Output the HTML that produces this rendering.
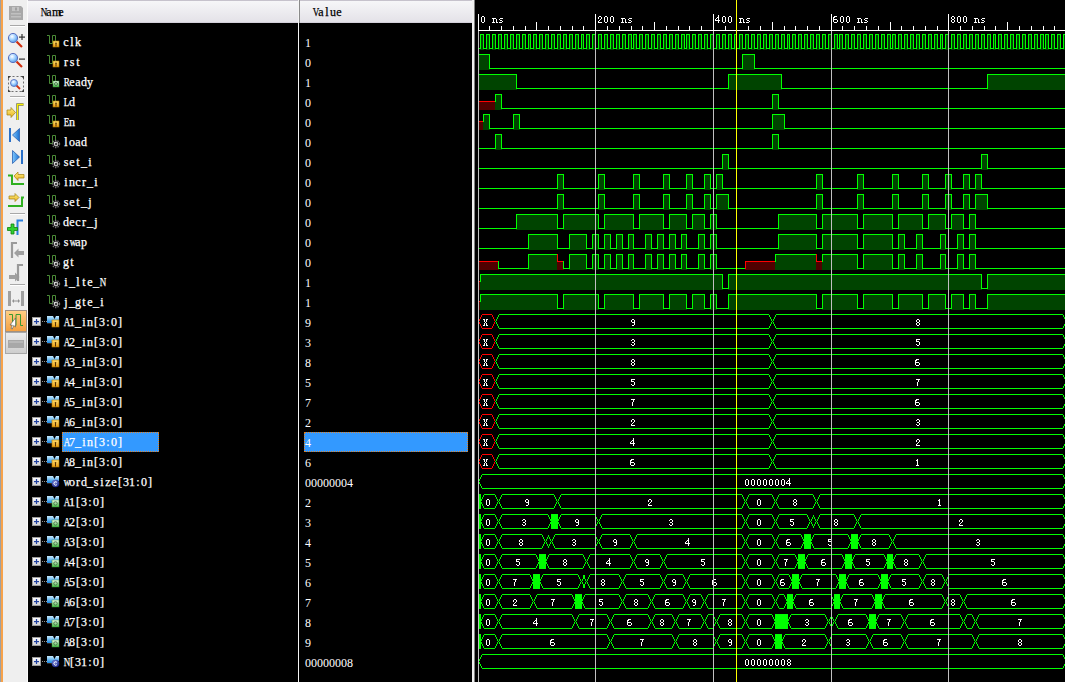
<!DOCTYPE html>
<html><head><meta charset="utf-8">
<style>
html,body{margin:0;padding:0;}
body{width:1065px;height:682px;overflow:hidden;background:#000;position:relative;font-family:"Liberation Mono",monospace;}
#tb{position:absolute;left:0;top:0;width:28px;height:682px;background:#efefef;}
#tb .o{position:absolute;left:1px;top:0;width:2px;height:682px;background:#f5a14a;}
#tb .g{position:absolute;left:0;top:0;width:1px;height:682px;background:#9a9a9a;}
.hdr{position:absolute;top:0;height:22px;background:linear-gradient(#f6f6f8,#e4e2e8);border-top:1px solid #c6c2cc;border-bottom:1px solid #d4d0da;box-sizing:border-box;height:23px;}
.hdr span{position:absolute;top:5px;font-size:12px;color:#000;letter-spacing:-1.2px;}
.nm{position:absolute;left:63px;height:16px;line-height:16px;font-size:12px;color:#fff;font-family:"Liberation Serif",serif;width:120px;-webkit-text-stroke:0.25px currentColor;}
.nm i{position:absolute;top:0;width:6px;text-align:center;font-style:normal;}
.nm i.u{transform:scaleX(.75);}
.vl{position:absolute;left:305px;height:16px;line-height:16px;font-size:12px;color:#fff;font-family:"Liberation Serif",serif;white-space:pre;}
.sel{position:absolute;background:#3399ff;outline:1px dotted #e08020;outline-offset:-1px;}
svg text.bl{font-family:"Liberation Serif",serif;font-size:10.5px;letter-spacing:0.75px;fill:#fff;}
svg text.rl{font-family:"Liberation Serif",serif;font-size:10.5px;letter-spacing:0.75px;fill:#fff;}
</style></head><body>
<svg width="28" height="682" style="position:absolute;left:0;top:0">
<defs>
<radialGradient id="lens" cx="0.4" cy="0.35" r="0.7"><stop offset="0" stop-color="#ffffff"/><stop offset="0.5" stop-color="#9fd0ff"/><stop offset="1" stop-color="#4a90e0"/></radialGradient>
<linearGradient id="org" x1="0" y1="0" x2="0" y2="1"><stop offset="0" stop-color="#ffcf85"/><stop offset="1" stop-color="#f5a040"/></linearGradient>
<linearGradient id="gbtn" x1="0" y1="0" x2="0" y2="1"><stop offset="0" stop-color="#ececec"/><stop offset="1" stop-color="#cdcdcd"/></linearGradient>
<linearGradient id="yel" x1="0" y1="0" x2="0" y2="1"><stop offset="0" stop-color="#fff080"/><stop offset="1" stop-color="#e8b020"/></linearGradient>
<linearGradient id="blu" x1="0" y1="0" x2="1" y2="0"><stop offset="0" stop-color="#80c8ff"/><stop offset="1" stop-color="#1a70d0"/></linearGradient>
</defs>
<rect x="0" y="0" width="1" height="682" fill="#a0a0a0"/>
<rect x="1" y="0" width="2" height="682" fill="#f7a24a"/>
<rect x="3" y="0" width="24" height="682" fill="#efefef"/>
<rect x="27" y="0" width="1" height="682" fill="#fbfbfb"/>
<!-- save -->
<path d="M9 6 H21 L23 8 V20 H9 Z" fill="#a8a8a8"/>
<rect x="12" y="7" width="7" height="4" fill="#c4c4c4"/>
<rect x="15" y="7.5" width="2" height="3" fill="#a0a0a0"/>
<rect x="11" y="13" width="10" height="1.5" fill="#c0c0c0"/>
<rect x="11" y="16" width="10" height="1.5" fill="#c0c0c0"/>
<!-- separator -->
<rect x="10" y="25" width="15" height="1" fill="#a8a8a8"/><rect x="10" y="26" width="15" height="1" fill="#ffffff"/>
<!-- zoom in -->
<line x1="16.5" y1="41.5" x2="22" y2="47" stroke="#d03010" stroke-width="2.2"/>
<circle cx="13" cy="38" r="4.6" fill="url(#lens)" stroke="#5a70c0" stroke-width="1"/>
<rect x="19" y="36.5" width="6" height="1.2" fill="#303030"/><rect x="21.4" y="34" width="1.2" height="6" fill="#303030"/>
<!-- zoom out -->
<line x1="16.5" y1="61.5" x2="22" y2="67" stroke="#d03010" stroke-width="2.2"/>
<circle cx="13" cy="58" r="4.6" fill="url(#lens)" stroke="#5a70c0" stroke-width="1"/>
<rect x="19" y="58.5" width="6" height="1.2" fill="#303030"/>
<!-- zoom fit -->
<rect x="8.5" y="76.5" width="15" height="15" fill="none" stroke="#707070" stroke-width="1" stroke-dasharray="2 2"/>
<path d="M8 76 h3 l-3 3z M24 76 h-3 l3 3z M8 92 h3 l-3 -3z M24 92 h-3 l3 -3z" fill="#404040"/>
<line x1="16" y1="85" x2="20" y2="89" stroke="#d03010" stroke-width="1.8"/>
<circle cx="14" cy="83" r="3.5" fill="url(#lens)" stroke="#5a70c0" stroke-width="0.9"/>
<!-- separator -->
<rect x="10" y="96" width="15" height="1" fill="#a8a8a8"/><rect x="10" y="97" width="15" height="1" fill="#ffffff"/>
<!-- go to cursor -->
<path d="M7 110 H11 V107.5 L15.5 112.5 L11 117.5 V115 H7 Z" fill="url(#yel)" stroke="#a08010" stroke-width="0.7"/>
<path d="M17.5 120 V104.5 H23.5" fill="none" stroke="#606060" stroke-width="2.4"/>
<path d="M17.5 120 V104.5 H23.5" fill="none" stroke="#f8f000" stroke-width="1.3"/>
<!-- |< -->
<rect x="9" y="128" width="2" height="14" fill="#2a70c8"/>
<path d="M12.5 135 L19.5 128.5 V141.5 Z" fill="url(#blu)" stroke="#2a60b0" stroke-width="0.8"/>
<!-- >| -->
<rect x="21" y="150" width="2" height="14" fill="#2a70c8"/>
<path d="M19.5 157 L12.5 150.5 V163.5 Z" fill="url(#blu)" stroke="#2a60b0" stroke-width="0.8"/>
<!-- step left arrow -->
<path d="M8 175.5 H12 V184 H24" fill="none" stroke="#30b020" stroke-width="2"/>
<path d="M14 176 L18 172 V174.5 H24 V178 H18 V180.5 Z" fill="url(#yel)" stroke="#a08010" stroke-width="0.7"/>
<!-- step right arrow -->
<path d="M9 196 H15 V193.5 L19 197.5 L15 201.5 V199 H9 Z" fill="url(#yel)" stroke="#a08010" stroke-width="0.7"/>
<path d="M8 206 H22 V197.5 H24" fill="none" stroke="#30b020" stroke-width="2"/>
<!-- separator -->
<rect x="10" y="213" width="15" height="1" fill="#a8a8a8"/><rect x="10" y="214" width="15" height="1" fill="#ffffff"/>
<!-- add marker -->
<path d="M17.5 235 V220.5 H23" fill="none" stroke="#2a80e0" stroke-width="2"/>
<path d="M11 224 H14 V227.5 H17.5 V230.5 H14 V234 H11 V230.5 H7.5 V227.5 H11 Z" fill="#30d030" stroke="#108010" stroke-width="0.8"/>
<!-- gray step prev marker -->
<path d="M12 258 V243 H17" fill="none" stroke="#9a9a9a" stroke-width="2.2"/>
<path d="M14 253 L18.5 248.5 V251 H24 V255 H18.5 V257.5 Z" fill="#a0a0a0"/>
<!-- gray step next marker -->
<path d="M9 275 H15 V272.5 L19.5 277 L15 281.5 V279 H9 Z" fill="#a0a0a0"/>
<path d="M18 281 V265 H23" fill="none" stroke="#9a9a9a" stroke-width="2.2"/>
<!-- separator -->
<rect x="10" y="284" width="15" height="1" fill="#a8a8a8"/><rect x="10" y="285" width="15" height="1" fill="#ffffff"/>
<!-- H arrows -->
<rect x="8" y="291" width="3" height="15" fill="#a0a0a0"/>
<rect x="21" y="291" width="3" height="15" fill="#a0a0a0"/>
<path d="M12 301 L14 299 V300.5 H18 V299 L20 301 L18 303 V301.5 H14 V303 Z" fill="#909090"/>
<!-- active button -->
<rect x="5.5" y="310.5" width="21" height="21" fill="url(#org)" stroke="#a09080" stroke-width="1"/>
<path d="M9 314.5 H12.5 V325.5 H16 V314.5 H20.5 V325.5 H23" fill="none" stroke="#3a9a30" stroke-width="1"/>
<path d="M15.5 318 L15.5 327 L13.7 325.5 L12.3 329 L11 328.4 L12.3 325 L10 325 Z" fill="#ffffff" stroke="#505050" stroke-width="0.6"/>
<!-- gray button -->
<rect x="5.5" y="332.5" width="21" height="21" fill="url(#gbtn)" stroke="#a8a8a8" stroke-width="1"/>
<rect x="8" y="340" width="16" height="8" fill="#a8a8a8"/>
<rect x="9" y="341" width="14" height="2" fill="#b8b8b8"/>
</svg>

<div class="hdr" style="left:28px;width:270px;"><div class="nm" style="left:12px;top:3px;color:#000"><i class="u" style="left:0px">N</i><i style="left:6px">a</i><i style="left:12px">m</i><i style="left:18px">e</i></div></div>
<div style="position:absolute;left:298px;top:0;width:1px;height:682px;background:#f4f4f4"></div>
<div style="position:absolute;left:299px;top:0;width:1px;height:23px;background:#8a8a8a"></div>
<div class="hdr" style="left:300px;width:172px;"><div class="nm" style="left:12px;top:3px;color:#000"><i class="u" style="left:0px">V</i><i style="left:6px">a</i><i style="left:12px">l</i><i style="left:18px">u</i><i style="left:24px">e</i></div></div>
<div style="position:absolute;left:472px;top:0;width:2px;height:682px;background:#f0f0f0"></div>
<div style="position:absolute;left:474px;top:0;width:1px;height:682px;background:#808080"></div>
<div class="sel" style="left:62px;top:432px;width:97px;height:20px"></div>
<div class="sel" style="left:304px;top:432px;width:164px;height:20px"></div>
<div class="nm" style="top:34px"><i style="left:0px">c</i><i style="left:6px">l</i><i style="left:12px">k</i></div><div class="nm" style="top:54px"><i style="left:0px">r</i><i style="left:6px">s</i><i style="left:12px">t</i></div><div class="nm" style="top:74px"><i class="u" style="left:0px">R</i><i style="left:6px">e</i><i style="left:12px">a</i><i style="left:18px">d</i><i style="left:24px">y</i></div><div class="nm" style="top:94px"><i class="u" style="left:0px">L</i><i style="left:6px">d</i></div><div class="nm" style="top:114px"><i class="u" style="left:0px">E</i><i style="left:6px">n</i></div><div class="nm" style="top:134px"><i style="left:0px">l</i><i style="left:6px">o</i><i style="left:12px">a</i><i style="left:18px">d</i></div><div class="nm" style="top:154px"><i style="left:0px">s</i><i style="left:6px">e</i><i style="left:12px">t</i><i style="left:18px">_</i><i style="left:24px">i</i></div><div class="nm" style="top:174px"><i style="left:0px">i</i><i style="left:6px">n</i><i style="left:12px">c</i><i style="left:18px">r</i><i style="left:24px">_</i><i style="left:30px">i</i></div><div class="nm" style="top:194px"><i style="left:0px">s</i><i style="left:6px">e</i><i style="left:12px">t</i><i style="left:18px">_</i><i style="left:24px">j</i></div><div class="nm" style="top:214px"><i style="left:0px">d</i><i style="left:6px">e</i><i style="left:12px">c</i><i style="left:18px">r</i><i style="left:24px">_</i><i style="left:30px">j</i></div><div class="nm" style="top:234px"><i style="left:0px">s</i><i class="u" style="left:6px">w</i><i style="left:12px">a</i><i style="left:18px">p</i></div><div class="nm" style="top:254px"><i style="left:0px">g</i><i style="left:6px">t</i></div><div class="nm" style="top:274px"><i style="left:0px">i</i><i style="left:6px">_</i><i style="left:12px">l</i><i style="left:18px">t</i><i style="left:24px">e</i><i style="left:30px">_</i><i class="u" style="left:36px">N</i></div><div class="nm" style="top:294px"><i style="left:0px">j</i><i style="left:6px">_</i><i style="left:12px">g</i><i style="left:18px">t</i><i style="left:24px">e</i><i style="left:30px">_</i><i style="left:36px">i</i></div><div class="nm" style="top:314px"><i class="u" style="left:0px">A</i><i style="left:6px">1</i><i style="left:12px">_</i><i style="left:18px">i</i><i style="left:24px">n</i><i style="left:30px">[</i><i style="left:36px">3</i><i style="left:42px">:</i><i style="left:48px">0</i><i style="left:54px">]</i></div><div class="nm" style="top:334px"><i class="u" style="left:0px">A</i><i style="left:6px">2</i><i style="left:12px">_</i><i style="left:18px">i</i><i style="left:24px">n</i><i style="left:30px">[</i><i style="left:36px">3</i><i style="left:42px">:</i><i style="left:48px">0</i><i style="left:54px">]</i></div><div class="nm" style="top:354px"><i class="u" style="left:0px">A</i><i style="left:6px">3</i><i style="left:12px">_</i><i style="left:18px">i</i><i style="left:24px">n</i><i style="left:30px">[</i><i style="left:36px">3</i><i style="left:42px">:</i><i style="left:48px">0</i><i style="left:54px">]</i></div><div class="nm" style="top:374px"><i class="u" style="left:0px">A</i><i style="left:6px">4</i><i style="left:12px">_</i><i style="left:18px">i</i><i style="left:24px">n</i><i style="left:30px">[</i><i style="left:36px">3</i><i style="left:42px">:</i><i style="left:48px">0</i><i style="left:54px">]</i></div><div class="nm" style="top:394px"><i class="u" style="left:0px">A</i><i style="left:6px">5</i><i style="left:12px">_</i><i style="left:18px">i</i><i style="left:24px">n</i><i style="left:30px">[</i><i style="left:36px">3</i><i style="left:42px">:</i><i style="left:48px">0</i><i style="left:54px">]</i></div><div class="nm" style="top:414px"><i class="u" style="left:0px">A</i><i style="left:6px">6</i><i style="left:12px">_</i><i style="left:18px">i</i><i style="left:24px">n</i><i style="left:30px">[</i><i style="left:36px">3</i><i style="left:42px">:</i><i style="left:48px">0</i><i style="left:54px">]</i></div><div class="nm" style="top:434px"><i class="u" style="left:0px">A</i><i style="left:6px">7</i><i style="left:12px">_</i><i style="left:18px">i</i><i style="left:24px">n</i><i style="left:30px">[</i><i style="left:36px">3</i><i style="left:42px">:</i><i style="left:48px">0</i><i style="left:54px">]</i></div><div class="nm" style="top:454px"><i class="u" style="left:0px">A</i><i style="left:6px">8</i><i style="left:12px">_</i><i style="left:18px">i</i><i style="left:24px">n</i><i style="left:30px">[</i><i style="left:36px">3</i><i style="left:42px">:</i><i style="left:48px">0</i><i style="left:54px">]</i></div><div class="nm" style="top:474px"><i class="u" style="left:0px">w</i><i style="left:6px">o</i><i style="left:12px">r</i><i style="left:18px">d</i><i style="left:24px">_</i><i style="left:30px">s</i><i style="left:36px">i</i><i style="left:42px">z</i><i style="left:48px">e</i><i style="left:54px">[</i><i style="left:60px">3</i><i style="left:66px">1</i><i style="left:72px">:</i><i style="left:78px">0</i><i style="left:84px">]</i></div><div class="nm" style="top:494px"><i class="u" style="left:0px">A</i><i style="left:6px">1</i><i style="left:12px">[</i><i style="left:18px">3</i><i style="left:24px">:</i><i style="left:30px">0</i><i style="left:36px">]</i></div><div class="nm" style="top:514px"><i class="u" style="left:0px">A</i><i style="left:6px">2</i><i style="left:12px">[</i><i style="left:18px">3</i><i style="left:24px">:</i><i style="left:30px">0</i><i style="left:36px">]</i></div><div class="nm" style="top:534px"><i class="u" style="left:0px">A</i><i style="left:6px">3</i><i style="left:12px">[</i><i style="left:18px">3</i><i style="left:24px">:</i><i style="left:30px">0</i><i style="left:36px">]</i></div><div class="nm" style="top:554px"><i class="u" style="left:0px">A</i><i style="left:6px">4</i><i style="left:12px">[</i><i style="left:18px">3</i><i style="left:24px">:</i><i style="left:30px">0</i><i style="left:36px">]</i></div><div class="nm" style="top:574px"><i class="u" style="left:0px">A</i><i style="left:6px">5</i><i style="left:12px">[</i><i style="left:18px">3</i><i style="left:24px">:</i><i style="left:30px">0</i><i style="left:36px">]</i></div><div class="nm" style="top:594px"><i class="u" style="left:0px">A</i><i style="left:6px">6</i><i style="left:12px">[</i><i style="left:18px">3</i><i style="left:24px">:</i><i style="left:30px">0</i><i style="left:36px">]</i></div><div class="nm" style="top:614px"><i class="u" style="left:0px">A</i><i style="left:6px">7</i><i style="left:12px">[</i><i style="left:18px">3</i><i style="left:24px">:</i><i style="left:30px">0</i><i style="left:36px">]</i></div><div class="nm" style="top:634px"><i class="u" style="left:0px">A</i><i style="left:6px">8</i><i style="left:12px">[</i><i style="left:18px">3</i><i style="left:24px">:</i><i style="left:30px">0</i><i style="left:36px">]</i></div><div class="nm" style="top:654px"><i class="u" style="left:0px">N</i><i style="left:6px">[</i><i style="left:12px">3</i><i style="left:18px">1</i><i style="left:24px">:</i><i style="left:30px">0</i><i style="left:36px">]</i></div>
<div class="vl" style="top:35px">1</div><div class="vl" style="top:55px">0</div><div class="vl" style="top:75px">1</div><div class="vl" style="top:95px">0</div><div class="vl" style="top:115px">0</div><div class="vl" style="top:135px">0</div><div class="vl" style="top:155px">0</div><div class="vl" style="top:175px">0</div><div class="vl" style="top:195px">0</div><div class="vl" style="top:215px">0</div><div class="vl" style="top:235px">0</div><div class="vl" style="top:255px">0</div><div class="vl" style="top:275px">1</div><div class="vl" style="top:295px">1</div><div class="vl" style="top:315px">9</div><div class="vl" style="top:335px">3</div><div class="vl" style="top:355px">8</div><div class="vl" style="top:375px">5</div><div class="vl" style="top:395px">7</div><div class="vl" style="top:415px">2</div><div class="vl" style="top:435px">4</div><div class="vl" style="top:455px">6</div><div class="vl" style="top:475px">00000004</div><div class="vl" style="top:495px">2</div><div class="vl" style="top:515px">3</div><div class="vl" style="top:535px">4</div><div class="vl" style="top:555px">5</div><div class="vl" style="top:575px">6</div><div class="vl" style="top:595px">7</div><div class="vl" style="top:615px">8</div><div class="vl" style="top:635px">9</div><div class="vl" style="top:655px">00000008</div>
<svg width="1065" height="682" style="position:absolute;left:0;top:0">
<defs>
<linearGradient id="gy" x1="0" y1="0" x2="0" y2="1"><stop offset="0" stop-color="#ffe070"/><stop offset="1" stop-color="#e89a10"/></linearGradient>
<linearGradient id="gg" x1="0" y1="0" x2="0" y2="1"><stop offset="0" stop-color="#f0fff0"/><stop offset="1" stop-color="#40c040"/></linearGradient>
<linearGradient id="gbox" x1="0" y1="0" x2="0" y2="1"><stop offset="0" stop-color="#ffffff"/><stop offset="1" stop-color="#d0d0d0"/></linearGradient>
<linearGradient id="gbus" x1="0" y1="0" x2="0" y2="1"><stop offset="0" stop-color="#c8ecff"/><stop offset="1" stop-color="#1a88e0"/></linearGradient>
<radialGradient id="gc" cx="0.4" cy="0.35" r="0.7"><stop offset="0" stop-color="#8090e0"/><stop offset="1" stop-color="#101a80"/></radialGradient>
</defs>
<path d="M47 35.5 H49.5 V43.5 H52.5 V35.5 H55.5 V41" stroke="#4a8a36" stroke-width="1" fill="none"/>
<rect x="53" y="41" width="6" height="6" fill="url(#gy)" stroke="#b07800" stroke-width="0.6"/><circle cx="56.0" cy="43.2" r="0.8" fill="#503000"/><rect x="55.5" y="43.5" width="1" height="3.0" fill="#503000"/>
<path d="M47 55.5 H49.5 V63.5 H52.5 V55.5 H55.5 V61" stroke="#4a8a36" stroke-width="1" fill="none"/>
<rect x="53" y="61" width="6" height="6" fill="url(#gy)" stroke="#b07800" stroke-width="0.6"/><circle cx="56.0" cy="63.2" r="0.8" fill="#503000"/><rect x="55.5" y="63.5" width="1" height="3.0" fill="#503000"/>
<path d="M47 75.5 H49.5 V83.5 H52.5 V75.5 H55.5 V81" stroke="#4a8a36" stroke-width="1" fill="none"/>
<rect x="53" y="81" width="6" height="6" fill="url(#gg)" stroke="#3a8a3a" stroke-width="0.5"/><circle cx="56.0" cy="84.0" r="1.5" fill="none" stroke="#4a6a4a" stroke-width="0.9"/>
<path d="M47 95.5 H49.5 V103.5 H52.5 V95.5 H55.5 V101" stroke="#4a8a36" stroke-width="1" fill="none"/>
<rect x="53" y="101" width="6" height="6" fill="url(#gy)" stroke="#b07800" stroke-width="0.6"/><circle cx="56.0" cy="103.2" r="0.8" fill="#503000"/><rect x="55.5" y="103.5" width="1" height="3.0" fill="#503000"/>
<path d="M47 115.5 H49.5 V123.5 H52.5 V115.5 H55.5 V121" stroke="#4a8a36" stroke-width="1" fill="none"/>
<rect x="53" y="121" width="6" height="6" fill="url(#gy)" stroke="#b07800" stroke-width="0.6"/><circle cx="56.0" cy="123.2" r="0.8" fill="#503000"/><rect x="55.5" y="123.5" width="1" height="3.0" fill="#503000"/>
<path d="M47 135.5 H49.5 V143.5 H52.5 V135.5 H55.5 V141" stroke="#4a8a36" stroke-width="1" fill="none"/>
<circle cx="56.0" cy="144.0" r="3.5" fill="none" stroke="#7a7a7a" stroke-width="1.4" stroke-dasharray="1.4 1.1"/><circle cx="56.0" cy="144.0" r="2.4" fill="#b4b4b4"/><circle cx="55.2" cy="143.2" r="1.2" fill="#e0e0e0"/><circle cx="56.0" cy="144.0" r="1" fill="#181818"/>
<path d="M47 155.5 H49.5 V163.5 H52.5 V155.5 H55.5 V161" stroke="#4a8a36" stroke-width="1" fill="none"/>
<circle cx="56.0" cy="164.0" r="3.5" fill="none" stroke="#7a7a7a" stroke-width="1.4" stroke-dasharray="1.4 1.1"/><circle cx="56.0" cy="164.0" r="2.4" fill="#b4b4b4"/><circle cx="55.2" cy="163.2" r="1.2" fill="#e0e0e0"/><circle cx="56.0" cy="164.0" r="1" fill="#181818"/>
<path d="M47 175.5 H49.5 V183.5 H52.5 V175.5 H55.5 V181" stroke="#4a8a36" stroke-width="1" fill="none"/>
<circle cx="56.0" cy="184.0" r="3.5" fill="none" stroke="#7a7a7a" stroke-width="1.4" stroke-dasharray="1.4 1.1"/><circle cx="56.0" cy="184.0" r="2.4" fill="#b4b4b4"/><circle cx="55.2" cy="183.2" r="1.2" fill="#e0e0e0"/><circle cx="56.0" cy="184.0" r="1" fill="#181818"/>
<path d="M47 195.5 H49.5 V203.5 H52.5 V195.5 H55.5 V201" stroke="#4a8a36" stroke-width="1" fill="none"/>
<circle cx="56.0" cy="204.0" r="3.5" fill="none" stroke="#7a7a7a" stroke-width="1.4" stroke-dasharray="1.4 1.1"/><circle cx="56.0" cy="204.0" r="2.4" fill="#b4b4b4"/><circle cx="55.2" cy="203.2" r="1.2" fill="#e0e0e0"/><circle cx="56.0" cy="204.0" r="1" fill="#181818"/>
<path d="M47 215.5 H49.5 V223.5 H52.5 V215.5 H55.5 V221" stroke="#4a8a36" stroke-width="1" fill="none"/>
<circle cx="56.0" cy="224.0" r="3.5" fill="none" stroke="#7a7a7a" stroke-width="1.4" stroke-dasharray="1.4 1.1"/><circle cx="56.0" cy="224.0" r="2.4" fill="#b4b4b4"/><circle cx="55.2" cy="223.2" r="1.2" fill="#e0e0e0"/><circle cx="56.0" cy="224.0" r="1" fill="#181818"/>
<path d="M47 235.5 H49.5 V243.5 H52.5 V235.5 H55.5 V241" stroke="#4a8a36" stroke-width="1" fill="none"/>
<circle cx="56.0" cy="244.0" r="3.5" fill="none" stroke="#7a7a7a" stroke-width="1.4" stroke-dasharray="1.4 1.1"/><circle cx="56.0" cy="244.0" r="2.4" fill="#b4b4b4"/><circle cx="55.2" cy="243.2" r="1.2" fill="#e0e0e0"/><circle cx="56.0" cy="244.0" r="1" fill="#181818"/>
<path d="M47 255.5 H49.5 V263.5 H52.5 V255.5 H55.5 V261" stroke="#4a8a36" stroke-width="1" fill="none"/>
<circle cx="56.0" cy="264.0" r="3.5" fill="none" stroke="#7a7a7a" stroke-width="1.4" stroke-dasharray="1.4 1.1"/><circle cx="56.0" cy="264.0" r="2.4" fill="#b4b4b4"/><circle cx="55.2" cy="263.2" r="1.2" fill="#e0e0e0"/><circle cx="56.0" cy="264.0" r="1" fill="#181818"/>
<path d="M47 275.5 H49.5 V283.5 H52.5 V275.5 H55.5 V281" stroke="#4a8a36" stroke-width="1" fill="none"/>
<circle cx="56.0" cy="284.0" r="3.5" fill="none" stroke="#7a7a7a" stroke-width="1.4" stroke-dasharray="1.4 1.1"/><circle cx="56.0" cy="284.0" r="2.4" fill="#b4b4b4"/><circle cx="55.2" cy="283.2" r="1.2" fill="#e0e0e0"/><circle cx="56.0" cy="284.0" r="1" fill="#181818"/>
<path d="M47 295.5 H49.5 V303.5 H52.5 V295.5 H55.5 V301" stroke="#4a8a36" stroke-width="1" fill="none"/>
<circle cx="56.0" cy="304.0" r="3.5" fill="none" stroke="#7a7a7a" stroke-width="1.4" stroke-dasharray="1.4 1.1"/><circle cx="56.0" cy="304.0" r="2.4" fill="#b4b4b4"/><circle cx="55.2" cy="303.2" r="1.2" fill="#e0e0e0"/><circle cx="56.0" cy="304.0" r="1" fill="#181818"/>
<rect x="32.5" y="317.5" width="8" height="8" fill="url(#gbox)" stroke="#9a9a9a" stroke-width="1"/>
<rect x="34" y="321" width="5" height="1.2" fill="#1f3f9f"/><rect x="35.9" y="319" width="1.2" height="5" fill="#1f3f9f"/>
<rect x="42" y="321" width="1" height="1" fill="#909090"/><rect x="44" y="321" width="1" height="1" fill="#909090"/><rect x="46" y="321" width="1" height="1" fill="#909090"/>
<rect x="47" y="323" width="6" height="1" fill="#3a2a20"/>
<path d="M47 316 H53 L54.5 319 L56 316 H59 V321 H53 V323 H47 Z" fill="url(#gbus)"/>
<rect x="52" y="320" width="7" height="7" fill="url(#gy)" stroke="#b07800" stroke-width="0.6"/><circle cx="55.5" cy="322.7" r="0.8" fill="#503000"/><rect x="55.0" y="323.0" width="1" height="3.5" fill="#503000"/>
<rect x="32.5" y="337.5" width="8" height="8" fill="url(#gbox)" stroke="#9a9a9a" stroke-width="1"/>
<rect x="34" y="341" width="5" height="1.2" fill="#1f3f9f"/><rect x="35.9" y="339" width="1.2" height="5" fill="#1f3f9f"/>
<rect x="42" y="341" width="1" height="1" fill="#909090"/><rect x="44" y="341" width="1" height="1" fill="#909090"/><rect x="46" y="341" width="1" height="1" fill="#909090"/>
<rect x="47" y="343" width="6" height="1" fill="#3a2a20"/>
<path d="M47 336 H53 L54.5 339 L56 336 H59 V341 H53 V343 H47 Z" fill="url(#gbus)"/>
<rect x="52" y="340" width="7" height="7" fill="url(#gy)" stroke="#b07800" stroke-width="0.6"/><circle cx="55.5" cy="342.7" r="0.8" fill="#503000"/><rect x="55.0" y="343.0" width="1" height="3.5" fill="#503000"/>
<rect x="32.5" y="357.5" width="8" height="8" fill="url(#gbox)" stroke="#9a9a9a" stroke-width="1"/>
<rect x="34" y="361" width="5" height="1.2" fill="#1f3f9f"/><rect x="35.9" y="359" width="1.2" height="5" fill="#1f3f9f"/>
<rect x="42" y="361" width="1" height="1" fill="#909090"/><rect x="44" y="361" width="1" height="1" fill="#909090"/><rect x="46" y="361" width="1" height="1" fill="#909090"/>
<rect x="47" y="363" width="6" height="1" fill="#3a2a20"/>
<path d="M47 356 H53 L54.5 359 L56 356 H59 V361 H53 V363 H47 Z" fill="url(#gbus)"/>
<rect x="52" y="360" width="7" height="7" fill="url(#gy)" stroke="#b07800" stroke-width="0.6"/><circle cx="55.5" cy="362.7" r="0.8" fill="#503000"/><rect x="55.0" y="363.0" width="1" height="3.5" fill="#503000"/>
<rect x="32.5" y="377.5" width="8" height="8" fill="url(#gbox)" stroke="#9a9a9a" stroke-width="1"/>
<rect x="34" y="381" width="5" height="1.2" fill="#1f3f9f"/><rect x="35.9" y="379" width="1.2" height="5" fill="#1f3f9f"/>
<rect x="42" y="381" width="1" height="1" fill="#909090"/><rect x="44" y="381" width="1" height="1" fill="#909090"/><rect x="46" y="381" width="1" height="1" fill="#909090"/>
<rect x="47" y="383" width="6" height="1" fill="#3a2a20"/>
<path d="M47 376 H53 L54.5 379 L56 376 H59 V381 H53 V383 H47 Z" fill="url(#gbus)"/>
<rect x="52" y="380" width="7" height="7" fill="url(#gy)" stroke="#b07800" stroke-width="0.6"/><circle cx="55.5" cy="382.7" r="0.8" fill="#503000"/><rect x="55.0" y="383.0" width="1" height="3.5" fill="#503000"/>
<rect x="32.5" y="397.5" width="8" height="8" fill="url(#gbox)" stroke="#9a9a9a" stroke-width="1"/>
<rect x="34" y="401" width="5" height="1.2" fill="#1f3f9f"/><rect x="35.9" y="399" width="1.2" height="5" fill="#1f3f9f"/>
<rect x="42" y="401" width="1" height="1" fill="#909090"/><rect x="44" y="401" width="1" height="1" fill="#909090"/><rect x="46" y="401" width="1" height="1" fill="#909090"/>
<rect x="47" y="403" width="6" height="1" fill="#3a2a20"/>
<path d="M47 396 H53 L54.5 399 L56 396 H59 V401 H53 V403 H47 Z" fill="url(#gbus)"/>
<rect x="52" y="400" width="7" height="7" fill="url(#gy)" stroke="#b07800" stroke-width="0.6"/><circle cx="55.5" cy="402.7" r="0.8" fill="#503000"/><rect x="55.0" y="403.0" width="1" height="3.5" fill="#503000"/>
<rect x="32.5" y="417.5" width="8" height="8" fill="url(#gbox)" stroke="#9a9a9a" stroke-width="1"/>
<rect x="34" y="421" width="5" height="1.2" fill="#1f3f9f"/><rect x="35.9" y="419" width="1.2" height="5" fill="#1f3f9f"/>
<rect x="42" y="421" width="1" height="1" fill="#909090"/><rect x="44" y="421" width="1" height="1" fill="#909090"/><rect x="46" y="421" width="1" height="1" fill="#909090"/>
<rect x="47" y="423" width="6" height="1" fill="#3a2a20"/>
<path d="M47 416 H53 L54.5 419 L56 416 H59 V421 H53 V423 H47 Z" fill="url(#gbus)"/>
<rect x="52" y="420" width="7" height="7" fill="url(#gy)" stroke="#b07800" stroke-width="0.6"/><circle cx="55.5" cy="422.7" r="0.8" fill="#503000"/><rect x="55.0" y="423.0" width="1" height="3.5" fill="#503000"/>
<rect x="32.5" y="437.5" width="8" height="8" fill="url(#gbox)" stroke="#9a9a9a" stroke-width="1"/>
<rect x="34" y="441" width="5" height="1.2" fill="#1f3f9f"/><rect x="35.9" y="439" width="1.2" height="5" fill="#1f3f9f"/>
<rect x="42" y="441" width="1" height="1" fill="#909090"/><rect x="44" y="441" width="1" height="1" fill="#909090"/><rect x="46" y="441" width="1" height="1" fill="#909090"/>
<rect x="47" y="443" width="6" height="1" fill="#3a2a20"/>
<path d="M47 436 H53 L54.5 439 L56 436 H59 V441 H53 V443 H47 Z" fill="url(#gbus)"/>
<rect x="52" y="440" width="7" height="7" fill="url(#gy)" stroke="#b07800" stroke-width="0.6"/><circle cx="55.5" cy="442.7" r="0.8" fill="#503000"/><rect x="55.0" y="443.0" width="1" height="3.5" fill="#503000"/>
<rect x="32.5" y="457.5" width="8" height="8" fill="url(#gbox)" stroke="#9a9a9a" stroke-width="1"/>
<rect x="34" y="461" width="5" height="1.2" fill="#1f3f9f"/><rect x="35.9" y="459" width="1.2" height="5" fill="#1f3f9f"/>
<rect x="42" y="461" width="1" height="1" fill="#909090"/><rect x="44" y="461" width="1" height="1" fill="#909090"/><rect x="46" y="461" width="1" height="1" fill="#909090"/>
<rect x="47" y="463" width="6" height="1" fill="#3a2a20"/>
<path d="M47 456 H53 L54.5 459 L56 456 H59 V461 H53 V463 H47 Z" fill="url(#gbus)"/>
<rect x="52" y="460" width="7" height="7" fill="url(#gy)" stroke="#b07800" stroke-width="0.6"/><circle cx="55.5" cy="462.7" r="0.8" fill="#503000"/><rect x="55.0" y="463.0" width="1" height="3.5" fill="#503000"/>
<rect x="32.5" y="477.5" width="8" height="8" fill="url(#gbox)" stroke="#9a9a9a" stroke-width="1"/>
<rect x="34" y="481" width="5" height="1.2" fill="#1f3f9f"/><rect x="35.9" y="479" width="1.2" height="5" fill="#1f3f9f"/>
<rect x="42" y="481" width="1" height="1" fill="#909090"/><rect x="44" y="481" width="1" height="1" fill="#909090"/><rect x="46" y="481" width="1" height="1" fill="#909090"/>
<rect x="47" y="483" width="6" height="1" fill="#3a2a20"/>
<path d="M47 476 H53 L54.5 479 L56 476 H59 V481 H53 V483 H47 Z" fill="url(#gbus)"/>
<circle cx="55.5" cy="483.5" r="3.8" fill="url(#gc)"/><path d="M56.9 482.3 A1.7 1.7 0 1 0 56.9 484.7" stroke="#ffffff" stroke-width="1" fill="none"/>
<rect x="32.5" y="497.5" width="8" height="8" fill="url(#gbox)" stroke="#9a9a9a" stroke-width="1"/>
<rect x="34" y="501" width="5" height="1.2" fill="#1f3f9f"/><rect x="35.9" y="499" width="1.2" height="5" fill="#1f3f9f"/>
<rect x="42" y="501" width="1" height="1" fill="#909090"/><rect x="44" y="501" width="1" height="1" fill="#909090"/><rect x="46" y="501" width="1" height="1" fill="#909090"/>
<rect x="47" y="503" width="6" height="1" fill="#3a2a20"/>
<path d="M47 496 H53 L54.5 499 L56 496 H59 V501 H53 V503 H47 Z" fill="url(#gbus)"/>
<rect x="52" y="500" width="7" height="7" fill="url(#gg)" stroke="#3a8a3a" stroke-width="0.5"/><circle cx="55.5" cy="503.5" r="1.75" fill="none" stroke="#4a6a4a" stroke-width="0.9"/>
<rect x="32.5" y="517.5" width="8" height="8" fill="url(#gbox)" stroke="#9a9a9a" stroke-width="1"/>
<rect x="34" y="521" width="5" height="1.2" fill="#1f3f9f"/><rect x="35.9" y="519" width="1.2" height="5" fill="#1f3f9f"/>
<rect x="42" y="521" width="1" height="1" fill="#909090"/><rect x="44" y="521" width="1" height="1" fill="#909090"/><rect x="46" y="521" width="1" height="1" fill="#909090"/>
<rect x="47" y="523" width="6" height="1" fill="#3a2a20"/>
<path d="M47 516 H53 L54.5 519 L56 516 H59 V521 H53 V523 H47 Z" fill="url(#gbus)"/>
<rect x="52" y="520" width="7" height="7" fill="url(#gg)" stroke="#3a8a3a" stroke-width="0.5"/><circle cx="55.5" cy="523.5" r="1.75" fill="none" stroke="#4a6a4a" stroke-width="0.9"/>
<rect x="32.5" y="537.5" width="8" height="8" fill="url(#gbox)" stroke="#9a9a9a" stroke-width="1"/>
<rect x="34" y="541" width="5" height="1.2" fill="#1f3f9f"/><rect x="35.9" y="539" width="1.2" height="5" fill="#1f3f9f"/>
<rect x="42" y="541" width="1" height="1" fill="#909090"/><rect x="44" y="541" width="1" height="1" fill="#909090"/><rect x="46" y="541" width="1" height="1" fill="#909090"/>
<rect x="47" y="543" width="6" height="1" fill="#3a2a20"/>
<path d="M47 536 H53 L54.5 539 L56 536 H59 V541 H53 V543 H47 Z" fill="url(#gbus)"/>
<rect x="52" y="540" width="7" height="7" fill="url(#gg)" stroke="#3a8a3a" stroke-width="0.5"/><circle cx="55.5" cy="543.5" r="1.75" fill="none" stroke="#4a6a4a" stroke-width="0.9"/>
<rect x="32.5" y="557.5" width="8" height="8" fill="url(#gbox)" stroke="#9a9a9a" stroke-width="1"/>
<rect x="34" y="561" width="5" height="1.2" fill="#1f3f9f"/><rect x="35.9" y="559" width="1.2" height="5" fill="#1f3f9f"/>
<rect x="42" y="561" width="1" height="1" fill="#909090"/><rect x="44" y="561" width="1" height="1" fill="#909090"/><rect x="46" y="561" width="1" height="1" fill="#909090"/>
<rect x="47" y="563" width="6" height="1" fill="#3a2a20"/>
<path d="M47 556 H53 L54.5 559 L56 556 H59 V561 H53 V563 H47 Z" fill="url(#gbus)"/>
<rect x="52" y="560" width="7" height="7" fill="url(#gg)" stroke="#3a8a3a" stroke-width="0.5"/><circle cx="55.5" cy="563.5" r="1.75" fill="none" stroke="#4a6a4a" stroke-width="0.9"/>
<rect x="32.5" y="577.5" width="8" height="8" fill="url(#gbox)" stroke="#9a9a9a" stroke-width="1"/>
<rect x="34" y="581" width="5" height="1.2" fill="#1f3f9f"/><rect x="35.9" y="579" width="1.2" height="5" fill="#1f3f9f"/>
<rect x="42" y="581" width="1" height="1" fill="#909090"/><rect x="44" y="581" width="1" height="1" fill="#909090"/><rect x="46" y="581" width="1" height="1" fill="#909090"/>
<rect x="47" y="583" width="6" height="1" fill="#3a2a20"/>
<path d="M47 576 H53 L54.5 579 L56 576 H59 V581 H53 V583 H47 Z" fill="url(#gbus)"/>
<rect x="52" y="580" width="7" height="7" fill="url(#gg)" stroke="#3a8a3a" stroke-width="0.5"/><circle cx="55.5" cy="583.5" r="1.75" fill="none" stroke="#4a6a4a" stroke-width="0.9"/>
<rect x="32.5" y="597.5" width="8" height="8" fill="url(#gbox)" stroke="#9a9a9a" stroke-width="1"/>
<rect x="34" y="601" width="5" height="1.2" fill="#1f3f9f"/><rect x="35.9" y="599" width="1.2" height="5" fill="#1f3f9f"/>
<rect x="42" y="601" width="1" height="1" fill="#909090"/><rect x="44" y="601" width="1" height="1" fill="#909090"/><rect x="46" y="601" width="1" height="1" fill="#909090"/>
<rect x="47" y="603" width="6" height="1" fill="#3a2a20"/>
<path d="M47 596 H53 L54.5 599 L56 596 H59 V601 H53 V603 H47 Z" fill="url(#gbus)"/>
<rect x="52" y="600" width="7" height="7" fill="url(#gg)" stroke="#3a8a3a" stroke-width="0.5"/><circle cx="55.5" cy="603.5" r="1.75" fill="none" stroke="#4a6a4a" stroke-width="0.9"/>
<rect x="32.5" y="617.5" width="8" height="8" fill="url(#gbox)" stroke="#9a9a9a" stroke-width="1"/>
<rect x="34" y="621" width="5" height="1.2" fill="#1f3f9f"/><rect x="35.9" y="619" width="1.2" height="5" fill="#1f3f9f"/>
<rect x="42" y="621" width="1" height="1" fill="#909090"/><rect x="44" y="621" width="1" height="1" fill="#909090"/><rect x="46" y="621" width="1" height="1" fill="#909090"/>
<rect x="47" y="623" width="6" height="1" fill="#3a2a20"/>
<path d="M47 616 H53 L54.5 619 L56 616 H59 V621 H53 V623 H47 Z" fill="url(#gbus)"/>
<rect x="52" y="620" width="7" height="7" fill="url(#gg)" stroke="#3a8a3a" stroke-width="0.5"/><circle cx="55.5" cy="623.5" r="1.75" fill="none" stroke="#4a6a4a" stroke-width="0.9"/>
<rect x="32.5" y="637.5" width="8" height="8" fill="url(#gbox)" stroke="#9a9a9a" stroke-width="1"/>
<rect x="34" y="641" width="5" height="1.2" fill="#1f3f9f"/><rect x="35.9" y="639" width="1.2" height="5" fill="#1f3f9f"/>
<rect x="42" y="641" width="1" height="1" fill="#909090"/><rect x="44" y="641" width="1" height="1" fill="#909090"/><rect x="46" y="641" width="1" height="1" fill="#909090"/>
<rect x="47" y="643" width="6" height="1" fill="#3a2a20"/>
<path d="M47 636 H53 L54.5 639 L56 636 H59 V641 H53 V643 H47 Z" fill="url(#gbus)"/>
<rect x="52" y="640" width="7" height="7" fill="url(#gg)" stroke="#3a8a3a" stroke-width="0.5"/><circle cx="55.5" cy="643.5" r="1.75" fill="none" stroke="#4a6a4a" stroke-width="0.9"/>
<rect x="32.5" y="657.5" width="8" height="8" fill="url(#gbox)" stroke="#9a9a9a" stroke-width="1"/>
<rect x="34" y="661" width="5" height="1.2" fill="#1f3f9f"/><rect x="35.9" y="659" width="1.2" height="5" fill="#1f3f9f"/>
<rect x="42" y="661" width="1" height="1" fill="#909090"/><rect x="44" y="661" width="1" height="1" fill="#909090"/><rect x="46" y="661" width="1" height="1" fill="#909090"/>
<rect x="47" y="663" width="6" height="1" fill="#3a2a20"/>
<path d="M47 656 H53 L54.5 659 L56 656 H59 V661 H53 V663 H47 Z" fill="url(#gbus)"/>
<circle cx="55.5" cy="663.5" r="3.8" fill="url(#gc)"/><path d="M56.9 662.3 A1.7 1.7 0 1 0 56.9 664.7" stroke="#ffffff" stroke-width="1" fill="none"/>
</svg>
<svg width="1065" height="682" style="position:absolute;left:0;top:0;will-change:transform" shape-rendering="crispEdges">
<rect x="478" y="14" width="1" height="17" fill="#ffffff"/>
<rect x="595" y="14" width="1" height="17" fill="#ffffff"/>
<rect x="713" y="14" width="1" height="17" fill="#ffffff"/>
<rect x="831" y="14" width="1" height="17" fill="#ffffff"/>
<rect x="948" y="14" width="1" height="17" fill="#ffffff"/>
<rect x="478" y="30" width="587" height="1" fill="#ffffff"/>
<rect x="489" y="26" width="1" height="4" fill="#ffffff"/>
<rect x="501" y="26" width="1" height="4" fill="#ffffff"/>
<rect x="513" y="26" width="1" height="4" fill="#ffffff"/>
<rect x="525" y="26" width="1" height="4" fill="#ffffff"/>
<rect x="536" y="22" width="1" height="8" fill="#ffffff"/>
<rect x="548" y="26" width="1" height="4" fill="#ffffff"/>
<rect x="560" y="26" width="1" height="4" fill="#ffffff"/>
<rect x="572" y="26" width="1" height="4" fill="#ffffff"/>
<rect x="583" y="26" width="1" height="4" fill="#ffffff"/>
<rect x="607" y="26" width="1" height="4" fill="#ffffff"/>
<rect x="619" y="26" width="1" height="4" fill="#ffffff"/>
<rect x="631" y="26" width="1" height="4" fill="#ffffff"/>
<rect x="642" y="26" width="1" height="4" fill="#ffffff"/>
<rect x="654" y="22" width="1" height="8" fill="#ffffff"/>
<rect x="666" y="26" width="1" height="4" fill="#ffffff"/>
<rect x="678" y="26" width="1" height="4" fill="#ffffff"/>
<rect x="689" y="26" width="1" height="4" fill="#ffffff"/>
<rect x="701" y="26" width="1" height="4" fill="#ffffff"/>
<rect x="725" y="26" width="1" height="4" fill="#ffffff"/>
<rect x="736" y="26" width="1" height="4" fill="#ffffff"/>
<rect x="748" y="26" width="1" height="4" fill="#ffffff"/>
<rect x="760" y="26" width="1" height="4" fill="#ffffff"/>
<rect x="772" y="22" width="1" height="8" fill="#ffffff"/>
<rect x="784" y="26" width="1" height="4" fill="#ffffff"/>
<rect x="795" y="26" width="1" height="4" fill="#ffffff"/>
<rect x="807" y="26" width="1" height="4" fill="#ffffff"/>
<rect x="819" y="26" width="1" height="4" fill="#ffffff"/>
<rect x="842" y="26" width="1" height="4" fill="#ffffff"/>
<rect x="854" y="26" width="1" height="4" fill="#ffffff"/>
<rect x="866" y="26" width="1" height="4" fill="#ffffff"/>
<rect x="878" y="26" width="1" height="4" fill="#ffffff"/>
<rect x="890" y="22" width="1" height="8" fill="#ffffff"/>
<rect x="901" y="26" width="1" height="4" fill="#ffffff"/>
<rect x="913" y="26" width="1" height="4" fill="#ffffff"/>
<rect x="925" y="26" width="1" height="4" fill="#ffffff"/>
<rect x="937" y="26" width="1" height="4" fill="#ffffff"/>
<rect x="960" y="26" width="1" height="4" fill="#ffffff"/>
<rect x="972" y="26" width="1" height="4" fill="#ffffff"/>
<rect x="984" y="26" width="1" height="4" fill="#ffffff"/>
<rect x="995" y="26" width="1" height="4" fill="#ffffff"/>
<rect x="1007" y="22" width="1" height="8" fill="#ffffff"/>
<rect x="1019" y="26" width="1" height="4" fill="#ffffff"/>
<rect x="1031" y="26" width="1" height="4" fill="#ffffff"/>
<rect x="1043" y="26" width="1" height="4" fill="#ffffff"/>
<rect x="1054" y="26" width="1" height="4" fill="#ffffff"/>
<rect x="480" y="35" width="4" height="15" fill="#004400"/>
<rect x="486" y="35" width="4" height="15" fill="#004400"/>
<rect x="492" y="35" width="4" height="15" fill="#004400"/>
<rect x="498" y="35" width="4" height="15" fill="#004400"/>
<rect x="504" y="35" width="4" height="15" fill="#004400"/>
<rect x="510" y="35" width="4" height="15" fill="#004400"/>
<rect x="516" y="35" width="4" height="15" fill="#004400"/>
<rect x="522" y="35" width="4" height="15" fill="#004400"/>
<rect x="528" y="35" width="3" height="15" fill="#004400"/>
<rect x="533" y="35" width="4" height="15" fill="#004400"/>
<rect x="539" y="35" width="4" height="15" fill="#004400"/>
<rect x="545" y="35" width="4" height="15" fill="#004400"/>
<rect x="551" y="35" width="4" height="15" fill="#004400"/>
<rect x="557" y="35" width="4" height="15" fill="#004400"/>
<rect x="563" y="35" width="4" height="15" fill="#004400"/>
<rect x="569" y="35" width="4" height="15" fill="#004400"/>
<rect x="575" y="35" width="4" height="15" fill="#004400"/>
<rect x="581" y="35" width="3" height="15" fill="#004400"/>
<rect x="586" y="35" width="4" height="15" fill="#004400"/>
<rect x="592" y="35" width="4" height="15" fill="#004400"/>
<rect x="598" y="35" width="4" height="15" fill="#004400"/>
<rect x="604" y="35" width="4" height="15" fill="#004400"/>
<rect x="610" y="35" width="4" height="15" fill="#004400"/>
<rect x="616" y="35" width="4" height="15" fill="#004400"/>
<rect x="622" y="35" width="4" height="15" fill="#004400"/>
<rect x="628" y="35" width="4" height="15" fill="#004400"/>
<rect x="633" y="35" width="4" height="15" fill="#004400"/>
<rect x="639" y="35" width="4" height="15" fill="#004400"/>
<rect x="645" y="35" width="4" height="15" fill="#004400"/>
<rect x="651" y="35" width="4" height="15" fill="#004400"/>
<rect x="657" y="35" width="4" height="15" fill="#004400"/>
<rect x="663" y="35" width="4" height="15" fill="#004400"/>
<rect x="669" y="35" width="4" height="15" fill="#004400"/>
<rect x="675" y="35" width="4" height="15" fill="#004400"/>
<rect x="681" y="35" width="4" height="15" fill="#004400"/>
<rect x="686" y="35" width="4" height="15" fill="#004400"/>
<rect x="692" y="35" width="4" height="15" fill="#004400"/>
<rect x="698" y="35" width="4" height="15" fill="#004400"/>
<rect x="704" y="35" width="4" height="15" fill="#004400"/>
<rect x="710" y="35" width="4" height="15" fill="#004400"/>
<rect x="716" y="35" width="4" height="15" fill="#004400"/>
<rect x="722" y="35" width="4" height="15" fill="#004400"/>
<rect x="728" y="35" width="4" height="15" fill="#004400"/>
<rect x="734" y="35" width="3" height="15" fill="#004400"/>
<rect x="739" y="35" width="4" height="15" fill="#004400"/>
<rect x="745" y="35" width="4" height="15" fill="#004400"/>
<rect x="751" y="35" width="4" height="15" fill="#004400"/>
<rect x="757" y="35" width="4" height="15" fill="#004400"/>
<rect x="763" y="35" width="4" height="15" fill="#004400"/>
<rect x="769" y="35" width="4" height="15" fill="#004400"/>
<rect x="775" y="35" width="4" height="15" fill="#004400"/>
<rect x="781" y="35" width="4" height="15" fill="#004400"/>
<rect x="787" y="35" width="3" height="15" fill="#004400"/>
<rect x="792" y="35" width="4" height="15" fill="#004400"/>
<rect x="798" y="35" width="4" height="15" fill="#004400"/>
<rect x="804" y="35" width="4" height="15" fill="#004400"/>
<rect x="810" y="35" width="4" height="15" fill="#004400"/>
<rect x="816" y="35" width="4" height="15" fill="#004400"/>
<rect x="822" y="35" width="4" height="15" fill="#004400"/>
<rect x="828" y="35" width="4" height="15" fill="#004400"/>
<rect x="834" y="35" width="4" height="15" fill="#004400"/>
<rect x="839" y="35" width="4" height="15" fill="#004400"/>
<rect x="845" y="35" width="4" height="15" fill="#004400"/>
<rect x="851" y="35" width="4" height="15" fill="#004400"/>
<rect x="857" y="35" width="4" height="15" fill="#004400"/>
<rect x="863" y="35" width="4" height="15" fill="#004400"/>
<rect x="869" y="35" width="4" height="15" fill="#004400"/>
<rect x="875" y="35" width="4" height="15" fill="#004400"/>
<rect x="881" y="35" width="4" height="15" fill="#004400"/>
<rect x="887" y="35" width="4" height="15" fill="#004400"/>
<rect x="892" y="35" width="4" height="15" fill="#004400"/>
<rect x="898" y="35" width="4" height="15" fill="#004400"/>
<rect x="904" y="35" width="4" height="15" fill="#004400"/>
<rect x="910" y="35" width="4" height="15" fill="#004400"/>
<rect x="916" y="35" width="4" height="15" fill="#004400"/>
<rect x="922" y="35" width="4" height="15" fill="#004400"/>
<rect x="928" y="35" width="4" height="15" fill="#004400"/>
<rect x="934" y="35" width="4" height="15" fill="#004400"/>
<rect x="940" y="35" width="3" height="15" fill="#004400"/>
<rect x="945" y="35" width="4" height="15" fill="#004400"/>
<rect x="951" y="35" width="4" height="15" fill="#004400"/>
<rect x="957" y="35" width="4" height="15" fill="#004400"/>
<rect x="963" y="35" width="4" height="15" fill="#004400"/>
<rect x="969" y="35" width="4" height="15" fill="#004400"/>
<rect x="975" y="35" width="4" height="15" fill="#004400"/>
<rect x="981" y="35" width="4" height="15" fill="#004400"/>
<rect x="987" y="35" width="4" height="15" fill="#004400"/>
<rect x="993" y="35" width="3" height="15" fill="#004400"/>
<rect x="998" y="35" width="4" height="15" fill="#004400"/>
<rect x="1004" y="35" width="4" height="15" fill="#004400"/>
<rect x="1010" y="35" width="4" height="15" fill="#004400"/>
<rect x="1016" y="35" width="4" height="15" fill="#004400"/>
<rect x="1022" y="35" width="4" height="15" fill="#004400"/>
<rect x="1028" y="35" width="4" height="15" fill="#004400"/>
<rect x="1034" y="35" width="4" height="15" fill="#004400"/>
<rect x="1040" y="35" width="4" height="15" fill="#004400"/>
<rect x="1045" y="35" width="4" height="15" fill="#004400"/>
<rect x="1051" y="35" width="4" height="15" fill="#004400"/>
<rect x="1057" y="35" width="4" height="15" fill="#004400"/>
<rect x="1063" y="35" width="3" height="15" fill="#004400"/>
<rect x="479" y="48" width="2" height="1" fill="#00ff00"/>
<rect x="480" y="34" width="4" height="1" fill="#00ff00"/>
<rect x="480" y="34" width="1" height="15" fill="#00ff00"/>
<rect x="483" y="48" width="4" height="1" fill="#00ff00"/>
<rect x="483" y="34" width="1" height="15" fill="#00ff00"/>
<rect x="486" y="34" width="4" height="1" fill="#00ff00"/>
<rect x="486" y="34" width="1" height="15" fill="#00ff00"/>
<rect x="489" y="48" width="4" height="1" fill="#00ff00"/>
<rect x="489" y="34" width="1" height="15" fill="#00ff00"/>
<rect x="492" y="34" width="4" height="1" fill="#00ff00"/>
<rect x="492" y="34" width="1" height="15" fill="#00ff00"/>
<rect x="495" y="48" width="4" height="1" fill="#00ff00"/>
<rect x="495" y="34" width="1" height="15" fill="#00ff00"/>
<rect x="498" y="34" width="4" height="1" fill="#00ff00"/>
<rect x="498" y="34" width="1" height="15" fill="#00ff00"/>
<rect x="501" y="48" width="4" height="1" fill="#00ff00"/>
<rect x="501" y="34" width="1" height="15" fill="#00ff00"/>
<rect x="504" y="34" width="4" height="1" fill="#00ff00"/>
<rect x="504" y="34" width="1" height="15" fill="#00ff00"/>
<rect x="507" y="48" width="4" height="1" fill="#00ff00"/>
<rect x="507" y="34" width="1" height="15" fill="#00ff00"/>
<rect x="510" y="34" width="4" height="1" fill="#00ff00"/>
<rect x="510" y="34" width="1" height="15" fill="#00ff00"/>
<rect x="513" y="48" width="4" height="1" fill="#00ff00"/>
<rect x="513" y="34" width="1" height="15" fill="#00ff00"/>
<rect x="516" y="34" width="4" height="1" fill="#00ff00"/>
<rect x="516" y="34" width="1" height="15" fill="#00ff00"/>
<rect x="519" y="48" width="4" height="1" fill="#00ff00"/>
<rect x="519" y="34" width="1" height="15" fill="#00ff00"/>
<rect x="522" y="34" width="4" height="1" fill="#00ff00"/>
<rect x="522" y="34" width="1" height="15" fill="#00ff00"/>
<rect x="525" y="48" width="4" height="1" fill="#00ff00"/>
<rect x="525" y="34" width="1" height="15" fill="#00ff00"/>
<rect x="528" y="34" width="3" height="1" fill="#00ff00"/>
<rect x="528" y="34" width="1" height="15" fill="#00ff00"/>
<rect x="530" y="48" width="4" height="1" fill="#00ff00"/>
<rect x="530" y="34" width="1" height="15" fill="#00ff00"/>
<rect x="533" y="34" width="4" height="1" fill="#00ff00"/>
<rect x="533" y="34" width="1" height="15" fill="#00ff00"/>
<rect x="536" y="48" width="4" height="1" fill="#00ff00"/>
<rect x="536" y="34" width="1" height="15" fill="#00ff00"/>
<rect x="539" y="34" width="4" height="1" fill="#00ff00"/>
<rect x="539" y="34" width="1" height="15" fill="#00ff00"/>
<rect x="542" y="48" width="4" height="1" fill="#00ff00"/>
<rect x="542" y="34" width="1" height="15" fill="#00ff00"/>
<rect x="545" y="34" width="4" height="1" fill="#00ff00"/>
<rect x="545" y="34" width="1" height="15" fill="#00ff00"/>
<rect x="548" y="48" width="4" height="1" fill="#00ff00"/>
<rect x="548" y="34" width="1" height="15" fill="#00ff00"/>
<rect x="551" y="34" width="4" height="1" fill="#00ff00"/>
<rect x="551" y="34" width="1" height="15" fill="#00ff00"/>
<rect x="554" y="48" width="4" height="1" fill="#00ff00"/>
<rect x="554" y="34" width="1" height="15" fill="#00ff00"/>
<rect x="557" y="34" width="4" height="1" fill="#00ff00"/>
<rect x="557" y="34" width="1" height="15" fill="#00ff00"/>
<rect x="560" y="48" width="4" height="1" fill="#00ff00"/>
<rect x="560" y="34" width="1" height="15" fill="#00ff00"/>
<rect x="563" y="34" width="4" height="1" fill="#00ff00"/>
<rect x="563" y="34" width="1" height="15" fill="#00ff00"/>
<rect x="566" y="48" width="4" height="1" fill="#00ff00"/>
<rect x="566" y="34" width="1" height="15" fill="#00ff00"/>
<rect x="569" y="34" width="4" height="1" fill="#00ff00"/>
<rect x="569" y="34" width="1" height="15" fill="#00ff00"/>
<rect x="572" y="48" width="4" height="1" fill="#00ff00"/>
<rect x="572" y="34" width="1" height="15" fill="#00ff00"/>
<rect x="575" y="34" width="4" height="1" fill="#00ff00"/>
<rect x="575" y="34" width="1" height="15" fill="#00ff00"/>
<rect x="578" y="48" width="4" height="1" fill="#00ff00"/>
<rect x="578" y="34" width="1" height="15" fill="#00ff00"/>
<rect x="581" y="34" width="3" height="1" fill="#00ff00"/>
<rect x="581" y="34" width="1" height="15" fill="#00ff00"/>
<rect x="583" y="48" width="4" height="1" fill="#00ff00"/>
<rect x="583" y="34" width="1" height="15" fill="#00ff00"/>
<rect x="586" y="34" width="4" height="1" fill="#00ff00"/>
<rect x="586" y="34" width="1" height="15" fill="#00ff00"/>
<rect x="589" y="48" width="4" height="1" fill="#00ff00"/>
<rect x="589" y="34" width="1" height="15" fill="#00ff00"/>
<rect x="592" y="34" width="4" height="1" fill="#00ff00"/>
<rect x="592" y="34" width="1" height="15" fill="#00ff00"/>
<rect x="595" y="48" width="4" height="1" fill="#00ff00"/>
<rect x="595" y="34" width="1" height="15" fill="#00ff00"/>
<rect x="598" y="34" width="4" height="1" fill="#00ff00"/>
<rect x="598" y="34" width="1" height="15" fill="#00ff00"/>
<rect x="601" y="48" width="4" height="1" fill="#00ff00"/>
<rect x="601" y="34" width="1" height="15" fill="#00ff00"/>
<rect x="604" y="34" width="4" height="1" fill="#00ff00"/>
<rect x="604" y="34" width="1" height="15" fill="#00ff00"/>
<rect x="607" y="48" width="4" height="1" fill="#00ff00"/>
<rect x="607" y="34" width="1" height="15" fill="#00ff00"/>
<rect x="610" y="34" width="4" height="1" fill="#00ff00"/>
<rect x="610" y="34" width="1" height="15" fill="#00ff00"/>
<rect x="613" y="48" width="4" height="1" fill="#00ff00"/>
<rect x="613" y="34" width="1" height="15" fill="#00ff00"/>
<rect x="616" y="34" width="4" height="1" fill="#00ff00"/>
<rect x="616" y="34" width="1" height="15" fill="#00ff00"/>
<rect x="619" y="48" width="4" height="1" fill="#00ff00"/>
<rect x="619" y="34" width="1" height="15" fill="#00ff00"/>
<rect x="622" y="34" width="4" height="1" fill="#00ff00"/>
<rect x="622" y="34" width="1" height="15" fill="#00ff00"/>
<rect x="625" y="48" width="4" height="1" fill="#00ff00"/>
<rect x="625" y="34" width="1" height="15" fill="#00ff00"/>
<rect x="628" y="34" width="4" height="1" fill="#00ff00"/>
<rect x="628" y="34" width="1" height="15" fill="#00ff00"/>
<rect x="631" y="48" width="3" height="1" fill="#00ff00"/>
<rect x="631" y="34" width="1" height="15" fill="#00ff00"/>
<rect x="633" y="34" width="4" height="1" fill="#00ff00"/>
<rect x="633" y="34" width="1" height="15" fill="#00ff00"/>
<rect x="636" y="48" width="4" height="1" fill="#00ff00"/>
<rect x="636" y="34" width="1" height="15" fill="#00ff00"/>
<rect x="639" y="34" width="4" height="1" fill="#00ff00"/>
<rect x="639" y="34" width="1" height="15" fill="#00ff00"/>
<rect x="642" y="48" width="4" height="1" fill="#00ff00"/>
<rect x="642" y="34" width="1" height="15" fill="#00ff00"/>
<rect x="645" y="34" width="4" height="1" fill="#00ff00"/>
<rect x="645" y="34" width="1" height="15" fill="#00ff00"/>
<rect x="648" y="48" width="4" height="1" fill="#00ff00"/>
<rect x="648" y="34" width="1" height="15" fill="#00ff00"/>
<rect x="651" y="34" width="4" height="1" fill="#00ff00"/>
<rect x="651" y="34" width="1" height="15" fill="#00ff00"/>
<rect x="654" y="48" width="4" height="1" fill="#00ff00"/>
<rect x="654" y="34" width="1" height="15" fill="#00ff00"/>
<rect x="657" y="34" width="4" height="1" fill="#00ff00"/>
<rect x="657" y="34" width="1" height="15" fill="#00ff00"/>
<rect x="660" y="48" width="4" height="1" fill="#00ff00"/>
<rect x="660" y="34" width="1" height="15" fill="#00ff00"/>
<rect x="663" y="34" width="4" height="1" fill="#00ff00"/>
<rect x="663" y="34" width="1" height="15" fill="#00ff00"/>
<rect x="666" y="48" width="4" height="1" fill="#00ff00"/>
<rect x="666" y="34" width="1" height="15" fill="#00ff00"/>
<rect x="669" y="34" width="4" height="1" fill="#00ff00"/>
<rect x="669" y="34" width="1" height="15" fill="#00ff00"/>
<rect x="672" y="48" width="4" height="1" fill="#00ff00"/>
<rect x="672" y="34" width="1" height="15" fill="#00ff00"/>
<rect x="675" y="34" width="4" height="1" fill="#00ff00"/>
<rect x="675" y="34" width="1" height="15" fill="#00ff00"/>
<rect x="678" y="48" width="4" height="1" fill="#00ff00"/>
<rect x="678" y="34" width="1" height="15" fill="#00ff00"/>
<rect x="681" y="34" width="4" height="1" fill="#00ff00"/>
<rect x="681" y="34" width="1" height="15" fill="#00ff00"/>
<rect x="684" y="48" width="3" height="1" fill="#00ff00"/>
<rect x="684" y="34" width="1" height="15" fill="#00ff00"/>
<rect x="686" y="34" width="4" height="1" fill="#00ff00"/>
<rect x="686" y="34" width="1" height="15" fill="#00ff00"/>
<rect x="689" y="48" width="4" height="1" fill="#00ff00"/>
<rect x="689" y="34" width="1" height="15" fill="#00ff00"/>
<rect x="692" y="34" width="4" height="1" fill="#00ff00"/>
<rect x="692" y="34" width="1" height="15" fill="#00ff00"/>
<rect x="695" y="48" width="4" height="1" fill="#00ff00"/>
<rect x="695" y="34" width="1" height="15" fill="#00ff00"/>
<rect x="698" y="34" width="4" height="1" fill="#00ff00"/>
<rect x="698" y="34" width="1" height="15" fill="#00ff00"/>
<rect x="701" y="48" width="4" height="1" fill="#00ff00"/>
<rect x="701" y="34" width="1" height="15" fill="#00ff00"/>
<rect x="704" y="34" width="4" height="1" fill="#00ff00"/>
<rect x="704" y="34" width="1" height="15" fill="#00ff00"/>
<rect x="707" y="48" width="4" height="1" fill="#00ff00"/>
<rect x="707" y="34" width="1" height="15" fill="#00ff00"/>
<rect x="710" y="34" width="4" height="1" fill="#00ff00"/>
<rect x="710" y="34" width="1" height="15" fill="#00ff00"/>
<rect x="713" y="48" width="4" height="1" fill="#00ff00"/>
<rect x="713" y="34" width="1" height="15" fill="#00ff00"/>
<rect x="716" y="34" width="4" height="1" fill="#00ff00"/>
<rect x="716" y="34" width="1" height="15" fill="#00ff00"/>
<rect x="719" y="48" width="4" height="1" fill="#00ff00"/>
<rect x="719" y="34" width="1" height="15" fill="#00ff00"/>
<rect x="722" y="34" width="4" height="1" fill="#00ff00"/>
<rect x="722" y="34" width="1" height="15" fill="#00ff00"/>
<rect x="725" y="48" width="4" height="1" fill="#00ff00"/>
<rect x="725" y="34" width="1" height="15" fill="#00ff00"/>
<rect x="728" y="34" width="4" height="1" fill="#00ff00"/>
<rect x="728" y="34" width="1" height="15" fill="#00ff00"/>
<rect x="731" y="48" width="4" height="1" fill="#00ff00"/>
<rect x="731" y="34" width="1" height="15" fill="#00ff00"/>
<rect x="734" y="34" width="3" height="1" fill="#00ff00"/>
<rect x="734" y="34" width="1" height="15" fill="#00ff00"/>
<rect x="736" y="48" width="4" height="1" fill="#00ff00"/>
<rect x="736" y="34" width="1" height="15" fill="#00ff00"/>
<rect x="739" y="34" width="4" height="1" fill="#00ff00"/>
<rect x="739" y="34" width="1" height="15" fill="#00ff00"/>
<rect x="742" y="48" width="4" height="1" fill="#00ff00"/>
<rect x="742" y="34" width="1" height="15" fill="#00ff00"/>
<rect x="745" y="34" width="4" height="1" fill="#00ff00"/>
<rect x="745" y="34" width="1" height="15" fill="#00ff00"/>
<rect x="748" y="48" width="4" height="1" fill="#00ff00"/>
<rect x="748" y="34" width="1" height="15" fill="#00ff00"/>
<rect x="751" y="34" width="4" height="1" fill="#00ff00"/>
<rect x="751" y="34" width="1" height="15" fill="#00ff00"/>
<rect x="754" y="48" width="4" height="1" fill="#00ff00"/>
<rect x="754" y="34" width="1" height="15" fill="#00ff00"/>
<rect x="757" y="34" width="4" height="1" fill="#00ff00"/>
<rect x="757" y="34" width="1" height="15" fill="#00ff00"/>
<rect x="760" y="48" width="4" height="1" fill="#00ff00"/>
<rect x="760" y="34" width="1" height="15" fill="#00ff00"/>
<rect x="763" y="34" width="4" height="1" fill="#00ff00"/>
<rect x="763" y="34" width="1" height="15" fill="#00ff00"/>
<rect x="766" y="48" width="4" height="1" fill="#00ff00"/>
<rect x="766" y="34" width="1" height="15" fill="#00ff00"/>
<rect x="769" y="34" width="4" height="1" fill="#00ff00"/>
<rect x="769" y="34" width="1" height="15" fill="#00ff00"/>
<rect x="772" y="48" width="4" height="1" fill="#00ff00"/>
<rect x="772" y="34" width="1" height="15" fill="#00ff00"/>
<rect x="775" y="34" width="4" height="1" fill="#00ff00"/>
<rect x="775" y="34" width="1" height="15" fill="#00ff00"/>
<rect x="778" y="48" width="4" height="1" fill="#00ff00"/>
<rect x="778" y="34" width="1" height="15" fill="#00ff00"/>
<rect x="781" y="34" width="4" height="1" fill="#00ff00"/>
<rect x="781" y="34" width="1" height="15" fill="#00ff00"/>
<rect x="784" y="48" width="4" height="1" fill="#00ff00"/>
<rect x="784" y="34" width="1" height="15" fill="#00ff00"/>
<rect x="787" y="34" width="3" height="1" fill="#00ff00"/>
<rect x="787" y="34" width="1" height="15" fill="#00ff00"/>
<rect x="789" y="48" width="4" height="1" fill="#00ff00"/>
<rect x="789" y="34" width="1" height="15" fill="#00ff00"/>
<rect x="792" y="34" width="4" height="1" fill="#00ff00"/>
<rect x="792" y="34" width="1" height="15" fill="#00ff00"/>
<rect x="795" y="48" width="4" height="1" fill="#00ff00"/>
<rect x="795" y="34" width="1" height="15" fill="#00ff00"/>
<rect x="798" y="34" width="4" height="1" fill="#00ff00"/>
<rect x="798" y="34" width="1" height="15" fill="#00ff00"/>
<rect x="801" y="48" width="4" height="1" fill="#00ff00"/>
<rect x="801" y="34" width="1" height="15" fill="#00ff00"/>
<rect x="804" y="34" width="4" height="1" fill="#00ff00"/>
<rect x="804" y="34" width="1" height="15" fill="#00ff00"/>
<rect x="807" y="48" width="4" height="1" fill="#00ff00"/>
<rect x="807" y="34" width="1" height="15" fill="#00ff00"/>
<rect x="810" y="34" width="4" height="1" fill="#00ff00"/>
<rect x="810" y="34" width="1" height="15" fill="#00ff00"/>
<rect x="813" y="48" width="4" height="1" fill="#00ff00"/>
<rect x="813" y="34" width="1" height="15" fill="#00ff00"/>
<rect x="816" y="34" width="4" height="1" fill="#00ff00"/>
<rect x="816" y="34" width="1" height="15" fill="#00ff00"/>
<rect x="819" y="48" width="4" height="1" fill="#00ff00"/>
<rect x="819" y="34" width="1" height="15" fill="#00ff00"/>
<rect x="822" y="34" width="4" height="1" fill="#00ff00"/>
<rect x="822" y="34" width="1" height="15" fill="#00ff00"/>
<rect x="825" y="48" width="4" height="1" fill="#00ff00"/>
<rect x="825" y="34" width="1" height="15" fill="#00ff00"/>
<rect x="828" y="34" width="4" height="1" fill="#00ff00"/>
<rect x="828" y="34" width="1" height="15" fill="#00ff00"/>
<rect x="831" y="48" width="4" height="1" fill="#00ff00"/>
<rect x="831" y="34" width="1" height="15" fill="#00ff00"/>
<rect x="834" y="34" width="4" height="1" fill="#00ff00"/>
<rect x="834" y="34" width="1" height="15" fill="#00ff00"/>
<rect x="837" y="48" width="3" height="1" fill="#00ff00"/>
<rect x="837" y="34" width="1" height="15" fill="#00ff00"/>
<rect x="839" y="34" width="4" height="1" fill="#00ff00"/>
<rect x="839" y="34" width="1" height="15" fill="#00ff00"/>
<rect x="842" y="48" width="4" height="1" fill="#00ff00"/>
<rect x="842" y="34" width="1" height="15" fill="#00ff00"/>
<rect x="845" y="34" width="4" height="1" fill="#00ff00"/>
<rect x="845" y="34" width="1" height="15" fill="#00ff00"/>
<rect x="848" y="48" width="4" height="1" fill="#00ff00"/>
<rect x="848" y="34" width="1" height="15" fill="#00ff00"/>
<rect x="851" y="34" width="4" height="1" fill="#00ff00"/>
<rect x="851" y="34" width="1" height="15" fill="#00ff00"/>
<rect x="854" y="48" width="4" height="1" fill="#00ff00"/>
<rect x="854" y="34" width="1" height="15" fill="#00ff00"/>
<rect x="857" y="34" width="4" height="1" fill="#00ff00"/>
<rect x="857" y="34" width="1" height="15" fill="#00ff00"/>
<rect x="860" y="48" width="4" height="1" fill="#00ff00"/>
<rect x="860" y="34" width="1" height="15" fill="#00ff00"/>
<rect x="863" y="34" width="4" height="1" fill="#00ff00"/>
<rect x="863" y="34" width="1" height="15" fill="#00ff00"/>
<rect x="866" y="48" width="4" height="1" fill="#00ff00"/>
<rect x="866" y="34" width="1" height="15" fill="#00ff00"/>
<rect x="869" y="34" width="4" height="1" fill="#00ff00"/>
<rect x="869" y="34" width="1" height="15" fill="#00ff00"/>
<rect x="872" y="48" width="4" height="1" fill="#00ff00"/>
<rect x="872" y="34" width="1" height="15" fill="#00ff00"/>
<rect x="875" y="34" width="4" height="1" fill="#00ff00"/>
<rect x="875" y="34" width="1" height="15" fill="#00ff00"/>
<rect x="878" y="48" width="4" height="1" fill="#00ff00"/>
<rect x="878" y="34" width="1" height="15" fill="#00ff00"/>
<rect x="881" y="34" width="4" height="1" fill="#00ff00"/>
<rect x="881" y="34" width="1" height="15" fill="#00ff00"/>
<rect x="884" y="48" width="4" height="1" fill="#00ff00"/>
<rect x="884" y="34" width="1" height="15" fill="#00ff00"/>
<rect x="887" y="34" width="4" height="1" fill="#00ff00"/>
<rect x="887" y="34" width="1" height="15" fill="#00ff00"/>
<rect x="890" y="48" width="3" height="1" fill="#00ff00"/>
<rect x="890" y="34" width="1" height="15" fill="#00ff00"/>
<rect x="892" y="34" width="4" height="1" fill="#00ff00"/>
<rect x="892" y="34" width="1" height="15" fill="#00ff00"/>
<rect x="895" y="48" width="4" height="1" fill="#00ff00"/>
<rect x="895" y="34" width="1" height="15" fill="#00ff00"/>
<rect x="898" y="34" width="4" height="1" fill="#00ff00"/>
<rect x="898" y="34" width="1" height="15" fill="#00ff00"/>
<rect x="901" y="48" width="4" height="1" fill="#00ff00"/>
<rect x="901" y="34" width="1" height="15" fill="#00ff00"/>
<rect x="904" y="34" width="4" height="1" fill="#00ff00"/>
<rect x="904" y="34" width="1" height="15" fill="#00ff00"/>
<rect x="907" y="48" width="4" height="1" fill="#00ff00"/>
<rect x="907" y="34" width="1" height="15" fill="#00ff00"/>
<rect x="910" y="34" width="4" height="1" fill="#00ff00"/>
<rect x="910" y="34" width="1" height="15" fill="#00ff00"/>
<rect x="913" y="48" width="4" height="1" fill="#00ff00"/>
<rect x="913" y="34" width="1" height="15" fill="#00ff00"/>
<rect x="916" y="34" width="4" height="1" fill="#00ff00"/>
<rect x="916" y="34" width="1" height="15" fill="#00ff00"/>
<rect x="919" y="48" width="4" height="1" fill="#00ff00"/>
<rect x="919" y="34" width="1" height="15" fill="#00ff00"/>
<rect x="922" y="34" width="4" height="1" fill="#00ff00"/>
<rect x="922" y="34" width="1" height="15" fill="#00ff00"/>
<rect x="925" y="48" width="4" height="1" fill="#00ff00"/>
<rect x="925" y="34" width="1" height="15" fill="#00ff00"/>
<rect x="928" y="34" width="4" height="1" fill="#00ff00"/>
<rect x="928" y="34" width="1" height="15" fill="#00ff00"/>
<rect x="931" y="48" width="4" height="1" fill="#00ff00"/>
<rect x="931" y="34" width="1" height="15" fill="#00ff00"/>
<rect x="934" y="34" width="4" height="1" fill="#00ff00"/>
<rect x="934" y="34" width="1" height="15" fill="#00ff00"/>
<rect x="937" y="48" width="4" height="1" fill="#00ff00"/>
<rect x="937" y="34" width="1" height="15" fill="#00ff00"/>
<rect x="940" y="34" width="3" height="1" fill="#00ff00"/>
<rect x="940" y="34" width="1" height="15" fill="#00ff00"/>
<rect x="942" y="48" width="4" height="1" fill="#00ff00"/>
<rect x="942" y="34" width="1" height="15" fill="#00ff00"/>
<rect x="945" y="34" width="4" height="1" fill="#00ff00"/>
<rect x="945" y="34" width="1" height="15" fill="#00ff00"/>
<rect x="948" y="48" width="4" height="1" fill="#00ff00"/>
<rect x="948" y="34" width="1" height="15" fill="#00ff00"/>
<rect x="951" y="34" width="4" height="1" fill="#00ff00"/>
<rect x="951" y="34" width="1" height="15" fill="#00ff00"/>
<rect x="954" y="48" width="4" height="1" fill="#00ff00"/>
<rect x="954" y="34" width="1" height="15" fill="#00ff00"/>
<rect x="957" y="34" width="4" height="1" fill="#00ff00"/>
<rect x="957" y="34" width="1" height="15" fill="#00ff00"/>
<rect x="960" y="48" width="4" height="1" fill="#00ff00"/>
<rect x="960" y="34" width="1" height="15" fill="#00ff00"/>
<rect x="963" y="34" width="4" height="1" fill="#00ff00"/>
<rect x="963" y="34" width="1" height="15" fill="#00ff00"/>
<rect x="966" y="48" width="4" height="1" fill="#00ff00"/>
<rect x="966" y="34" width="1" height="15" fill="#00ff00"/>
<rect x="969" y="34" width="4" height="1" fill="#00ff00"/>
<rect x="969" y="34" width="1" height="15" fill="#00ff00"/>
<rect x="972" y="48" width="4" height="1" fill="#00ff00"/>
<rect x="972" y="34" width="1" height="15" fill="#00ff00"/>
<rect x="975" y="34" width="4" height="1" fill="#00ff00"/>
<rect x="975" y="34" width="1" height="15" fill="#00ff00"/>
<rect x="978" y="48" width="4" height="1" fill="#00ff00"/>
<rect x="978" y="34" width="1" height="15" fill="#00ff00"/>
<rect x="981" y="34" width="4" height="1" fill="#00ff00"/>
<rect x="981" y="34" width="1" height="15" fill="#00ff00"/>
<rect x="984" y="48" width="4" height="1" fill="#00ff00"/>
<rect x="984" y="34" width="1" height="15" fill="#00ff00"/>
<rect x="987" y="34" width="4" height="1" fill="#00ff00"/>
<rect x="987" y="34" width="1" height="15" fill="#00ff00"/>
<rect x="990" y="48" width="4" height="1" fill="#00ff00"/>
<rect x="990" y="34" width="1" height="15" fill="#00ff00"/>
<rect x="993" y="34" width="3" height="1" fill="#00ff00"/>
<rect x="993" y="34" width="1" height="15" fill="#00ff00"/>
<rect x="995" y="48" width="4" height="1" fill="#00ff00"/>
<rect x="995" y="34" width="1" height="15" fill="#00ff00"/>
<rect x="998" y="34" width="4" height="1" fill="#00ff00"/>
<rect x="998" y="34" width="1" height="15" fill="#00ff00"/>
<rect x="1001" y="48" width="4" height="1" fill="#00ff00"/>
<rect x="1001" y="34" width="1" height="15" fill="#00ff00"/>
<rect x="1004" y="34" width="4" height="1" fill="#00ff00"/>
<rect x="1004" y="34" width="1" height="15" fill="#00ff00"/>
<rect x="1007" y="48" width="4" height="1" fill="#00ff00"/>
<rect x="1007" y="34" width="1" height="15" fill="#00ff00"/>
<rect x="1010" y="34" width="4" height="1" fill="#00ff00"/>
<rect x="1010" y="34" width="1" height="15" fill="#00ff00"/>
<rect x="1013" y="48" width="4" height="1" fill="#00ff00"/>
<rect x="1013" y="34" width="1" height="15" fill="#00ff00"/>
<rect x="1016" y="34" width="4" height="1" fill="#00ff00"/>
<rect x="1016" y="34" width="1" height="15" fill="#00ff00"/>
<rect x="1019" y="48" width="4" height="1" fill="#00ff00"/>
<rect x="1019" y="34" width="1" height="15" fill="#00ff00"/>
<rect x="1022" y="34" width="4" height="1" fill="#00ff00"/>
<rect x="1022" y="34" width="1" height="15" fill="#00ff00"/>
<rect x="1025" y="48" width="4" height="1" fill="#00ff00"/>
<rect x="1025" y="34" width="1" height="15" fill="#00ff00"/>
<rect x="1028" y="34" width="4" height="1" fill="#00ff00"/>
<rect x="1028" y="34" width="1" height="15" fill="#00ff00"/>
<rect x="1031" y="48" width="4" height="1" fill="#00ff00"/>
<rect x="1031" y="34" width="1" height="15" fill="#00ff00"/>
<rect x="1034" y="34" width="4" height="1" fill="#00ff00"/>
<rect x="1034" y="34" width="1" height="15" fill="#00ff00"/>
<rect x="1037" y="48" width="4" height="1" fill="#00ff00"/>
<rect x="1037" y="34" width="1" height="15" fill="#00ff00"/>
<rect x="1040" y="34" width="4" height="1" fill="#00ff00"/>
<rect x="1040" y="34" width="1" height="15" fill="#00ff00"/>
<rect x="1043" y="48" width="3" height="1" fill="#00ff00"/>
<rect x="1043" y="34" width="1" height="15" fill="#00ff00"/>
<rect x="1045" y="34" width="4" height="1" fill="#00ff00"/>
<rect x="1045" y="34" width="1" height="15" fill="#00ff00"/>
<rect x="1048" y="48" width="4" height="1" fill="#00ff00"/>
<rect x="1048" y="34" width="1" height="15" fill="#00ff00"/>
<rect x="1051" y="34" width="4" height="1" fill="#00ff00"/>
<rect x="1051" y="34" width="1" height="15" fill="#00ff00"/>
<rect x="1054" y="48" width="4" height="1" fill="#00ff00"/>
<rect x="1054" y="34" width="1" height="15" fill="#00ff00"/>
<rect x="1057" y="34" width="4" height="1" fill="#00ff00"/>
<rect x="1057" y="34" width="1" height="15" fill="#00ff00"/>
<rect x="1060" y="48" width="4" height="1" fill="#00ff00"/>
<rect x="1060" y="34" width="1" height="15" fill="#00ff00"/>
<rect x="1063" y="34" width="3" height="1" fill="#00ff00"/>
<rect x="1063" y="34" width="1" height="15" fill="#00ff00"/>
<rect x="479" y="55" width="11" height="15" fill="#004400"/>
<rect x="742" y="55" width="13" height="15" fill="#004400"/>
<rect x="479" y="54" width="11" height="1" fill="#00ff00"/>
<rect x="489" y="68" width="254" height="1" fill="#00ff00"/>
<rect x="489" y="54" width="1" height="15" fill="#00ff00"/>
<rect x="742" y="54" width="13" height="1" fill="#00ff00"/>
<rect x="742" y="54" width="1" height="15" fill="#00ff00"/>
<rect x="754" y="68" width="312" height="1" fill="#00ff00"/>
<rect x="754" y="54" width="1" height="15" fill="#00ff00"/>
<rect x="479" y="75" width="38" height="15" fill="#004400"/>
<rect x="728" y="75" width="54" height="15" fill="#004400"/>
<rect x="987" y="75" width="79" height="15" fill="#004400"/>
<rect x="479" y="74" width="38" height="1" fill="#00ff00"/>
<rect x="516" y="88" width="213" height="1" fill="#00ff00"/>
<rect x="516" y="74" width="1" height="15" fill="#00ff00"/>
<rect x="728" y="74" width="54" height="1" fill="#00ff00"/>
<rect x="728" y="74" width="1" height="15" fill="#00ff00"/>
<rect x="781" y="88" width="207" height="1" fill="#00ff00"/>
<rect x="781" y="74" width="1" height="15" fill="#00ff00"/>
<rect x="987" y="74" width="79" height="1" fill="#00ff00"/>
<rect x="987" y="74" width="1" height="15" fill="#00ff00"/>
<rect x="479" y="102" width="17" height="8" fill="#500000"/>
<rect x="495" y="95" width="7" height="15" fill="#004400"/>
<rect x="772" y="95" width="7" height="15" fill="#004400"/>
<rect x="479" y="101" width="17" height="1" fill="#ff0000"/>
<rect x="495" y="94" width="7" height="1" fill="#00ff00"/>
<rect x="495" y="94" width="1" height="8" fill="#00ff00"/>
<rect x="501" y="108" width="272" height="1" fill="#00ff00"/>
<rect x="501" y="94" width="1" height="15" fill="#00ff00"/>
<rect x="772" y="94" width="7" height="1" fill="#00ff00"/>
<rect x="772" y="94" width="1" height="15" fill="#00ff00"/>
<rect x="778" y="108" width="288" height="1" fill="#00ff00"/>
<rect x="778" y="94" width="1" height="15" fill="#00ff00"/>
<rect x="479" y="122" width="5" height="8" fill="#500000"/>
<rect x="483" y="115" width="7" height="15" fill="#004400"/>
<rect x="513" y="115" width="7" height="15" fill="#004400"/>
<rect x="772" y="115" width="13" height="15" fill="#004400"/>
<rect x="479" y="121" width="5" height="1" fill="#ff0000"/>
<rect x="483" y="114" width="7" height="1" fill="#00ff00"/>
<rect x="483" y="114" width="1" height="8" fill="#00ff00"/>
<rect x="489" y="128" width="25" height="1" fill="#00ff00"/>
<rect x="489" y="114" width="1" height="15" fill="#00ff00"/>
<rect x="513" y="114" width="7" height="1" fill="#00ff00"/>
<rect x="513" y="114" width="1" height="15" fill="#00ff00"/>
<rect x="519" y="128" width="254" height="1" fill="#00ff00"/>
<rect x="519" y="114" width="1" height="15" fill="#00ff00"/>
<rect x="772" y="114" width="13" height="1" fill="#00ff00"/>
<rect x="772" y="114" width="1" height="15" fill="#00ff00"/>
<rect x="784" y="128" width="282" height="1" fill="#00ff00"/>
<rect x="784" y="114" width="1" height="15" fill="#00ff00"/>
<rect x="495" y="135" width="7" height="15" fill="#004400"/>
<rect x="772" y="135" width="7" height="15" fill="#004400"/>
<rect x="479" y="148" width="17" height="1" fill="#00ff00"/>
<rect x="495" y="134" width="7" height="1" fill="#00ff00"/>
<rect x="495" y="134" width="1" height="15" fill="#00ff00"/>
<rect x="501" y="148" width="272" height="1" fill="#00ff00"/>
<rect x="501" y="134" width="1" height="15" fill="#00ff00"/>
<rect x="772" y="134" width="7" height="1" fill="#00ff00"/>
<rect x="772" y="134" width="1" height="15" fill="#00ff00"/>
<rect x="778" y="148" width="288" height="1" fill="#00ff00"/>
<rect x="778" y="134" width="1" height="15" fill="#00ff00"/>
<rect x="722" y="155" width="7" height="15" fill="#004400"/>
<rect x="981" y="155" width="7" height="15" fill="#004400"/>
<rect x="479" y="168" width="244" height="1" fill="#00ff00"/>
<rect x="722" y="154" width="7" height="1" fill="#00ff00"/>
<rect x="722" y="154" width="1" height="15" fill="#00ff00"/>
<rect x="728" y="168" width="254" height="1" fill="#00ff00"/>
<rect x="728" y="154" width="1" height="15" fill="#00ff00"/>
<rect x="981" y="154" width="7" height="1" fill="#00ff00"/>
<rect x="981" y="154" width="1" height="15" fill="#00ff00"/>
<rect x="987" y="168" width="79" height="1" fill="#00ff00"/>
<rect x="987" y="154" width="1" height="15" fill="#00ff00"/>
<rect x="557" y="175" width="7" height="15" fill="#004400"/>
<rect x="598" y="175" width="7" height="15" fill="#004400"/>
<rect x="633" y="175" width="7" height="15" fill="#004400"/>
<rect x="663" y="175" width="7" height="15" fill="#004400"/>
<rect x="686" y="175" width="7" height="15" fill="#004400"/>
<rect x="704" y="175" width="7" height="15" fill="#004400"/>
<rect x="716" y="175" width="7" height="15" fill="#004400"/>
<rect x="816" y="175" width="7" height="15" fill="#004400"/>
<rect x="857" y="175" width="7" height="15" fill="#004400"/>
<rect x="892" y="175" width="7" height="15" fill="#004400"/>
<rect x="922" y="175" width="7" height="15" fill="#004400"/>
<rect x="945" y="175" width="7" height="15" fill="#004400"/>
<rect x="963" y="175" width="7" height="15" fill="#004400"/>
<rect x="975" y="175" width="7" height="15" fill="#004400"/>
<rect x="479" y="188" width="79" height="1" fill="#00ff00"/>
<rect x="557" y="174" width="7" height="1" fill="#00ff00"/>
<rect x="557" y="174" width="1" height="15" fill="#00ff00"/>
<rect x="563" y="188" width="36" height="1" fill="#00ff00"/>
<rect x="563" y="174" width="1" height="15" fill="#00ff00"/>
<rect x="598" y="174" width="7" height="1" fill="#00ff00"/>
<rect x="598" y="174" width="1" height="15" fill="#00ff00"/>
<rect x="604" y="188" width="30" height="1" fill="#00ff00"/>
<rect x="604" y="174" width="1" height="15" fill="#00ff00"/>
<rect x="633" y="174" width="7" height="1" fill="#00ff00"/>
<rect x="633" y="174" width="1" height="15" fill="#00ff00"/>
<rect x="639" y="188" width="25" height="1" fill="#00ff00"/>
<rect x="639" y="174" width="1" height="15" fill="#00ff00"/>
<rect x="663" y="174" width="7" height="1" fill="#00ff00"/>
<rect x="663" y="174" width="1" height="15" fill="#00ff00"/>
<rect x="669" y="188" width="18" height="1" fill="#00ff00"/>
<rect x="669" y="174" width="1" height="15" fill="#00ff00"/>
<rect x="686" y="174" width="7" height="1" fill="#00ff00"/>
<rect x="686" y="174" width="1" height="15" fill="#00ff00"/>
<rect x="692" y="188" width="13" height="1" fill="#00ff00"/>
<rect x="692" y="174" width="1" height="15" fill="#00ff00"/>
<rect x="704" y="174" width="7" height="1" fill="#00ff00"/>
<rect x="704" y="174" width="1" height="15" fill="#00ff00"/>
<rect x="710" y="188" width="7" height="1" fill="#00ff00"/>
<rect x="710" y="174" width="1" height="15" fill="#00ff00"/>
<rect x="716" y="174" width="7" height="1" fill="#00ff00"/>
<rect x="716" y="174" width="1" height="15" fill="#00ff00"/>
<rect x="722" y="188" width="95" height="1" fill="#00ff00"/>
<rect x="722" y="174" width="1" height="15" fill="#00ff00"/>
<rect x="816" y="174" width="7" height="1" fill="#00ff00"/>
<rect x="816" y="174" width="1" height="15" fill="#00ff00"/>
<rect x="822" y="188" width="36" height="1" fill="#00ff00"/>
<rect x="822" y="174" width="1" height="15" fill="#00ff00"/>
<rect x="857" y="174" width="7" height="1" fill="#00ff00"/>
<rect x="857" y="174" width="1" height="15" fill="#00ff00"/>
<rect x="863" y="188" width="30" height="1" fill="#00ff00"/>
<rect x="863" y="174" width="1" height="15" fill="#00ff00"/>
<rect x="892" y="174" width="7" height="1" fill="#00ff00"/>
<rect x="892" y="174" width="1" height="15" fill="#00ff00"/>
<rect x="898" y="188" width="25" height="1" fill="#00ff00"/>
<rect x="898" y="174" width="1" height="15" fill="#00ff00"/>
<rect x="922" y="174" width="7" height="1" fill="#00ff00"/>
<rect x="922" y="174" width="1" height="15" fill="#00ff00"/>
<rect x="928" y="188" width="18" height="1" fill="#00ff00"/>
<rect x="928" y="174" width="1" height="15" fill="#00ff00"/>
<rect x="945" y="174" width="7" height="1" fill="#00ff00"/>
<rect x="945" y="174" width="1" height="15" fill="#00ff00"/>
<rect x="951" y="188" width="13" height="1" fill="#00ff00"/>
<rect x="951" y="174" width="1" height="15" fill="#00ff00"/>
<rect x="963" y="174" width="7" height="1" fill="#00ff00"/>
<rect x="963" y="174" width="1" height="15" fill="#00ff00"/>
<rect x="969" y="188" width="7" height="1" fill="#00ff00"/>
<rect x="969" y="174" width="1" height="15" fill="#00ff00"/>
<rect x="975" y="174" width="7" height="1" fill="#00ff00"/>
<rect x="975" y="174" width="1" height="15" fill="#00ff00"/>
<rect x="981" y="188" width="85" height="1" fill="#00ff00"/>
<rect x="981" y="174" width="1" height="15" fill="#00ff00"/>
<rect x="557" y="195" width="7" height="15" fill="#004400"/>
<rect x="598" y="195" width="7" height="15" fill="#004400"/>
<rect x="633" y="195" width="7" height="15" fill="#004400"/>
<rect x="663" y="195" width="7" height="15" fill="#004400"/>
<rect x="686" y="195" width="7" height="15" fill="#004400"/>
<rect x="704" y="195" width="7" height="15" fill="#004400"/>
<rect x="716" y="195" width="13" height="15" fill="#004400"/>
<rect x="816" y="195" width="7" height="15" fill="#004400"/>
<rect x="857" y="195" width="7" height="15" fill="#004400"/>
<rect x="892" y="195" width="7" height="15" fill="#004400"/>
<rect x="922" y="195" width="7" height="15" fill="#004400"/>
<rect x="945" y="195" width="7" height="15" fill="#004400"/>
<rect x="963" y="195" width="7" height="15" fill="#004400"/>
<rect x="975" y="195" width="13" height="15" fill="#004400"/>
<rect x="479" y="208" width="79" height="1" fill="#00ff00"/>
<rect x="557" y="194" width="7" height="1" fill="#00ff00"/>
<rect x="557" y="194" width="1" height="15" fill="#00ff00"/>
<rect x="563" y="208" width="36" height="1" fill="#00ff00"/>
<rect x="563" y="194" width="1" height="15" fill="#00ff00"/>
<rect x="598" y="194" width="7" height="1" fill="#00ff00"/>
<rect x="598" y="194" width="1" height="15" fill="#00ff00"/>
<rect x="604" y="208" width="30" height="1" fill="#00ff00"/>
<rect x="604" y="194" width="1" height="15" fill="#00ff00"/>
<rect x="633" y="194" width="7" height="1" fill="#00ff00"/>
<rect x="633" y="194" width="1" height="15" fill="#00ff00"/>
<rect x="639" y="208" width="25" height="1" fill="#00ff00"/>
<rect x="639" y="194" width="1" height="15" fill="#00ff00"/>
<rect x="663" y="194" width="7" height="1" fill="#00ff00"/>
<rect x="663" y="194" width="1" height="15" fill="#00ff00"/>
<rect x="669" y="208" width="18" height="1" fill="#00ff00"/>
<rect x="669" y="194" width="1" height="15" fill="#00ff00"/>
<rect x="686" y="194" width="7" height="1" fill="#00ff00"/>
<rect x="686" y="194" width="1" height="15" fill="#00ff00"/>
<rect x="692" y="208" width="13" height="1" fill="#00ff00"/>
<rect x="692" y="194" width="1" height="15" fill="#00ff00"/>
<rect x="704" y="194" width="7" height="1" fill="#00ff00"/>
<rect x="704" y="194" width="1" height="15" fill="#00ff00"/>
<rect x="710" y="208" width="7" height="1" fill="#00ff00"/>
<rect x="710" y="194" width="1" height="15" fill="#00ff00"/>
<rect x="716" y="194" width="13" height="1" fill="#00ff00"/>
<rect x="716" y="194" width="1" height="15" fill="#00ff00"/>
<rect x="728" y="208" width="89" height="1" fill="#00ff00"/>
<rect x="728" y="194" width="1" height="15" fill="#00ff00"/>
<rect x="816" y="194" width="7" height="1" fill="#00ff00"/>
<rect x="816" y="194" width="1" height="15" fill="#00ff00"/>
<rect x="822" y="208" width="36" height="1" fill="#00ff00"/>
<rect x="822" y="194" width="1" height="15" fill="#00ff00"/>
<rect x="857" y="194" width="7" height="1" fill="#00ff00"/>
<rect x="857" y="194" width="1" height="15" fill="#00ff00"/>
<rect x="863" y="208" width="30" height="1" fill="#00ff00"/>
<rect x="863" y="194" width="1" height="15" fill="#00ff00"/>
<rect x="892" y="194" width="7" height="1" fill="#00ff00"/>
<rect x="892" y="194" width="1" height="15" fill="#00ff00"/>
<rect x="898" y="208" width="25" height="1" fill="#00ff00"/>
<rect x="898" y="194" width="1" height="15" fill="#00ff00"/>
<rect x="922" y="194" width="7" height="1" fill="#00ff00"/>
<rect x="922" y="194" width="1" height="15" fill="#00ff00"/>
<rect x="928" y="208" width="18" height="1" fill="#00ff00"/>
<rect x="928" y="194" width="1" height="15" fill="#00ff00"/>
<rect x="945" y="194" width="7" height="1" fill="#00ff00"/>
<rect x="945" y="194" width="1" height="15" fill="#00ff00"/>
<rect x="951" y="208" width="13" height="1" fill="#00ff00"/>
<rect x="951" y="194" width="1" height="15" fill="#00ff00"/>
<rect x="963" y="194" width="7" height="1" fill="#00ff00"/>
<rect x="963" y="194" width="1" height="15" fill="#00ff00"/>
<rect x="969" y="208" width="7" height="1" fill="#00ff00"/>
<rect x="969" y="194" width="1" height="15" fill="#00ff00"/>
<rect x="975" y="194" width="13" height="1" fill="#00ff00"/>
<rect x="975" y="194" width="1" height="15" fill="#00ff00"/>
<rect x="987" y="208" width="79" height="1" fill="#00ff00"/>
<rect x="987" y="194" width="1" height="15" fill="#00ff00"/>
<rect x="516" y="215" width="42" height="15" fill="#004400"/>
<rect x="563" y="215" width="36" height="15" fill="#004400"/>
<rect x="604" y="215" width="30" height="15" fill="#004400"/>
<rect x="639" y="215" width="25" height="15" fill="#004400"/>
<rect x="669" y="215" width="18" height="15" fill="#004400"/>
<rect x="692" y="215" width="13" height="15" fill="#004400"/>
<rect x="710" y="215" width="7" height="15" fill="#004400"/>
<rect x="778" y="215" width="39" height="15" fill="#004400"/>
<rect x="822" y="215" width="36" height="15" fill="#004400"/>
<rect x="863" y="215" width="30" height="15" fill="#004400"/>
<rect x="898" y="215" width="25" height="15" fill="#004400"/>
<rect x="928" y="215" width="18" height="15" fill="#004400"/>
<rect x="951" y="215" width="13" height="15" fill="#004400"/>
<rect x="969" y="215" width="7" height="15" fill="#004400"/>
<rect x="479" y="228" width="38" height="1" fill="#00ff00"/>
<rect x="516" y="214" width="42" height="1" fill="#00ff00"/>
<rect x="516" y="214" width="1" height="15" fill="#00ff00"/>
<rect x="557" y="228" width="7" height="1" fill="#00ff00"/>
<rect x="557" y="214" width="1" height="15" fill="#00ff00"/>
<rect x="563" y="214" width="36" height="1" fill="#00ff00"/>
<rect x="563" y="214" width="1" height="15" fill="#00ff00"/>
<rect x="598" y="228" width="7" height="1" fill="#00ff00"/>
<rect x="598" y="214" width="1" height="15" fill="#00ff00"/>
<rect x="604" y="214" width="30" height="1" fill="#00ff00"/>
<rect x="604" y="214" width="1" height="15" fill="#00ff00"/>
<rect x="633" y="228" width="7" height="1" fill="#00ff00"/>
<rect x="633" y="214" width="1" height="15" fill="#00ff00"/>
<rect x="639" y="214" width="25" height="1" fill="#00ff00"/>
<rect x="639" y="214" width="1" height="15" fill="#00ff00"/>
<rect x="663" y="228" width="7" height="1" fill="#00ff00"/>
<rect x="663" y="214" width="1" height="15" fill="#00ff00"/>
<rect x="669" y="214" width="18" height="1" fill="#00ff00"/>
<rect x="669" y="214" width="1" height="15" fill="#00ff00"/>
<rect x="686" y="228" width="7" height="1" fill="#00ff00"/>
<rect x="686" y="214" width="1" height="15" fill="#00ff00"/>
<rect x="692" y="214" width="13" height="1" fill="#00ff00"/>
<rect x="692" y="214" width="1" height="15" fill="#00ff00"/>
<rect x="704" y="228" width="7" height="1" fill="#00ff00"/>
<rect x="704" y="214" width="1" height="15" fill="#00ff00"/>
<rect x="710" y="214" width="7" height="1" fill="#00ff00"/>
<rect x="710" y="214" width="1" height="15" fill="#00ff00"/>
<rect x="716" y="228" width="63" height="1" fill="#00ff00"/>
<rect x="716" y="214" width="1" height="15" fill="#00ff00"/>
<rect x="778" y="214" width="39" height="1" fill="#00ff00"/>
<rect x="778" y="214" width="1" height="15" fill="#00ff00"/>
<rect x="816" y="228" width="7" height="1" fill="#00ff00"/>
<rect x="816" y="214" width="1" height="15" fill="#00ff00"/>
<rect x="822" y="214" width="36" height="1" fill="#00ff00"/>
<rect x="822" y="214" width="1" height="15" fill="#00ff00"/>
<rect x="857" y="228" width="7" height="1" fill="#00ff00"/>
<rect x="857" y="214" width="1" height="15" fill="#00ff00"/>
<rect x="863" y="214" width="30" height="1" fill="#00ff00"/>
<rect x="863" y="214" width="1" height="15" fill="#00ff00"/>
<rect x="892" y="228" width="7" height="1" fill="#00ff00"/>
<rect x="892" y="214" width="1" height="15" fill="#00ff00"/>
<rect x="898" y="214" width="25" height="1" fill="#00ff00"/>
<rect x="898" y="214" width="1" height="15" fill="#00ff00"/>
<rect x="922" y="228" width="7" height="1" fill="#00ff00"/>
<rect x="922" y="214" width="1" height="15" fill="#00ff00"/>
<rect x="928" y="214" width="18" height="1" fill="#00ff00"/>
<rect x="928" y="214" width="1" height="15" fill="#00ff00"/>
<rect x="945" y="228" width="7" height="1" fill="#00ff00"/>
<rect x="945" y="214" width="1" height="15" fill="#00ff00"/>
<rect x="951" y="214" width="13" height="1" fill="#00ff00"/>
<rect x="951" y="214" width="1" height="15" fill="#00ff00"/>
<rect x="963" y="228" width="7" height="1" fill="#00ff00"/>
<rect x="963" y="214" width="1" height="15" fill="#00ff00"/>
<rect x="969" y="214" width="7" height="1" fill="#00ff00"/>
<rect x="969" y="214" width="1" height="15" fill="#00ff00"/>
<rect x="975" y="228" width="91" height="1" fill="#00ff00"/>
<rect x="975" y="214" width="1" height="15" fill="#00ff00"/>
<rect x="528" y="235" width="30" height="15" fill="#004400"/>
<rect x="569" y="235" width="18" height="15" fill="#004400"/>
<rect x="592" y="235" width="7" height="15" fill="#004400"/>
<rect x="604" y="235" width="7" height="15" fill="#004400"/>
<rect x="616" y="235" width="7" height="15" fill="#004400"/>
<rect x="628" y="235" width="6" height="15" fill="#004400"/>
<rect x="645" y="235" width="7" height="15" fill="#004400"/>
<rect x="657" y="235" width="7" height="15" fill="#004400"/>
<rect x="669" y="235" width="7" height="15" fill="#004400"/>
<rect x="681" y="235" width="6" height="15" fill="#004400"/>
<rect x="698" y="235" width="7" height="15" fill="#004400"/>
<rect x="710" y="235" width="7" height="15" fill="#004400"/>
<rect x="778" y="235" width="39" height="15" fill="#004400"/>
<rect x="822" y="235" width="36" height="15" fill="#004400"/>
<rect x="863" y="235" width="30" height="15" fill="#004400"/>
<rect x="898" y="235" width="7" height="15" fill="#004400"/>
<rect x="916" y="235" width="7" height="15" fill="#004400"/>
<rect x="940" y="235" width="6" height="15" fill="#004400"/>
<rect x="957" y="235" width="7" height="15" fill="#004400"/>
<rect x="969" y="235" width="7" height="15" fill="#004400"/>
<rect x="479" y="248" width="50" height="1" fill="#00ff00"/>
<rect x="528" y="234" width="30" height="1" fill="#00ff00"/>
<rect x="528" y="234" width="1" height="15" fill="#00ff00"/>
<rect x="557" y="248" width="13" height="1" fill="#00ff00"/>
<rect x="557" y="234" width="1" height="15" fill="#00ff00"/>
<rect x="569" y="234" width="18" height="1" fill="#00ff00"/>
<rect x="569" y="234" width="1" height="15" fill="#00ff00"/>
<rect x="586" y="248" width="7" height="1" fill="#00ff00"/>
<rect x="586" y="234" width="1" height="15" fill="#00ff00"/>
<rect x="592" y="234" width="7" height="1" fill="#00ff00"/>
<rect x="592" y="234" width="1" height="15" fill="#00ff00"/>
<rect x="598" y="248" width="7" height="1" fill="#00ff00"/>
<rect x="598" y="234" width="1" height="15" fill="#00ff00"/>
<rect x="604" y="234" width="7" height="1" fill="#00ff00"/>
<rect x="604" y="234" width="1" height="15" fill="#00ff00"/>
<rect x="610" y="248" width="7" height="1" fill="#00ff00"/>
<rect x="610" y="234" width="1" height="15" fill="#00ff00"/>
<rect x="616" y="234" width="7" height="1" fill="#00ff00"/>
<rect x="616" y="234" width="1" height="15" fill="#00ff00"/>
<rect x="622" y="248" width="7" height="1" fill="#00ff00"/>
<rect x="622" y="234" width="1" height="15" fill="#00ff00"/>
<rect x="628" y="234" width="6" height="1" fill="#00ff00"/>
<rect x="628" y="234" width="1" height="15" fill="#00ff00"/>
<rect x="633" y="248" width="13" height="1" fill="#00ff00"/>
<rect x="633" y="234" width="1" height="15" fill="#00ff00"/>
<rect x="645" y="234" width="7" height="1" fill="#00ff00"/>
<rect x="645" y="234" width="1" height="15" fill="#00ff00"/>
<rect x="651" y="248" width="7" height="1" fill="#00ff00"/>
<rect x="651" y="234" width="1" height="15" fill="#00ff00"/>
<rect x="657" y="234" width="7" height="1" fill="#00ff00"/>
<rect x="657" y="234" width="1" height="15" fill="#00ff00"/>
<rect x="663" y="248" width="7" height="1" fill="#00ff00"/>
<rect x="663" y="234" width="1" height="15" fill="#00ff00"/>
<rect x="669" y="234" width="7" height="1" fill="#00ff00"/>
<rect x="669" y="234" width="1" height="15" fill="#00ff00"/>
<rect x="675" y="248" width="7" height="1" fill="#00ff00"/>
<rect x="675" y="234" width="1" height="15" fill="#00ff00"/>
<rect x="681" y="234" width="6" height="1" fill="#00ff00"/>
<rect x="681" y="234" width="1" height="15" fill="#00ff00"/>
<rect x="686" y="248" width="13" height="1" fill="#00ff00"/>
<rect x="686" y="234" width="1" height="15" fill="#00ff00"/>
<rect x="698" y="234" width="7" height="1" fill="#00ff00"/>
<rect x="698" y="234" width="1" height="15" fill="#00ff00"/>
<rect x="704" y="248" width="7" height="1" fill="#00ff00"/>
<rect x="704" y="234" width="1" height="15" fill="#00ff00"/>
<rect x="710" y="234" width="7" height="1" fill="#00ff00"/>
<rect x="710" y="234" width="1" height="15" fill="#00ff00"/>
<rect x="716" y="248" width="63" height="1" fill="#00ff00"/>
<rect x="716" y="234" width="1" height="15" fill="#00ff00"/>
<rect x="778" y="234" width="39" height="1" fill="#00ff00"/>
<rect x="778" y="234" width="1" height="15" fill="#00ff00"/>
<rect x="816" y="248" width="7" height="1" fill="#00ff00"/>
<rect x="816" y="234" width="1" height="15" fill="#00ff00"/>
<rect x="822" y="234" width="36" height="1" fill="#00ff00"/>
<rect x="822" y="234" width="1" height="15" fill="#00ff00"/>
<rect x="857" y="248" width="7" height="1" fill="#00ff00"/>
<rect x="857" y="234" width="1" height="15" fill="#00ff00"/>
<rect x="863" y="234" width="30" height="1" fill="#00ff00"/>
<rect x="863" y="234" width="1" height="15" fill="#00ff00"/>
<rect x="892" y="248" width="7" height="1" fill="#00ff00"/>
<rect x="892" y="234" width="1" height="15" fill="#00ff00"/>
<rect x="898" y="234" width="7" height="1" fill="#00ff00"/>
<rect x="898" y="234" width="1" height="15" fill="#00ff00"/>
<rect x="904" y="248" width="13" height="1" fill="#00ff00"/>
<rect x="904" y="234" width="1" height="15" fill="#00ff00"/>
<rect x="916" y="234" width="7" height="1" fill="#00ff00"/>
<rect x="916" y="234" width="1" height="15" fill="#00ff00"/>
<rect x="922" y="248" width="19" height="1" fill="#00ff00"/>
<rect x="922" y="234" width="1" height="15" fill="#00ff00"/>
<rect x="940" y="234" width="6" height="1" fill="#00ff00"/>
<rect x="940" y="234" width="1" height="15" fill="#00ff00"/>
<rect x="945" y="248" width="13" height="1" fill="#00ff00"/>
<rect x="945" y="234" width="1" height="15" fill="#00ff00"/>
<rect x="957" y="234" width="7" height="1" fill="#00ff00"/>
<rect x="957" y="234" width="1" height="15" fill="#00ff00"/>
<rect x="963" y="248" width="7" height="1" fill="#00ff00"/>
<rect x="963" y="234" width="1" height="15" fill="#00ff00"/>
<rect x="969" y="234" width="7" height="1" fill="#00ff00"/>
<rect x="969" y="234" width="1" height="15" fill="#00ff00"/>
<rect x="975" y="248" width="91" height="1" fill="#00ff00"/>
<rect x="975" y="234" width="1" height="15" fill="#00ff00"/>
<rect x="479" y="262" width="20" height="8" fill="#500000"/>
<rect x="528" y="255" width="30" height="15" fill="#004400"/>
<rect x="557" y="262" width="7" height="8" fill="#500000"/>
<rect x="569" y="255" width="18" height="15" fill="#004400"/>
<rect x="592" y="255" width="7" height="15" fill="#004400"/>
<rect x="604" y="255" width="7" height="15" fill="#004400"/>
<rect x="616" y="255" width="7" height="15" fill="#004400"/>
<rect x="628" y="255" width="6" height="15" fill="#004400"/>
<rect x="645" y="255" width="7" height="15" fill="#004400"/>
<rect x="657" y="255" width="7" height="15" fill="#004400"/>
<rect x="669" y="255" width="7" height="15" fill="#004400"/>
<rect x="681" y="255" width="6" height="15" fill="#004400"/>
<rect x="698" y="255" width="7" height="15" fill="#004400"/>
<rect x="710" y="255" width="7" height="15" fill="#004400"/>
<rect x="745" y="262" width="31" height="8" fill="#500000"/>
<rect x="775" y="255" width="42" height="15" fill="#004400"/>
<rect x="816" y="262" width="7" height="8" fill="#500000"/>
<rect x="822" y="255" width="36" height="15" fill="#004400"/>
<rect x="863" y="255" width="30" height="15" fill="#004400"/>
<rect x="898" y="255" width="7" height="15" fill="#004400"/>
<rect x="916" y="255" width="7" height="15" fill="#004400"/>
<rect x="940" y="255" width="6" height="15" fill="#004400"/>
<rect x="957" y="255" width="7" height="15" fill="#004400"/>
<rect x="969" y="255" width="7" height="15" fill="#004400"/>
<rect x="479" y="261" width="20" height="1" fill="#ff0000"/>
<rect x="498" y="268" width="31" height="1" fill="#00ff00"/>
<rect x="498" y="261" width="1" height="8" fill="#00ff00"/>
<rect x="528" y="254" width="30" height="1" fill="#00ff00"/>
<rect x="528" y="254" width="1" height="15" fill="#00ff00"/>
<rect x="557" y="261" width="7" height="1" fill="#ff0000"/>
<rect x="557" y="254" width="1" height="8" fill="#ff0000"/>
<rect x="563" y="268" width="7" height="1" fill="#00ff00"/>
<rect x="563" y="261" width="1" height="8" fill="#00ff00"/>
<rect x="569" y="254" width="18" height="1" fill="#00ff00"/>
<rect x="569" y="254" width="1" height="15" fill="#00ff00"/>
<rect x="586" y="268" width="7" height="1" fill="#00ff00"/>
<rect x="586" y="254" width="1" height="15" fill="#00ff00"/>
<rect x="592" y="254" width="7" height="1" fill="#00ff00"/>
<rect x="592" y="254" width="1" height="15" fill="#00ff00"/>
<rect x="598" y="268" width="7" height="1" fill="#00ff00"/>
<rect x="598" y="254" width="1" height="15" fill="#00ff00"/>
<rect x="604" y="254" width="7" height="1" fill="#00ff00"/>
<rect x="604" y="254" width="1" height="15" fill="#00ff00"/>
<rect x="610" y="268" width="7" height="1" fill="#00ff00"/>
<rect x="610" y="254" width="1" height="15" fill="#00ff00"/>
<rect x="616" y="254" width="7" height="1" fill="#00ff00"/>
<rect x="616" y="254" width="1" height="15" fill="#00ff00"/>
<rect x="622" y="268" width="7" height="1" fill="#00ff00"/>
<rect x="622" y="254" width="1" height="15" fill="#00ff00"/>
<rect x="628" y="254" width="6" height="1" fill="#00ff00"/>
<rect x="628" y="254" width="1" height="15" fill="#00ff00"/>
<rect x="633" y="268" width="13" height="1" fill="#00ff00"/>
<rect x="633" y="254" width="1" height="15" fill="#00ff00"/>
<rect x="645" y="254" width="7" height="1" fill="#00ff00"/>
<rect x="645" y="254" width="1" height="15" fill="#00ff00"/>
<rect x="651" y="268" width="7" height="1" fill="#00ff00"/>
<rect x="651" y="254" width="1" height="15" fill="#00ff00"/>
<rect x="657" y="254" width="7" height="1" fill="#00ff00"/>
<rect x="657" y="254" width="1" height="15" fill="#00ff00"/>
<rect x="663" y="268" width="7" height="1" fill="#00ff00"/>
<rect x="663" y="254" width="1" height="15" fill="#00ff00"/>
<rect x="669" y="254" width="7" height="1" fill="#00ff00"/>
<rect x="669" y="254" width="1" height="15" fill="#00ff00"/>
<rect x="675" y="268" width="7" height="1" fill="#00ff00"/>
<rect x="675" y="254" width="1" height="15" fill="#00ff00"/>
<rect x="681" y="254" width="6" height="1" fill="#00ff00"/>
<rect x="681" y="254" width="1" height="15" fill="#00ff00"/>
<rect x="686" y="268" width="13" height="1" fill="#00ff00"/>
<rect x="686" y="254" width="1" height="15" fill="#00ff00"/>
<rect x="698" y="254" width="7" height="1" fill="#00ff00"/>
<rect x="698" y="254" width="1" height="15" fill="#00ff00"/>
<rect x="704" y="268" width="7" height="1" fill="#00ff00"/>
<rect x="704" y="254" width="1" height="15" fill="#00ff00"/>
<rect x="710" y="254" width="7" height="1" fill="#00ff00"/>
<rect x="710" y="254" width="1" height="15" fill="#00ff00"/>
<rect x="716" y="268" width="30" height="1" fill="#00ff00"/>
<rect x="716" y="254" width="1" height="15" fill="#00ff00"/>
<rect x="745" y="261" width="31" height="1" fill="#ff0000"/>
<rect x="745" y="261" width="1" height="8" fill="#ff0000"/>
<rect x="775" y="254" width="42" height="1" fill="#00ff00"/>
<rect x="775" y="254" width="1" height="8" fill="#00ff00"/>
<rect x="816" y="261" width="7" height="1" fill="#ff0000"/>
<rect x="816" y="254" width="1" height="8" fill="#ff0000"/>
<rect x="822" y="254" width="36" height="1" fill="#00ff00"/>
<rect x="822" y="254" width="1" height="8" fill="#00ff00"/>
<rect x="857" y="268" width="7" height="1" fill="#00ff00"/>
<rect x="857" y="254" width="1" height="15" fill="#00ff00"/>
<rect x="863" y="254" width="30" height="1" fill="#00ff00"/>
<rect x="863" y="254" width="1" height="15" fill="#00ff00"/>
<rect x="892" y="268" width="7" height="1" fill="#00ff00"/>
<rect x="892" y="254" width="1" height="15" fill="#00ff00"/>
<rect x="898" y="254" width="7" height="1" fill="#00ff00"/>
<rect x="898" y="254" width="1" height="15" fill="#00ff00"/>
<rect x="904" y="268" width="13" height="1" fill="#00ff00"/>
<rect x="904" y="254" width="1" height="15" fill="#00ff00"/>
<rect x="916" y="254" width="7" height="1" fill="#00ff00"/>
<rect x="916" y="254" width="1" height="15" fill="#00ff00"/>
<rect x="922" y="268" width="19" height="1" fill="#00ff00"/>
<rect x="922" y="254" width="1" height="15" fill="#00ff00"/>
<rect x="940" y="254" width="6" height="1" fill="#00ff00"/>
<rect x="940" y="254" width="1" height="15" fill="#00ff00"/>
<rect x="945" y="268" width="13" height="1" fill="#00ff00"/>
<rect x="945" y="254" width="1" height="15" fill="#00ff00"/>
<rect x="957" y="254" width="7" height="1" fill="#00ff00"/>
<rect x="957" y="254" width="1" height="15" fill="#00ff00"/>
<rect x="963" y="268" width="7" height="1" fill="#00ff00"/>
<rect x="963" y="254" width="1" height="15" fill="#00ff00"/>
<rect x="969" y="254" width="7" height="1" fill="#00ff00"/>
<rect x="969" y="254" width="1" height="15" fill="#00ff00"/>
<rect x="975" y="268" width="91" height="1" fill="#00ff00"/>
<rect x="975" y="254" width="1" height="15" fill="#00ff00"/>
<rect x="479" y="282" width="2" height="8" fill="#500000"/>
<rect x="480" y="275" width="243" height="15" fill="#004400"/>
<rect x="728" y="275" width="254" height="15" fill="#004400"/>
<rect x="987" y="275" width="79" height="15" fill="#004400"/>
<rect x="479" y="281" width="2" height="1" fill="#ff0000"/>
<rect x="480" y="274" width="243" height="1" fill="#00ff00"/>
<rect x="480" y="274" width="1" height="8" fill="#00ff00"/>
<rect x="722" y="288" width="7" height="1" fill="#00ff00"/>
<rect x="722" y="274" width="1" height="15" fill="#00ff00"/>
<rect x="728" y="274" width="254" height="1" fill="#00ff00"/>
<rect x="728" y="274" width="1" height="15" fill="#00ff00"/>
<rect x="981" y="288" width="7" height="1" fill="#00ff00"/>
<rect x="981" y="274" width="1" height="15" fill="#00ff00"/>
<rect x="987" y="274" width="79" height="1" fill="#00ff00"/>
<rect x="987" y="274" width="1" height="15" fill="#00ff00"/>
<rect x="479" y="302" width="2" height="8" fill="#500000"/>
<rect x="480" y="295" width="78" height="15" fill="#004400"/>
<rect x="563" y="295" width="36" height="15" fill="#004400"/>
<rect x="604" y="295" width="30" height="15" fill="#004400"/>
<rect x="639" y="295" width="25" height="15" fill="#004400"/>
<rect x="669" y="295" width="18" height="15" fill="#004400"/>
<rect x="692" y="295" width="13" height="15" fill="#004400"/>
<rect x="710" y="295" width="7" height="15" fill="#004400"/>
<rect x="728" y="295" width="89" height="15" fill="#004400"/>
<rect x="822" y="295" width="36" height="15" fill="#004400"/>
<rect x="863" y="295" width="30" height="15" fill="#004400"/>
<rect x="898" y="295" width="25" height="15" fill="#004400"/>
<rect x="928" y="295" width="18" height="15" fill="#004400"/>
<rect x="951" y="295" width="13" height="15" fill="#004400"/>
<rect x="969" y="295" width="7" height="15" fill="#004400"/>
<rect x="987" y="295" width="79" height="15" fill="#004400"/>
<rect x="479" y="301" width="2" height="1" fill="#ff0000"/>
<rect x="480" y="294" width="78" height="1" fill="#00ff00"/>
<rect x="480" y="294" width="1" height="8" fill="#00ff00"/>
<rect x="557" y="308" width="7" height="1" fill="#00ff00"/>
<rect x="557" y="294" width="1" height="15" fill="#00ff00"/>
<rect x="563" y="294" width="36" height="1" fill="#00ff00"/>
<rect x="563" y="294" width="1" height="15" fill="#00ff00"/>
<rect x="598" y="308" width="7" height="1" fill="#00ff00"/>
<rect x="598" y="294" width="1" height="15" fill="#00ff00"/>
<rect x="604" y="294" width="30" height="1" fill="#00ff00"/>
<rect x="604" y="294" width="1" height="15" fill="#00ff00"/>
<rect x="633" y="308" width="7" height="1" fill="#00ff00"/>
<rect x="633" y="294" width="1" height="15" fill="#00ff00"/>
<rect x="639" y="294" width="25" height="1" fill="#00ff00"/>
<rect x="639" y="294" width="1" height="15" fill="#00ff00"/>
<rect x="663" y="308" width="7" height="1" fill="#00ff00"/>
<rect x="663" y="294" width="1" height="15" fill="#00ff00"/>
<rect x="669" y="294" width="18" height="1" fill="#00ff00"/>
<rect x="669" y="294" width="1" height="15" fill="#00ff00"/>
<rect x="686" y="308" width="7" height="1" fill="#00ff00"/>
<rect x="686" y="294" width="1" height="15" fill="#00ff00"/>
<rect x="692" y="294" width="13" height="1" fill="#00ff00"/>
<rect x="692" y="294" width="1" height="15" fill="#00ff00"/>
<rect x="704" y="308" width="7" height="1" fill="#00ff00"/>
<rect x="704" y="294" width="1" height="15" fill="#00ff00"/>
<rect x="710" y="294" width="7" height="1" fill="#00ff00"/>
<rect x="710" y="294" width="1" height="15" fill="#00ff00"/>
<rect x="716" y="308" width="13" height="1" fill="#00ff00"/>
<rect x="716" y="294" width="1" height="15" fill="#00ff00"/>
<rect x="728" y="294" width="89" height="1" fill="#00ff00"/>
<rect x="728" y="294" width="1" height="15" fill="#00ff00"/>
<rect x="816" y="308" width="7" height="1" fill="#00ff00"/>
<rect x="816" y="294" width="1" height="15" fill="#00ff00"/>
<rect x="822" y="294" width="36" height="1" fill="#00ff00"/>
<rect x="822" y="294" width="1" height="15" fill="#00ff00"/>
<rect x="857" y="308" width="7" height="1" fill="#00ff00"/>
<rect x="857" y="294" width="1" height="15" fill="#00ff00"/>
<rect x="863" y="294" width="30" height="1" fill="#00ff00"/>
<rect x="863" y="294" width="1" height="15" fill="#00ff00"/>
<rect x="892" y="308" width="7" height="1" fill="#00ff00"/>
<rect x="892" y="294" width="1" height="15" fill="#00ff00"/>
<rect x="898" y="294" width="25" height="1" fill="#00ff00"/>
<rect x="898" y="294" width="1" height="15" fill="#00ff00"/>
<rect x="922" y="308" width="7" height="1" fill="#00ff00"/>
<rect x="922" y="294" width="1" height="15" fill="#00ff00"/>
<rect x="928" y="294" width="18" height="1" fill="#00ff00"/>
<rect x="928" y="294" width="1" height="15" fill="#00ff00"/>
<rect x="945" y="308" width="7" height="1" fill="#00ff00"/>
<rect x="945" y="294" width="1" height="15" fill="#00ff00"/>
<rect x="951" y="294" width="13" height="1" fill="#00ff00"/>
<rect x="951" y="294" width="1" height="15" fill="#00ff00"/>
<rect x="963" y="308" width="7" height="1" fill="#00ff00"/>
<rect x="963" y="294" width="1" height="15" fill="#00ff00"/>
<rect x="969" y="294" width="7" height="1" fill="#00ff00"/>
<rect x="969" y="294" width="1" height="15" fill="#00ff00"/>
<rect x="975" y="308" width="13" height="1" fill="#00ff00"/>
<rect x="975" y="294" width="1" height="15" fill="#00ff00"/>
<rect x="987" y="294" width="79" height="1" fill="#00ff00"/>
<rect x="987" y="294" width="1" height="15" fill="#00ff00"/>
<rect x="482" y="314" width="10" height="1" fill="#ff0000"/>
<rect x="482" y="328" width="10" height="1" fill="#ff0000"/>
<rect x="478" y="321" width="1" height="1" fill="#ff0000"/>
<rect x="479" y="319" width="1" height="2" fill="#ff0000"/>
<rect x="479" y="322" width="1" height="2" fill="#ff0000"/>
<rect x="480" y="317" width="1" height="2" fill="#ff0000"/>
<rect x="480" y="324" width="1" height="2" fill="#ff0000"/>
<rect x="481" y="315" width="1" height="2" fill="#ff0000"/>
<rect x="481" y="326" width="1" height="2" fill="#ff0000"/>
<rect x="495" y="321" width="1" height="1" fill="#ff0000"/>
<rect x="494" y="319" width="1" height="2" fill="#ff0000"/>
<rect x="494" y="322" width="1" height="2" fill="#ff0000"/>
<rect x="493" y="317" width="1" height="2" fill="#ff0000"/>
<rect x="493" y="324" width="1" height="2" fill="#ff0000"/>
<rect x="492" y="315" width="1" height="2" fill="#ff0000"/>
<rect x="492" y="326" width="1" height="2" fill="#ff0000"/>
<rect x="499" y="314" width="270" height="1" fill="#00ff00"/>
<rect x="499" y="328" width="270" height="1" fill="#00ff00"/>
<rect x="495" y="321" width="1" height="1" fill="#00ff00"/>
<rect x="496" y="319" width="1" height="2" fill="#00ff00"/>
<rect x="496" y="322" width="1" height="2" fill="#00ff00"/>
<rect x="497" y="317" width="1" height="2" fill="#00ff00"/>
<rect x="497" y="324" width="1" height="2" fill="#00ff00"/>
<rect x="498" y="315" width="1" height="2" fill="#00ff00"/>
<rect x="498" y="326" width="1" height="2" fill="#00ff00"/>
<rect x="772" y="321" width="1" height="1" fill="#00ff00"/>
<rect x="771" y="319" width="1" height="2" fill="#00ff00"/>
<rect x="771" y="322" width="1" height="2" fill="#00ff00"/>
<rect x="770" y="317" width="1" height="2" fill="#00ff00"/>
<rect x="770" y="324" width="1" height="2" fill="#00ff00"/>
<rect x="769" y="315" width="1" height="2" fill="#00ff00"/>
<rect x="769" y="326" width="1" height="2" fill="#00ff00"/>
<rect x="776" y="314" width="287" height="1" fill="#00ff00"/>
<rect x="776" y="328" width="287" height="1" fill="#00ff00"/>
<rect x="772" y="321" width="1" height="1" fill="#00ff00"/>
<rect x="773" y="319" width="1" height="2" fill="#00ff00"/>
<rect x="773" y="322" width="1" height="2" fill="#00ff00"/>
<rect x="774" y="317" width="1" height="2" fill="#00ff00"/>
<rect x="774" y="324" width="1" height="2" fill="#00ff00"/>
<rect x="775" y="315" width="1" height="2" fill="#00ff00"/>
<rect x="775" y="326" width="1" height="2" fill="#00ff00"/>
<rect x="1066" y="321" width="1" height="1" fill="#00ff00"/>
<rect x="1065" y="319" width="1" height="2" fill="#00ff00"/>
<rect x="1065" y="322" width="1" height="2" fill="#00ff00"/>
<rect x="1064" y="317" width="1" height="2" fill="#00ff00"/>
<rect x="1064" y="324" width="1" height="2" fill="#00ff00"/>
<rect x="1063" y="315" width="1" height="2" fill="#00ff00"/>
<rect x="1063" y="326" width="1" height="2" fill="#00ff00"/>
<rect x="483" y="319" width="2" height="1" fill="#ffffff"/>
<rect x="486" y="319" width="2" height="1" fill="#ffffff"/>
<rect x="484" y="320" width="1" height="1" fill="#ffffff"/>
<rect x="486" y="320" width="1" height="1" fill="#ffffff"/>
<rect x="484" y="321" width="1" height="1" fill="#ffffff"/>
<rect x="486" y="321" width="1" height="1" fill="#ffffff"/>
<rect x="485" y="322" width="1" height="1" fill="#ffffff"/>
<rect x="484" y="323" width="1" height="1" fill="#ffffff"/>
<rect x="486" y="323" width="1" height="1" fill="#ffffff"/>
<rect x="484" y="324" width="1" height="1" fill="#ffffff"/>
<rect x="486" y="324" width="1" height="1" fill="#ffffff"/>
<rect x="483" y="325" width="2" height="1" fill="#ffffff"/>
<rect x="486" y="325" width="2" height="1" fill="#ffffff"/>
<rect x="632" y="319" width="2" height="1" fill="#ffffff"/>
<rect x="631" y="320" width="1" height="1" fill="#ffffff"/>
<rect x="634" y="320" width="1" height="1" fill="#ffffff"/>
<rect x="631" y="321" width="1" height="1" fill="#ffffff"/>
<rect x="634" y="321" width="1" height="1" fill="#ffffff"/>
<rect x="632" y="322" width="3" height="1" fill="#ffffff"/>
<rect x="634" y="323" width="1" height="1" fill="#ffffff"/>
<rect x="634" y="324" width="1" height="1" fill="#ffffff"/>
<rect x="632" y="325" width="2" height="1" fill="#ffffff"/>
<rect x="917" y="319" width="2" height="1" fill="#ffffff"/>
<rect x="916" y="320" width="1" height="1" fill="#ffffff"/>
<rect x="919" y="320" width="1" height="1" fill="#ffffff"/>
<rect x="916" y="321" width="1" height="1" fill="#ffffff"/>
<rect x="919" y="321" width="1" height="1" fill="#ffffff"/>
<rect x="917" y="322" width="2" height="1" fill="#ffffff"/>
<rect x="916" y="323" width="1" height="1" fill="#ffffff"/>
<rect x="919" y="323" width="1" height="1" fill="#ffffff"/>
<rect x="916" y="324" width="1" height="1" fill="#ffffff"/>
<rect x="919" y="324" width="1" height="1" fill="#ffffff"/>
<rect x="917" y="325" width="2" height="1" fill="#ffffff"/>
<rect x="482" y="334" width="10" height="1" fill="#ff0000"/>
<rect x="482" y="348" width="10" height="1" fill="#ff0000"/>
<rect x="478" y="341" width="1" height="1" fill="#ff0000"/>
<rect x="479" y="339" width="1" height="2" fill="#ff0000"/>
<rect x="479" y="342" width="1" height="2" fill="#ff0000"/>
<rect x="480" y="337" width="1" height="2" fill="#ff0000"/>
<rect x="480" y="344" width="1" height="2" fill="#ff0000"/>
<rect x="481" y="335" width="1" height="2" fill="#ff0000"/>
<rect x="481" y="346" width="1" height="2" fill="#ff0000"/>
<rect x="495" y="341" width="1" height="1" fill="#ff0000"/>
<rect x="494" y="339" width="1" height="2" fill="#ff0000"/>
<rect x="494" y="342" width="1" height="2" fill="#ff0000"/>
<rect x="493" y="337" width="1" height="2" fill="#ff0000"/>
<rect x="493" y="344" width="1" height="2" fill="#ff0000"/>
<rect x="492" y="335" width="1" height="2" fill="#ff0000"/>
<rect x="492" y="346" width="1" height="2" fill="#ff0000"/>
<rect x="499" y="334" width="270" height="1" fill="#00ff00"/>
<rect x="499" y="348" width="270" height="1" fill="#00ff00"/>
<rect x="495" y="341" width="1" height="1" fill="#00ff00"/>
<rect x="496" y="339" width="1" height="2" fill="#00ff00"/>
<rect x="496" y="342" width="1" height="2" fill="#00ff00"/>
<rect x="497" y="337" width="1" height="2" fill="#00ff00"/>
<rect x="497" y="344" width="1" height="2" fill="#00ff00"/>
<rect x="498" y="335" width="1" height="2" fill="#00ff00"/>
<rect x="498" y="346" width="1" height="2" fill="#00ff00"/>
<rect x="772" y="341" width="1" height="1" fill="#00ff00"/>
<rect x="771" y="339" width="1" height="2" fill="#00ff00"/>
<rect x="771" y="342" width="1" height="2" fill="#00ff00"/>
<rect x="770" y="337" width="1" height="2" fill="#00ff00"/>
<rect x="770" y="344" width="1" height="2" fill="#00ff00"/>
<rect x="769" y="335" width="1" height="2" fill="#00ff00"/>
<rect x="769" y="346" width="1" height="2" fill="#00ff00"/>
<rect x="776" y="334" width="287" height="1" fill="#00ff00"/>
<rect x="776" y="348" width="287" height="1" fill="#00ff00"/>
<rect x="772" y="341" width="1" height="1" fill="#00ff00"/>
<rect x="773" y="339" width="1" height="2" fill="#00ff00"/>
<rect x="773" y="342" width="1" height="2" fill="#00ff00"/>
<rect x="774" y="337" width="1" height="2" fill="#00ff00"/>
<rect x="774" y="344" width="1" height="2" fill="#00ff00"/>
<rect x="775" y="335" width="1" height="2" fill="#00ff00"/>
<rect x="775" y="346" width="1" height="2" fill="#00ff00"/>
<rect x="1066" y="341" width="1" height="1" fill="#00ff00"/>
<rect x="1065" y="339" width="1" height="2" fill="#00ff00"/>
<rect x="1065" y="342" width="1" height="2" fill="#00ff00"/>
<rect x="1064" y="337" width="1" height="2" fill="#00ff00"/>
<rect x="1064" y="344" width="1" height="2" fill="#00ff00"/>
<rect x="1063" y="335" width="1" height="2" fill="#00ff00"/>
<rect x="1063" y="346" width="1" height="2" fill="#00ff00"/>
<rect x="483" y="339" width="2" height="1" fill="#ffffff"/>
<rect x="486" y="339" width="2" height="1" fill="#ffffff"/>
<rect x="484" y="340" width="1" height="1" fill="#ffffff"/>
<rect x="486" y="340" width="1" height="1" fill="#ffffff"/>
<rect x="484" y="341" width="1" height="1" fill="#ffffff"/>
<rect x="486" y="341" width="1" height="1" fill="#ffffff"/>
<rect x="485" y="342" width="1" height="1" fill="#ffffff"/>
<rect x="484" y="343" width="1" height="1" fill="#ffffff"/>
<rect x="486" y="343" width="1" height="1" fill="#ffffff"/>
<rect x="484" y="344" width="1" height="1" fill="#ffffff"/>
<rect x="486" y="344" width="1" height="1" fill="#ffffff"/>
<rect x="483" y="345" width="2" height="1" fill="#ffffff"/>
<rect x="486" y="345" width="2" height="1" fill="#ffffff"/>
<rect x="632" y="339" width="2" height="1" fill="#ffffff"/>
<rect x="631" y="340" width="1" height="1" fill="#ffffff"/>
<rect x="634" y="340" width="1" height="1" fill="#ffffff"/>
<rect x="634" y="341" width="1" height="1" fill="#ffffff"/>
<rect x="632" y="342" width="2" height="1" fill="#ffffff"/>
<rect x="634" y="343" width="1" height="1" fill="#ffffff"/>
<rect x="631" y="344" width="1" height="1" fill="#ffffff"/>
<rect x="634" y="344" width="1" height="1" fill="#ffffff"/>
<rect x="632" y="345" width="2" height="1" fill="#ffffff"/>
<rect x="916" y="339" width="4" height="1" fill="#ffffff"/>
<rect x="916" y="340" width="1" height="1" fill="#ffffff"/>
<rect x="916" y="341" width="3" height="1" fill="#ffffff"/>
<rect x="919" y="342" width="1" height="1" fill="#ffffff"/>
<rect x="919" y="343" width="1" height="1" fill="#ffffff"/>
<rect x="916" y="344" width="1" height="1" fill="#ffffff"/>
<rect x="919" y="344" width="1" height="1" fill="#ffffff"/>
<rect x="917" y="345" width="2" height="1" fill="#ffffff"/>
<rect x="482" y="354" width="10" height="1" fill="#ff0000"/>
<rect x="482" y="368" width="10" height="1" fill="#ff0000"/>
<rect x="478" y="361" width="1" height="1" fill="#ff0000"/>
<rect x="479" y="359" width="1" height="2" fill="#ff0000"/>
<rect x="479" y="362" width="1" height="2" fill="#ff0000"/>
<rect x="480" y="357" width="1" height="2" fill="#ff0000"/>
<rect x="480" y="364" width="1" height="2" fill="#ff0000"/>
<rect x="481" y="355" width="1" height="2" fill="#ff0000"/>
<rect x="481" y="366" width="1" height="2" fill="#ff0000"/>
<rect x="495" y="361" width="1" height="1" fill="#ff0000"/>
<rect x="494" y="359" width="1" height="2" fill="#ff0000"/>
<rect x="494" y="362" width="1" height="2" fill="#ff0000"/>
<rect x="493" y="357" width="1" height="2" fill="#ff0000"/>
<rect x="493" y="364" width="1" height="2" fill="#ff0000"/>
<rect x="492" y="355" width="1" height="2" fill="#ff0000"/>
<rect x="492" y="366" width="1" height="2" fill="#ff0000"/>
<rect x="499" y="354" width="270" height="1" fill="#00ff00"/>
<rect x="499" y="368" width="270" height="1" fill="#00ff00"/>
<rect x="495" y="361" width="1" height="1" fill="#00ff00"/>
<rect x="496" y="359" width="1" height="2" fill="#00ff00"/>
<rect x="496" y="362" width="1" height="2" fill="#00ff00"/>
<rect x="497" y="357" width="1" height="2" fill="#00ff00"/>
<rect x="497" y="364" width="1" height="2" fill="#00ff00"/>
<rect x="498" y="355" width="1" height="2" fill="#00ff00"/>
<rect x="498" y="366" width="1" height="2" fill="#00ff00"/>
<rect x="772" y="361" width="1" height="1" fill="#00ff00"/>
<rect x="771" y="359" width="1" height="2" fill="#00ff00"/>
<rect x="771" y="362" width="1" height="2" fill="#00ff00"/>
<rect x="770" y="357" width="1" height="2" fill="#00ff00"/>
<rect x="770" y="364" width="1" height="2" fill="#00ff00"/>
<rect x="769" y="355" width="1" height="2" fill="#00ff00"/>
<rect x="769" y="366" width="1" height="2" fill="#00ff00"/>
<rect x="776" y="354" width="287" height="1" fill="#00ff00"/>
<rect x="776" y="368" width="287" height="1" fill="#00ff00"/>
<rect x="772" y="361" width="1" height="1" fill="#00ff00"/>
<rect x="773" y="359" width="1" height="2" fill="#00ff00"/>
<rect x="773" y="362" width="1" height="2" fill="#00ff00"/>
<rect x="774" y="357" width="1" height="2" fill="#00ff00"/>
<rect x="774" y="364" width="1" height="2" fill="#00ff00"/>
<rect x="775" y="355" width="1" height="2" fill="#00ff00"/>
<rect x="775" y="366" width="1" height="2" fill="#00ff00"/>
<rect x="1066" y="361" width="1" height="1" fill="#00ff00"/>
<rect x="1065" y="359" width="1" height="2" fill="#00ff00"/>
<rect x="1065" y="362" width="1" height="2" fill="#00ff00"/>
<rect x="1064" y="357" width="1" height="2" fill="#00ff00"/>
<rect x="1064" y="364" width="1" height="2" fill="#00ff00"/>
<rect x="1063" y="355" width="1" height="2" fill="#00ff00"/>
<rect x="1063" y="366" width="1" height="2" fill="#00ff00"/>
<rect x="483" y="359" width="2" height="1" fill="#ffffff"/>
<rect x="486" y="359" width="2" height="1" fill="#ffffff"/>
<rect x="484" y="360" width="1" height="1" fill="#ffffff"/>
<rect x="486" y="360" width="1" height="1" fill="#ffffff"/>
<rect x="484" y="361" width="1" height="1" fill="#ffffff"/>
<rect x="486" y="361" width="1" height="1" fill="#ffffff"/>
<rect x="485" y="362" width="1" height="1" fill="#ffffff"/>
<rect x="484" y="363" width="1" height="1" fill="#ffffff"/>
<rect x="486" y="363" width="1" height="1" fill="#ffffff"/>
<rect x="484" y="364" width="1" height="1" fill="#ffffff"/>
<rect x="486" y="364" width="1" height="1" fill="#ffffff"/>
<rect x="483" y="365" width="2" height="1" fill="#ffffff"/>
<rect x="486" y="365" width="2" height="1" fill="#ffffff"/>
<rect x="632" y="359" width="2" height="1" fill="#ffffff"/>
<rect x="631" y="360" width="1" height="1" fill="#ffffff"/>
<rect x="634" y="360" width="1" height="1" fill="#ffffff"/>
<rect x="631" y="361" width="1" height="1" fill="#ffffff"/>
<rect x="634" y="361" width="1" height="1" fill="#ffffff"/>
<rect x="632" y="362" width="2" height="1" fill="#ffffff"/>
<rect x="631" y="363" width="1" height="1" fill="#ffffff"/>
<rect x="634" y="363" width="1" height="1" fill="#ffffff"/>
<rect x="631" y="364" width="1" height="1" fill="#ffffff"/>
<rect x="634" y="364" width="1" height="1" fill="#ffffff"/>
<rect x="632" y="365" width="2" height="1" fill="#ffffff"/>
<rect x="916" y="359" width="3" height="1" fill="#ffffff"/>
<rect x="915" y="360" width="2" height="1" fill="#ffffff"/>
<rect x="915" y="361" width="1" height="1" fill="#ffffff"/>
<rect x="915" y="362" width="4" height="1" fill="#ffffff"/>
<rect x="915" y="363" width="1" height="1" fill="#ffffff"/>
<rect x="919" y="363" width="1" height="1" fill="#ffffff"/>
<rect x="915" y="364" width="1" height="1" fill="#ffffff"/>
<rect x="919" y="364" width="1" height="1" fill="#ffffff"/>
<rect x="916" y="365" width="3" height="1" fill="#ffffff"/>
<rect x="482" y="374" width="10" height="1" fill="#ff0000"/>
<rect x="482" y="388" width="10" height="1" fill="#ff0000"/>
<rect x="478" y="381" width="1" height="1" fill="#ff0000"/>
<rect x="479" y="379" width="1" height="2" fill="#ff0000"/>
<rect x="479" y="382" width="1" height="2" fill="#ff0000"/>
<rect x="480" y="377" width="1" height="2" fill="#ff0000"/>
<rect x="480" y="384" width="1" height="2" fill="#ff0000"/>
<rect x="481" y="375" width="1" height="2" fill="#ff0000"/>
<rect x="481" y="386" width="1" height="2" fill="#ff0000"/>
<rect x="495" y="381" width="1" height="1" fill="#ff0000"/>
<rect x="494" y="379" width="1" height="2" fill="#ff0000"/>
<rect x="494" y="382" width="1" height="2" fill="#ff0000"/>
<rect x="493" y="377" width="1" height="2" fill="#ff0000"/>
<rect x="493" y="384" width="1" height="2" fill="#ff0000"/>
<rect x="492" y="375" width="1" height="2" fill="#ff0000"/>
<rect x="492" y="386" width="1" height="2" fill="#ff0000"/>
<rect x="499" y="374" width="270" height="1" fill="#00ff00"/>
<rect x="499" y="388" width="270" height="1" fill="#00ff00"/>
<rect x="495" y="381" width="1" height="1" fill="#00ff00"/>
<rect x="496" y="379" width="1" height="2" fill="#00ff00"/>
<rect x="496" y="382" width="1" height="2" fill="#00ff00"/>
<rect x="497" y="377" width="1" height="2" fill="#00ff00"/>
<rect x="497" y="384" width="1" height="2" fill="#00ff00"/>
<rect x="498" y="375" width="1" height="2" fill="#00ff00"/>
<rect x="498" y="386" width="1" height="2" fill="#00ff00"/>
<rect x="772" y="381" width="1" height="1" fill="#00ff00"/>
<rect x="771" y="379" width="1" height="2" fill="#00ff00"/>
<rect x="771" y="382" width="1" height="2" fill="#00ff00"/>
<rect x="770" y="377" width="1" height="2" fill="#00ff00"/>
<rect x="770" y="384" width="1" height="2" fill="#00ff00"/>
<rect x="769" y="375" width="1" height="2" fill="#00ff00"/>
<rect x="769" y="386" width="1" height="2" fill="#00ff00"/>
<rect x="776" y="374" width="287" height="1" fill="#00ff00"/>
<rect x="776" y="388" width="287" height="1" fill="#00ff00"/>
<rect x="772" y="381" width="1" height="1" fill="#00ff00"/>
<rect x="773" y="379" width="1" height="2" fill="#00ff00"/>
<rect x="773" y="382" width="1" height="2" fill="#00ff00"/>
<rect x="774" y="377" width="1" height="2" fill="#00ff00"/>
<rect x="774" y="384" width="1" height="2" fill="#00ff00"/>
<rect x="775" y="375" width="1" height="2" fill="#00ff00"/>
<rect x="775" y="386" width="1" height="2" fill="#00ff00"/>
<rect x="1066" y="381" width="1" height="1" fill="#00ff00"/>
<rect x="1065" y="379" width="1" height="2" fill="#00ff00"/>
<rect x="1065" y="382" width="1" height="2" fill="#00ff00"/>
<rect x="1064" y="377" width="1" height="2" fill="#00ff00"/>
<rect x="1064" y="384" width="1" height="2" fill="#00ff00"/>
<rect x="1063" y="375" width="1" height="2" fill="#00ff00"/>
<rect x="1063" y="386" width="1" height="2" fill="#00ff00"/>
<rect x="483" y="379" width="2" height="1" fill="#ffffff"/>
<rect x="486" y="379" width="2" height="1" fill="#ffffff"/>
<rect x="484" y="380" width="1" height="1" fill="#ffffff"/>
<rect x="486" y="380" width="1" height="1" fill="#ffffff"/>
<rect x="484" y="381" width="1" height="1" fill="#ffffff"/>
<rect x="486" y="381" width="1" height="1" fill="#ffffff"/>
<rect x="485" y="382" width="1" height="1" fill="#ffffff"/>
<rect x="484" y="383" width="1" height="1" fill="#ffffff"/>
<rect x="486" y="383" width="1" height="1" fill="#ffffff"/>
<rect x="484" y="384" width="1" height="1" fill="#ffffff"/>
<rect x="486" y="384" width="1" height="1" fill="#ffffff"/>
<rect x="483" y="385" width="2" height="1" fill="#ffffff"/>
<rect x="486" y="385" width="2" height="1" fill="#ffffff"/>
<rect x="631" y="379" width="4" height="1" fill="#ffffff"/>
<rect x="631" y="380" width="1" height="1" fill="#ffffff"/>
<rect x="631" y="381" width="3" height="1" fill="#ffffff"/>
<rect x="634" y="382" width="1" height="1" fill="#ffffff"/>
<rect x="634" y="383" width="1" height="1" fill="#ffffff"/>
<rect x="631" y="384" width="1" height="1" fill="#ffffff"/>
<rect x="634" y="384" width="1" height="1" fill="#ffffff"/>
<rect x="632" y="385" width="2" height="1" fill="#ffffff"/>
<rect x="916" y="379" width="4" height="1" fill="#ffffff"/>
<rect x="918" y="380" width="1" height="1" fill="#ffffff"/>
<rect x="918" y="381" width="1" height="1" fill="#ffffff"/>
<rect x="917" y="382" width="1" height="1" fill="#ffffff"/>
<rect x="917" y="383" width="1" height="1" fill="#ffffff"/>
<rect x="917" y="384" width="1" height="1" fill="#ffffff"/>
<rect x="917" y="385" width="1" height="1" fill="#ffffff"/>
<rect x="482" y="394" width="10" height="1" fill="#ff0000"/>
<rect x="482" y="408" width="10" height="1" fill="#ff0000"/>
<rect x="478" y="401" width="1" height="1" fill="#ff0000"/>
<rect x="479" y="399" width="1" height="2" fill="#ff0000"/>
<rect x="479" y="402" width="1" height="2" fill="#ff0000"/>
<rect x="480" y="397" width="1" height="2" fill="#ff0000"/>
<rect x="480" y="404" width="1" height="2" fill="#ff0000"/>
<rect x="481" y="395" width="1" height="2" fill="#ff0000"/>
<rect x="481" y="406" width="1" height="2" fill="#ff0000"/>
<rect x="495" y="401" width="1" height="1" fill="#ff0000"/>
<rect x="494" y="399" width="1" height="2" fill="#ff0000"/>
<rect x="494" y="402" width="1" height="2" fill="#ff0000"/>
<rect x="493" y="397" width="1" height="2" fill="#ff0000"/>
<rect x="493" y="404" width="1" height="2" fill="#ff0000"/>
<rect x="492" y="395" width="1" height="2" fill="#ff0000"/>
<rect x="492" y="406" width="1" height="2" fill="#ff0000"/>
<rect x="499" y="394" width="270" height="1" fill="#00ff00"/>
<rect x="499" y="408" width="270" height="1" fill="#00ff00"/>
<rect x="495" y="401" width="1" height="1" fill="#00ff00"/>
<rect x="496" y="399" width="1" height="2" fill="#00ff00"/>
<rect x="496" y="402" width="1" height="2" fill="#00ff00"/>
<rect x="497" y="397" width="1" height="2" fill="#00ff00"/>
<rect x="497" y="404" width="1" height="2" fill="#00ff00"/>
<rect x="498" y="395" width="1" height="2" fill="#00ff00"/>
<rect x="498" y="406" width="1" height="2" fill="#00ff00"/>
<rect x="772" y="401" width="1" height="1" fill="#00ff00"/>
<rect x="771" y="399" width="1" height="2" fill="#00ff00"/>
<rect x="771" y="402" width="1" height="2" fill="#00ff00"/>
<rect x="770" y="397" width="1" height="2" fill="#00ff00"/>
<rect x="770" y="404" width="1" height="2" fill="#00ff00"/>
<rect x="769" y="395" width="1" height="2" fill="#00ff00"/>
<rect x="769" y="406" width="1" height="2" fill="#00ff00"/>
<rect x="776" y="394" width="287" height="1" fill="#00ff00"/>
<rect x="776" y="408" width="287" height="1" fill="#00ff00"/>
<rect x="772" y="401" width="1" height="1" fill="#00ff00"/>
<rect x="773" y="399" width="1" height="2" fill="#00ff00"/>
<rect x="773" y="402" width="1" height="2" fill="#00ff00"/>
<rect x="774" y="397" width="1" height="2" fill="#00ff00"/>
<rect x="774" y="404" width="1" height="2" fill="#00ff00"/>
<rect x="775" y="395" width="1" height="2" fill="#00ff00"/>
<rect x="775" y="406" width="1" height="2" fill="#00ff00"/>
<rect x="1066" y="401" width="1" height="1" fill="#00ff00"/>
<rect x="1065" y="399" width="1" height="2" fill="#00ff00"/>
<rect x="1065" y="402" width="1" height="2" fill="#00ff00"/>
<rect x="1064" y="397" width="1" height="2" fill="#00ff00"/>
<rect x="1064" y="404" width="1" height="2" fill="#00ff00"/>
<rect x="1063" y="395" width="1" height="2" fill="#00ff00"/>
<rect x="1063" y="406" width="1" height="2" fill="#00ff00"/>
<rect x="483" y="399" width="2" height="1" fill="#ffffff"/>
<rect x="486" y="399" width="2" height="1" fill="#ffffff"/>
<rect x="484" y="400" width="1" height="1" fill="#ffffff"/>
<rect x="486" y="400" width="1" height="1" fill="#ffffff"/>
<rect x="484" y="401" width="1" height="1" fill="#ffffff"/>
<rect x="486" y="401" width="1" height="1" fill="#ffffff"/>
<rect x="485" y="402" width="1" height="1" fill="#ffffff"/>
<rect x="484" y="403" width="1" height="1" fill="#ffffff"/>
<rect x="486" y="403" width="1" height="1" fill="#ffffff"/>
<rect x="484" y="404" width="1" height="1" fill="#ffffff"/>
<rect x="486" y="404" width="1" height="1" fill="#ffffff"/>
<rect x="483" y="405" width="2" height="1" fill="#ffffff"/>
<rect x="486" y="405" width="2" height="1" fill="#ffffff"/>
<rect x="631" y="399" width="4" height="1" fill="#ffffff"/>
<rect x="633" y="400" width="1" height="1" fill="#ffffff"/>
<rect x="633" y="401" width="1" height="1" fill="#ffffff"/>
<rect x="632" y="402" width="1" height="1" fill="#ffffff"/>
<rect x="632" y="403" width="1" height="1" fill="#ffffff"/>
<rect x="632" y="404" width="1" height="1" fill="#ffffff"/>
<rect x="632" y="405" width="1" height="1" fill="#ffffff"/>
<rect x="916" y="399" width="3" height="1" fill="#ffffff"/>
<rect x="915" y="400" width="2" height="1" fill="#ffffff"/>
<rect x="915" y="401" width="1" height="1" fill="#ffffff"/>
<rect x="915" y="402" width="4" height="1" fill="#ffffff"/>
<rect x="915" y="403" width="1" height="1" fill="#ffffff"/>
<rect x="919" y="403" width="1" height="1" fill="#ffffff"/>
<rect x="915" y="404" width="1" height="1" fill="#ffffff"/>
<rect x="919" y="404" width="1" height="1" fill="#ffffff"/>
<rect x="916" y="405" width="3" height="1" fill="#ffffff"/>
<rect x="482" y="414" width="10" height="1" fill="#ff0000"/>
<rect x="482" y="428" width="10" height="1" fill="#ff0000"/>
<rect x="478" y="421" width="1" height="1" fill="#ff0000"/>
<rect x="479" y="419" width="1" height="2" fill="#ff0000"/>
<rect x="479" y="422" width="1" height="2" fill="#ff0000"/>
<rect x="480" y="417" width="1" height="2" fill="#ff0000"/>
<rect x="480" y="424" width="1" height="2" fill="#ff0000"/>
<rect x="481" y="415" width="1" height="2" fill="#ff0000"/>
<rect x="481" y="426" width="1" height="2" fill="#ff0000"/>
<rect x="495" y="421" width="1" height="1" fill="#ff0000"/>
<rect x="494" y="419" width="1" height="2" fill="#ff0000"/>
<rect x="494" y="422" width="1" height="2" fill="#ff0000"/>
<rect x="493" y="417" width="1" height="2" fill="#ff0000"/>
<rect x="493" y="424" width="1" height="2" fill="#ff0000"/>
<rect x="492" y="415" width="1" height="2" fill="#ff0000"/>
<rect x="492" y="426" width="1" height="2" fill="#ff0000"/>
<rect x="499" y="414" width="270" height="1" fill="#00ff00"/>
<rect x="499" y="428" width="270" height="1" fill="#00ff00"/>
<rect x="495" y="421" width="1" height="1" fill="#00ff00"/>
<rect x="496" y="419" width="1" height="2" fill="#00ff00"/>
<rect x="496" y="422" width="1" height="2" fill="#00ff00"/>
<rect x="497" y="417" width="1" height="2" fill="#00ff00"/>
<rect x="497" y="424" width="1" height="2" fill="#00ff00"/>
<rect x="498" y="415" width="1" height="2" fill="#00ff00"/>
<rect x="498" y="426" width="1" height="2" fill="#00ff00"/>
<rect x="772" y="421" width="1" height="1" fill="#00ff00"/>
<rect x="771" y="419" width="1" height="2" fill="#00ff00"/>
<rect x="771" y="422" width="1" height="2" fill="#00ff00"/>
<rect x="770" y="417" width="1" height="2" fill="#00ff00"/>
<rect x="770" y="424" width="1" height="2" fill="#00ff00"/>
<rect x="769" y="415" width="1" height="2" fill="#00ff00"/>
<rect x="769" y="426" width="1" height="2" fill="#00ff00"/>
<rect x="776" y="414" width="287" height="1" fill="#00ff00"/>
<rect x="776" y="428" width="287" height="1" fill="#00ff00"/>
<rect x="772" y="421" width="1" height="1" fill="#00ff00"/>
<rect x="773" y="419" width="1" height="2" fill="#00ff00"/>
<rect x="773" y="422" width="1" height="2" fill="#00ff00"/>
<rect x="774" y="417" width="1" height="2" fill="#00ff00"/>
<rect x="774" y="424" width="1" height="2" fill="#00ff00"/>
<rect x="775" y="415" width="1" height="2" fill="#00ff00"/>
<rect x="775" y="426" width="1" height="2" fill="#00ff00"/>
<rect x="1066" y="421" width="1" height="1" fill="#00ff00"/>
<rect x="1065" y="419" width="1" height="2" fill="#00ff00"/>
<rect x="1065" y="422" width="1" height="2" fill="#00ff00"/>
<rect x="1064" y="417" width="1" height="2" fill="#00ff00"/>
<rect x="1064" y="424" width="1" height="2" fill="#00ff00"/>
<rect x="1063" y="415" width="1" height="2" fill="#00ff00"/>
<rect x="1063" y="426" width="1" height="2" fill="#00ff00"/>
<rect x="483" y="419" width="2" height="1" fill="#ffffff"/>
<rect x="486" y="419" width="2" height="1" fill="#ffffff"/>
<rect x="484" y="420" width="1" height="1" fill="#ffffff"/>
<rect x="486" y="420" width="1" height="1" fill="#ffffff"/>
<rect x="484" y="421" width="1" height="1" fill="#ffffff"/>
<rect x="486" y="421" width="1" height="1" fill="#ffffff"/>
<rect x="485" y="422" width="1" height="1" fill="#ffffff"/>
<rect x="484" y="423" width="1" height="1" fill="#ffffff"/>
<rect x="486" y="423" width="1" height="1" fill="#ffffff"/>
<rect x="484" y="424" width="1" height="1" fill="#ffffff"/>
<rect x="486" y="424" width="1" height="1" fill="#ffffff"/>
<rect x="483" y="425" width="2" height="1" fill="#ffffff"/>
<rect x="486" y="425" width="2" height="1" fill="#ffffff"/>
<rect x="632" y="419" width="2" height="1" fill="#ffffff"/>
<rect x="631" y="420" width="1" height="1" fill="#ffffff"/>
<rect x="634" y="420" width="1" height="1" fill="#ffffff"/>
<rect x="631" y="421" width="1" height="1" fill="#ffffff"/>
<rect x="634" y="421" width="1" height="1" fill="#ffffff"/>
<rect x="633" y="422" width="1" height="1" fill="#ffffff"/>
<rect x="632" y="423" width="1" height="1" fill="#ffffff"/>
<rect x="631" y="424" width="1" height="1" fill="#ffffff"/>
<rect x="631" y="425" width="4" height="1" fill="#ffffff"/>
<rect x="917" y="419" width="2" height="1" fill="#ffffff"/>
<rect x="916" y="420" width="1" height="1" fill="#ffffff"/>
<rect x="919" y="420" width="1" height="1" fill="#ffffff"/>
<rect x="919" y="421" width="1" height="1" fill="#ffffff"/>
<rect x="917" y="422" width="2" height="1" fill="#ffffff"/>
<rect x="919" y="423" width="1" height="1" fill="#ffffff"/>
<rect x="916" y="424" width="1" height="1" fill="#ffffff"/>
<rect x="919" y="424" width="1" height="1" fill="#ffffff"/>
<rect x="917" y="425" width="2" height="1" fill="#ffffff"/>
<rect x="482" y="434" width="10" height="1" fill="#ff0000"/>
<rect x="482" y="448" width="10" height="1" fill="#ff0000"/>
<rect x="478" y="441" width="1" height="1" fill="#ff0000"/>
<rect x="479" y="439" width="1" height="2" fill="#ff0000"/>
<rect x="479" y="442" width="1" height="2" fill="#ff0000"/>
<rect x="480" y="437" width="1" height="2" fill="#ff0000"/>
<rect x="480" y="444" width="1" height="2" fill="#ff0000"/>
<rect x="481" y="435" width="1" height="2" fill="#ff0000"/>
<rect x="481" y="446" width="1" height="2" fill="#ff0000"/>
<rect x="495" y="441" width="1" height="1" fill="#ff0000"/>
<rect x="494" y="439" width="1" height="2" fill="#ff0000"/>
<rect x="494" y="442" width="1" height="2" fill="#ff0000"/>
<rect x="493" y="437" width="1" height="2" fill="#ff0000"/>
<rect x="493" y="444" width="1" height="2" fill="#ff0000"/>
<rect x="492" y="435" width="1" height="2" fill="#ff0000"/>
<rect x="492" y="446" width="1" height="2" fill="#ff0000"/>
<rect x="499" y="434" width="270" height="1" fill="#00ff00"/>
<rect x="499" y="448" width="270" height="1" fill="#00ff00"/>
<rect x="495" y="441" width="1" height="1" fill="#00ff00"/>
<rect x="496" y="439" width="1" height="2" fill="#00ff00"/>
<rect x="496" y="442" width="1" height="2" fill="#00ff00"/>
<rect x="497" y="437" width="1" height="2" fill="#00ff00"/>
<rect x="497" y="444" width="1" height="2" fill="#00ff00"/>
<rect x="498" y="435" width="1" height="2" fill="#00ff00"/>
<rect x="498" y="446" width="1" height="2" fill="#00ff00"/>
<rect x="772" y="441" width="1" height="1" fill="#00ff00"/>
<rect x="771" y="439" width="1" height="2" fill="#00ff00"/>
<rect x="771" y="442" width="1" height="2" fill="#00ff00"/>
<rect x="770" y="437" width="1" height="2" fill="#00ff00"/>
<rect x="770" y="444" width="1" height="2" fill="#00ff00"/>
<rect x="769" y="435" width="1" height="2" fill="#00ff00"/>
<rect x="769" y="446" width="1" height="2" fill="#00ff00"/>
<rect x="776" y="434" width="287" height="1" fill="#00ff00"/>
<rect x="776" y="448" width="287" height="1" fill="#00ff00"/>
<rect x="772" y="441" width="1" height="1" fill="#00ff00"/>
<rect x="773" y="439" width="1" height="2" fill="#00ff00"/>
<rect x="773" y="442" width="1" height="2" fill="#00ff00"/>
<rect x="774" y="437" width="1" height="2" fill="#00ff00"/>
<rect x="774" y="444" width="1" height="2" fill="#00ff00"/>
<rect x="775" y="435" width="1" height="2" fill="#00ff00"/>
<rect x="775" y="446" width="1" height="2" fill="#00ff00"/>
<rect x="1066" y="441" width="1" height="1" fill="#00ff00"/>
<rect x="1065" y="439" width="1" height="2" fill="#00ff00"/>
<rect x="1065" y="442" width="1" height="2" fill="#00ff00"/>
<rect x="1064" y="437" width="1" height="2" fill="#00ff00"/>
<rect x="1064" y="444" width="1" height="2" fill="#00ff00"/>
<rect x="1063" y="435" width="1" height="2" fill="#00ff00"/>
<rect x="1063" y="446" width="1" height="2" fill="#00ff00"/>
<rect x="483" y="439" width="2" height="1" fill="#ffffff"/>
<rect x="486" y="439" width="2" height="1" fill="#ffffff"/>
<rect x="484" y="440" width="1" height="1" fill="#ffffff"/>
<rect x="486" y="440" width="1" height="1" fill="#ffffff"/>
<rect x="484" y="441" width="1" height="1" fill="#ffffff"/>
<rect x="486" y="441" width="1" height="1" fill="#ffffff"/>
<rect x="485" y="442" width="1" height="1" fill="#ffffff"/>
<rect x="484" y="443" width="1" height="1" fill="#ffffff"/>
<rect x="486" y="443" width="1" height="1" fill="#ffffff"/>
<rect x="484" y="444" width="1" height="1" fill="#ffffff"/>
<rect x="486" y="444" width="1" height="1" fill="#ffffff"/>
<rect x="483" y="445" width="2" height="1" fill="#ffffff"/>
<rect x="486" y="445" width="2" height="1" fill="#ffffff"/>
<rect x="633" y="438" width="1" height="1" fill="#ffffff"/>
<rect x="633" y="439" width="1" height="1" fill="#ffffff"/>
<rect x="632" y="440" width="2" height="1" fill="#ffffff"/>
<rect x="631" y="441" width="1" height="1" fill="#ffffff"/>
<rect x="633" y="441" width="1" height="1" fill="#ffffff"/>
<rect x="630" y="442" width="1" height="1" fill="#ffffff"/>
<rect x="633" y="442" width="1" height="1" fill="#ffffff"/>
<rect x="630" y="443" width="5" height="1" fill="#ffffff"/>
<rect x="633" y="444" width="1" height="1" fill="#ffffff"/>
<rect x="633" y="445" width="1" height="1" fill="#ffffff"/>
<rect x="917" y="439" width="2" height="1" fill="#ffffff"/>
<rect x="916" y="440" width="1" height="1" fill="#ffffff"/>
<rect x="919" y="440" width="1" height="1" fill="#ffffff"/>
<rect x="916" y="441" width="1" height="1" fill="#ffffff"/>
<rect x="919" y="441" width="1" height="1" fill="#ffffff"/>
<rect x="918" y="442" width="1" height="1" fill="#ffffff"/>
<rect x="917" y="443" width="1" height="1" fill="#ffffff"/>
<rect x="916" y="444" width="1" height="1" fill="#ffffff"/>
<rect x="916" y="445" width="4" height="1" fill="#ffffff"/>
<rect x="482" y="454" width="10" height="1" fill="#ff0000"/>
<rect x="482" y="468" width="10" height="1" fill="#ff0000"/>
<rect x="478" y="461" width="1" height="1" fill="#ff0000"/>
<rect x="479" y="459" width="1" height="2" fill="#ff0000"/>
<rect x="479" y="462" width="1" height="2" fill="#ff0000"/>
<rect x="480" y="457" width="1" height="2" fill="#ff0000"/>
<rect x="480" y="464" width="1" height="2" fill="#ff0000"/>
<rect x="481" y="455" width="1" height="2" fill="#ff0000"/>
<rect x="481" y="466" width="1" height="2" fill="#ff0000"/>
<rect x="495" y="461" width="1" height="1" fill="#ff0000"/>
<rect x="494" y="459" width="1" height="2" fill="#ff0000"/>
<rect x="494" y="462" width="1" height="2" fill="#ff0000"/>
<rect x="493" y="457" width="1" height="2" fill="#ff0000"/>
<rect x="493" y="464" width="1" height="2" fill="#ff0000"/>
<rect x="492" y="455" width="1" height="2" fill="#ff0000"/>
<rect x="492" y="466" width="1" height="2" fill="#ff0000"/>
<rect x="499" y="454" width="270" height="1" fill="#00ff00"/>
<rect x="499" y="468" width="270" height="1" fill="#00ff00"/>
<rect x="495" y="461" width="1" height="1" fill="#00ff00"/>
<rect x="496" y="459" width="1" height="2" fill="#00ff00"/>
<rect x="496" y="462" width="1" height="2" fill="#00ff00"/>
<rect x="497" y="457" width="1" height="2" fill="#00ff00"/>
<rect x="497" y="464" width="1" height="2" fill="#00ff00"/>
<rect x="498" y="455" width="1" height="2" fill="#00ff00"/>
<rect x="498" y="466" width="1" height="2" fill="#00ff00"/>
<rect x="772" y="461" width="1" height="1" fill="#00ff00"/>
<rect x="771" y="459" width="1" height="2" fill="#00ff00"/>
<rect x="771" y="462" width="1" height="2" fill="#00ff00"/>
<rect x="770" y="457" width="1" height="2" fill="#00ff00"/>
<rect x="770" y="464" width="1" height="2" fill="#00ff00"/>
<rect x="769" y="455" width="1" height="2" fill="#00ff00"/>
<rect x="769" y="466" width="1" height="2" fill="#00ff00"/>
<rect x="776" y="454" width="287" height="1" fill="#00ff00"/>
<rect x="776" y="468" width="287" height="1" fill="#00ff00"/>
<rect x="772" y="461" width="1" height="1" fill="#00ff00"/>
<rect x="773" y="459" width="1" height="2" fill="#00ff00"/>
<rect x="773" y="462" width="1" height="2" fill="#00ff00"/>
<rect x="774" y="457" width="1" height="2" fill="#00ff00"/>
<rect x="774" y="464" width="1" height="2" fill="#00ff00"/>
<rect x="775" y="455" width="1" height="2" fill="#00ff00"/>
<rect x="775" y="466" width="1" height="2" fill="#00ff00"/>
<rect x="1066" y="461" width="1" height="1" fill="#00ff00"/>
<rect x="1065" y="459" width="1" height="2" fill="#00ff00"/>
<rect x="1065" y="462" width="1" height="2" fill="#00ff00"/>
<rect x="1064" y="457" width="1" height="2" fill="#00ff00"/>
<rect x="1064" y="464" width="1" height="2" fill="#00ff00"/>
<rect x="1063" y="455" width="1" height="2" fill="#00ff00"/>
<rect x="1063" y="466" width="1" height="2" fill="#00ff00"/>
<rect x="483" y="459" width="2" height="1" fill="#ffffff"/>
<rect x="486" y="459" width="2" height="1" fill="#ffffff"/>
<rect x="484" y="460" width="1" height="1" fill="#ffffff"/>
<rect x="486" y="460" width="1" height="1" fill="#ffffff"/>
<rect x="484" y="461" width="1" height="1" fill="#ffffff"/>
<rect x="486" y="461" width="1" height="1" fill="#ffffff"/>
<rect x="485" y="462" width="1" height="1" fill="#ffffff"/>
<rect x="484" y="463" width="1" height="1" fill="#ffffff"/>
<rect x="486" y="463" width="1" height="1" fill="#ffffff"/>
<rect x="484" y="464" width="1" height="1" fill="#ffffff"/>
<rect x="486" y="464" width="1" height="1" fill="#ffffff"/>
<rect x="483" y="465" width="2" height="1" fill="#ffffff"/>
<rect x="486" y="465" width="2" height="1" fill="#ffffff"/>
<rect x="631" y="459" width="3" height="1" fill="#ffffff"/>
<rect x="630" y="460" width="2" height="1" fill="#ffffff"/>
<rect x="630" y="461" width="1" height="1" fill="#ffffff"/>
<rect x="630" y="462" width="4" height="1" fill="#ffffff"/>
<rect x="630" y="463" width="1" height="1" fill="#ffffff"/>
<rect x="634" y="463" width="1" height="1" fill="#ffffff"/>
<rect x="630" y="464" width="1" height="1" fill="#ffffff"/>
<rect x="634" y="464" width="1" height="1" fill="#ffffff"/>
<rect x="631" y="465" width="3" height="1" fill="#ffffff"/>
<rect x="917" y="459" width="1" height="1" fill="#ffffff"/>
<rect x="916" y="460" width="2" height="1" fill="#ffffff"/>
<rect x="917" y="461" width="1" height="1" fill="#ffffff"/>
<rect x="917" y="462" width="1" height="1" fill="#ffffff"/>
<rect x="917" y="463" width="1" height="1" fill="#ffffff"/>
<rect x="917" y="464" width="1" height="1" fill="#ffffff"/>
<rect x="916" y="465" width="3" height="1" fill="#ffffff"/>
<rect x="482" y="474" width="581" height="1" fill="#00ff00"/>
<rect x="482" y="488" width="581" height="1" fill="#00ff00"/>
<rect x="478" y="481" width="1" height="1" fill="#00ff00"/>
<rect x="479" y="479" width="1" height="2" fill="#00ff00"/>
<rect x="479" y="482" width="1" height="2" fill="#00ff00"/>
<rect x="480" y="477" width="1" height="2" fill="#00ff00"/>
<rect x="480" y="484" width="1" height="2" fill="#00ff00"/>
<rect x="481" y="475" width="1" height="2" fill="#00ff00"/>
<rect x="481" y="486" width="1" height="2" fill="#00ff00"/>
<rect x="1066" y="481" width="1" height="1" fill="#00ff00"/>
<rect x="1065" y="479" width="1" height="2" fill="#00ff00"/>
<rect x="1065" y="482" width="1" height="2" fill="#00ff00"/>
<rect x="1064" y="477" width="1" height="2" fill="#00ff00"/>
<rect x="1064" y="484" width="1" height="2" fill="#00ff00"/>
<rect x="1063" y="475" width="1" height="2" fill="#00ff00"/>
<rect x="1063" y="486" width="1" height="2" fill="#00ff00"/>
<rect x="746" y="479" width="2" height="1" fill="#ffffff"/>
<rect x="745" y="480" width="1" height="1" fill="#ffffff"/>
<rect x="748" y="480" width="1" height="1" fill="#ffffff"/>
<rect x="745" y="481" width="1" height="1" fill="#ffffff"/>
<rect x="748" y="481" width="1" height="1" fill="#ffffff"/>
<rect x="745" y="482" width="1" height="1" fill="#ffffff"/>
<rect x="748" y="482" width="1" height="1" fill="#ffffff"/>
<rect x="745" y="483" width="1" height="1" fill="#ffffff"/>
<rect x="748" y="483" width="1" height="1" fill="#ffffff"/>
<rect x="745" y="484" width="1" height="1" fill="#ffffff"/>
<rect x="748" y="484" width="1" height="1" fill="#ffffff"/>
<rect x="746" y="485" width="2" height="1" fill="#ffffff"/>
<rect x="752" y="479" width="2" height="1" fill="#ffffff"/>
<rect x="751" y="480" width="1" height="1" fill="#ffffff"/>
<rect x="754" y="480" width="1" height="1" fill="#ffffff"/>
<rect x="751" y="481" width="1" height="1" fill="#ffffff"/>
<rect x="754" y="481" width="1" height="1" fill="#ffffff"/>
<rect x="751" y="482" width="1" height="1" fill="#ffffff"/>
<rect x="754" y="482" width="1" height="1" fill="#ffffff"/>
<rect x="751" y="483" width="1" height="1" fill="#ffffff"/>
<rect x="754" y="483" width="1" height="1" fill="#ffffff"/>
<rect x="751" y="484" width="1" height="1" fill="#ffffff"/>
<rect x="754" y="484" width="1" height="1" fill="#ffffff"/>
<rect x="752" y="485" width="2" height="1" fill="#ffffff"/>
<rect x="758" y="479" width="2" height="1" fill="#ffffff"/>
<rect x="757" y="480" width="1" height="1" fill="#ffffff"/>
<rect x="760" y="480" width="1" height="1" fill="#ffffff"/>
<rect x="757" y="481" width="1" height="1" fill="#ffffff"/>
<rect x="760" y="481" width="1" height="1" fill="#ffffff"/>
<rect x="757" y="482" width="1" height="1" fill="#ffffff"/>
<rect x="760" y="482" width="1" height="1" fill="#ffffff"/>
<rect x="757" y="483" width="1" height="1" fill="#ffffff"/>
<rect x="760" y="483" width="1" height="1" fill="#ffffff"/>
<rect x="757" y="484" width="1" height="1" fill="#ffffff"/>
<rect x="760" y="484" width="1" height="1" fill="#ffffff"/>
<rect x="758" y="485" width="2" height="1" fill="#ffffff"/>
<rect x="764" y="479" width="2" height="1" fill="#ffffff"/>
<rect x="763" y="480" width="1" height="1" fill="#ffffff"/>
<rect x="766" y="480" width="1" height="1" fill="#ffffff"/>
<rect x="763" y="481" width="1" height="1" fill="#ffffff"/>
<rect x="766" y="481" width="1" height="1" fill="#ffffff"/>
<rect x="763" y="482" width="1" height="1" fill="#ffffff"/>
<rect x="766" y="482" width="1" height="1" fill="#ffffff"/>
<rect x="763" y="483" width="1" height="1" fill="#ffffff"/>
<rect x="766" y="483" width="1" height="1" fill="#ffffff"/>
<rect x="763" y="484" width="1" height="1" fill="#ffffff"/>
<rect x="766" y="484" width="1" height="1" fill="#ffffff"/>
<rect x="764" y="485" width="2" height="1" fill="#ffffff"/>
<rect x="770" y="479" width="2" height="1" fill="#ffffff"/>
<rect x="769" y="480" width="1" height="1" fill="#ffffff"/>
<rect x="772" y="480" width="1" height="1" fill="#ffffff"/>
<rect x="769" y="481" width="1" height="1" fill="#ffffff"/>
<rect x="772" y="481" width="1" height="1" fill="#ffffff"/>
<rect x="769" y="482" width="1" height="1" fill="#ffffff"/>
<rect x="772" y="482" width="1" height="1" fill="#ffffff"/>
<rect x="769" y="483" width="1" height="1" fill="#ffffff"/>
<rect x="772" y="483" width="1" height="1" fill="#ffffff"/>
<rect x="769" y="484" width="1" height="1" fill="#ffffff"/>
<rect x="772" y="484" width="1" height="1" fill="#ffffff"/>
<rect x="770" y="485" width="2" height="1" fill="#ffffff"/>
<rect x="776" y="479" width="2" height="1" fill="#ffffff"/>
<rect x="775" y="480" width="1" height="1" fill="#ffffff"/>
<rect x="778" y="480" width="1" height="1" fill="#ffffff"/>
<rect x="775" y="481" width="1" height="1" fill="#ffffff"/>
<rect x="778" y="481" width="1" height="1" fill="#ffffff"/>
<rect x="775" y="482" width="1" height="1" fill="#ffffff"/>
<rect x="778" y="482" width="1" height="1" fill="#ffffff"/>
<rect x="775" y="483" width="1" height="1" fill="#ffffff"/>
<rect x="778" y="483" width="1" height="1" fill="#ffffff"/>
<rect x="775" y="484" width="1" height="1" fill="#ffffff"/>
<rect x="778" y="484" width="1" height="1" fill="#ffffff"/>
<rect x="776" y="485" width="2" height="1" fill="#ffffff"/>
<rect x="782" y="479" width="2" height="1" fill="#ffffff"/>
<rect x="781" y="480" width="1" height="1" fill="#ffffff"/>
<rect x="784" y="480" width="1" height="1" fill="#ffffff"/>
<rect x="781" y="481" width="1" height="1" fill="#ffffff"/>
<rect x="784" y="481" width="1" height="1" fill="#ffffff"/>
<rect x="781" y="482" width="1" height="1" fill="#ffffff"/>
<rect x="784" y="482" width="1" height="1" fill="#ffffff"/>
<rect x="781" y="483" width="1" height="1" fill="#ffffff"/>
<rect x="784" y="483" width="1" height="1" fill="#ffffff"/>
<rect x="781" y="484" width="1" height="1" fill="#ffffff"/>
<rect x="784" y="484" width="1" height="1" fill="#ffffff"/>
<rect x="782" y="485" width="2" height="1" fill="#ffffff"/>
<rect x="789" y="478" width="1" height="1" fill="#ffffff"/>
<rect x="789" y="479" width="1" height="1" fill="#ffffff"/>
<rect x="788" y="480" width="2" height="1" fill="#ffffff"/>
<rect x="787" y="481" width="1" height="1" fill="#ffffff"/>
<rect x="789" y="481" width="1" height="1" fill="#ffffff"/>
<rect x="786" y="482" width="1" height="1" fill="#ffffff"/>
<rect x="789" y="482" width="1" height="1" fill="#ffffff"/>
<rect x="786" y="483" width="5" height="1" fill="#ffffff"/>
<rect x="789" y="484" width="1" height="1" fill="#ffffff"/>
<rect x="789" y="485" width="1" height="1" fill="#ffffff"/>
<rect x="479" y="494" width="2" height="15" fill="#00ff00"/>
<rect x="484" y="494" width="11" height="1" fill="#00ff00"/>
<rect x="484" y="508" width="11" height="1" fill="#00ff00"/>
<rect x="480" y="501" width="1" height="1" fill="#00ff00"/>
<rect x="481" y="499" width="1" height="2" fill="#00ff00"/>
<rect x="481" y="502" width="1" height="2" fill="#00ff00"/>
<rect x="482" y="497" width="1" height="2" fill="#00ff00"/>
<rect x="482" y="504" width="1" height="2" fill="#00ff00"/>
<rect x="483" y="495" width="1" height="2" fill="#00ff00"/>
<rect x="483" y="506" width="1" height="2" fill="#00ff00"/>
<rect x="498" y="501" width="1" height="1" fill="#00ff00"/>
<rect x="497" y="499" width="1" height="2" fill="#00ff00"/>
<rect x="497" y="502" width="1" height="2" fill="#00ff00"/>
<rect x="496" y="497" width="1" height="2" fill="#00ff00"/>
<rect x="496" y="504" width="1" height="2" fill="#00ff00"/>
<rect x="495" y="495" width="1" height="2" fill="#00ff00"/>
<rect x="495" y="506" width="1" height="2" fill="#00ff00"/>
<rect x="502" y="494" width="52" height="1" fill="#00ff00"/>
<rect x="502" y="508" width="52" height="1" fill="#00ff00"/>
<rect x="498" y="501" width="1" height="1" fill="#00ff00"/>
<rect x="499" y="499" width="1" height="2" fill="#00ff00"/>
<rect x="499" y="502" width="1" height="2" fill="#00ff00"/>
<rect x="500" y="497" width="1" height="2" fill="#00ff00"/>
<rect x="500" y="504" width="1" height="2" fill="#00ff00"/>
<rect x="501" y="495" width="1" height="2" fill="#00ff00"/>
<rect x="501" y="506" width="1" height="2" fill="#00ff00"/>
<rect x="557" y="501" width="1" height="1" fill="#00ff00"/>
<rect x="556" y="499" width="1" height="2" fill="#00ff00"/>
<rect x="556" y="502" width="1" height="2" fill="#00ff00"/>
<rect x="555" y="497" width="1" height="2" fill="#00ff00"/>
<rect x="555" y="504" width="1" height="2" fill="#00ff00"/>
<rect x="554" y="495" width="1" height="2" fill="#00ff00"/>
<rect x="554" y="506" width="1" height="2" fill="#00ff00"/>
<rect x="561" y="494" width="181" height="1" fill="#00ff00"/>
<rect x="561" y="508" width="181" height="1" fill="#00ff00"/>
<rect x="557" y="501" width="1" height="1" fill="#00ff00"/>
<rect x="558" y="499" width="1" height="2" fill="#00ff00"/>
<rect x="558" y="502" width="1" height="2" fill="#00ff00"/>
<rect x="559" y="497" width="1" height="2" fill="#00ff00"/>
<rect x="559" y="504" width="1" height="2" fill="#00ff00"/>
<rect x="560" y="495" width="1" height="2" fill="#00ff00"/>
<rect x="560" y="506" width="1" height="2" fill="#00ff00"/>
<rect x="745" y="501" width="1" height="1" fill="#00ff00"/>
<rect x="744" y="499" width="1" height="2" fill="#00ff00"/>
<rect x="744" y="502" width="1" height="2" fill="#00ff00"/>
<rect x="743" y="497" width="1" height="2" fill="#00ff00"/>
<rect x="743" y="504" width="1" height="2" fill="#00ff00"/>
<rect x="742" y="495" width="1" height="2" fill="#00ff00"/>
<rect x="742" y="506" width="1" height="2" fill="#00ff00"/>
<rect x="749" y="494" width="23" height="1" fill="#00ff00"/>
<rect x="749" y="508" width="23" height="1" fill="#00ff00"/>
<rect x="745" y="501" width="1" height="1" fill="#00ff00"/>
<rect x="746" y="499" width="1" height="2" fill="#00ff00"/>
<rect x="746" y="502" width="1" height="2" fill="#00ff00"/>
<rect x="747" y="497" width="1" height="2" fill="#00ff00"/>
<rect x="747" y="504" width="1" height="2" fill="#00ff00"/>
<rect x="748" y="495" width="1" height="2" fill="#00ff00"/>
<rect x="748" y="506" width="1" height="2" fill="#00ff00"/>
<rect x="775" y="501" width="1" height="1" fill="#00ff00"/>
<rect x="774" y="499" width="1" height="2" fill="#00ff00"/>
<rect x="774" y="502" width="1" height="2" fill="#00ff00"/>
<rect x="773" y="497" width="1" height="2" fill="#00ff00"/>
<rect x="773" y="504" width="1" height="2" fill="#00ff00"/>
<rect x="772" y="495" width="1" height="2" fill="#00ff00"/>
<rect x="772" y="506" width="1" height="2" fill="#00ff00"/>
<rect x="779" y="494" width="34" height="1" fill="#00ff00"/>
<rect x="779" y="508" width="34" height="1" fill="#00ff00"/>
<rect x="775" y="501" width="1" height="1" fill="#00ff00"/>
<rect x="776" y="499" width="1" height="2" fill="#00ff00"/>
<rect x="776" y="502" width="1" height="2" fill="#00ff00"/>
<rect x="777" y="497" width="1" height="2" fill="#00ff00"/>
<rect x="777" y="504" width="1" height="2" fill="#00ff00"/>
<rect x="778" y="495" width="1" height="2" fill="#00ff00"/>
<rect x="778" y="506" width="1" height="2" fill="#00ff00"/>
<rect x="816" y="501" width="1" height="1" fill="#00ff00"/>
<rect x="815" y="499" width="1" height="2" fill="#00ff00"/>
<rect x="815" y="502" width="1" height="2" fill="#00ff00"/>
<rect x="814" y="497" width="1" height="2" fill="#00ff00"/>
<rect x="814" y="504" width="1" height="2" fill="#00ff00"/>
<rect x="813" y="495" width="1" height="2" fill="#00ff00"/>
<rect x="813" y="506" width="1" height="2" fill="#00ff00"/>
<rect x="820" y="494" width="243" height="1" fill="#00ff00"/>
<rect x="820" y="508" width="243" height="1" fill="#00ff00"/>
<rect x="816" y="501" width="1" height="1" fill="#00ff00"/>
<rect x="817" y="499" width="1" height="2" fill="#00ff00"/>
<rect x="817" y="502" width="1" height="2" fill="#00ff00"/>
<rect x="818" y="497" width="1" height="2" fill="#00ff00"/>
<rect x="818" y="504" width="1" height="2" fill="#00ff00"/>
<rect x="819" y="495" width="1" height="2" fill="#00ff00"/>
<rect x="819" y="506" width="1" height="2" fill="#00ff00"/>
<rect x="1066" y="501" width="1" height="1" fill="#00ff00"/>
<rect x="1065" y="499" width="1" height="2" fill="#00ff00"/>
<rect x="1065" y="502" width="1" height="2" fill="#00ff00"/>
<rect x="1064" y="497" width="1" height="2" fill="#00ff00"/>
<rect x="1064" y="504" width="1" height="2" fill="#00ff00"/>
<rect x="1063" y="495" width="1" height="2" fill="#00ff00"/>
<rect x="1063" y="506" width="1" height="2" fill="#00ff00"/>
<rect x="487" y="499" width="2" height="1" fill="#ffffff"/>
<rect x="486" y="500" width="1" height="1" fill="#ffffff"/>
<rect x="489" y="500" width="1" height="1" fill="#ffffff"/>
<rect x="486" y="501" width="1" height="1" fill="#ffffff"/>
<rect x="489" y="501" width="1" height="1" fill="#ffffff"/>
<rect x="486" y="502" width="1" height="1" fill="#ffffff"/>
<rect x="489" y="502" width="1" height="1" fill="#ffffff"/>
<rect x="486" y="503" width="1" height="1" fill="#ffffff"/>
<rect x="489" y="503" width="1" height="1" fill="#ffffff"/>
<rect x="486" y="504" width="1" height="1" fill="#ffffff"/>
<rect x="489" y="504" width="1" height="1" fill="#ffffff"/>
<rect x="487" y="505" width="2" height="1" fill="#ffffff"/>
<rect x="526" y="499" width="2" height="1" fill="#ffffff"/>
<rect x="525" y="500" width="1" height="1" fill="#ffffff"/>
<rect x="528" y="500" width="1" height="1" fill="#ffffff"/>
<rect x="525" y="501" width="1" height="1" fill="#ffffff"/>
<rect x="528" y="501" width="1" height="1" fill="#ffffff"/>
<rect x="526" y="502" width="3" height="1" fill="#ffffff"/>
<rect x="528" y="503" width="1" height="1" fill="#ffffff"/>
<rect x="528" y="504" width="1" height="1" fill="#ffffff"/>
<rect x="526" y="505" width="2" height="1" fill="#ffffff"/>
<rect x="649" y="499" width="2" height="1" fill="#ffffff"/>
<rect x="648" y="500" width="1" height="1" fill="#ffffff"/>
<rect x="651" y="500" width="1" height="1" fill="#ffffff"/>
<rect x="648" y="501" width="1" height="1" fill="#ffffff"/>
<rect x="651" y="501" width="1" height="1" fill="#ffffff"/>
<rect x="650" y="502" width="1" height="1" fill="#ffffff"/>
<rect x="649" y="503" width="1" height="1" fill="#ffffff"/>
<rect x="648" y="504" width="1" height="1" fill="#ffffff"/>
<rect x="648" y="505" width="4" height="1" fill="#ffffff"/>
<rect x="758" y="499" width="2" height="1" fill="#ffffff"/>
<rect x="757" y="500" width="1" height="1" fill="#ffffff"/>
<rect x="760" y="500" width="1" height="1" fill="#ffffff"/>
<rect x="757" y="501" width="1" height="1" fill="#ffffff"/>
<rect x="760" y="501" width="1" height="1" fill="#ffffff"/>
<rect x="757" y="502" width="1" height="1" fill="#ffffff"/>
<rect x="760" y="502" width="1" height="1" fill="#ffffff"/>
<rect x="757" y="503" width="1" height="1" fill="#ffffff"/>
<rect x="760" y="503" width="1" height="1" fill="#ffffff"/>
<rect x="757" y="504" width="1" height="1" fill="#ffffff"/>
<rect x="760" y="504" width="1" height="1" fill="#ffffff"/>
<rect x="758" y="505" width="2" height="1" fill="#ffffff"/>
<rect x="794" y="499" width="2" height="1" fill="#ffffff"/>
<rect x="793" y="500" width="1" height="1" fill="#ffffff"/>
<rect x="796" y="500" width="1" height="1" fill="#ffffff"/>
<rect x="793" y="501" width="1" height="1" fill="#ffffff"/>
<rect x="796" y="501" width="1" height="1" fill="#ffffff"/>
<rect x="794" y="502" width="2" height="1" fill="#ffffff"/>
<rect x="793" y="503" width="1" height="1" fill="#ffffff"/>
<rect x="796" y="503" width="1" height="1" fill="#ffffff"/>
<rect x="793" y="504" width="1" height="1" fill="#ffffff"/>
<rect x="796" y="504" width="1" height="1" fill="#ffffff"/>
<rect x="794" y="505" width="2" height="1" fill="#ffffff"/>
<rect x="939" y="499" width="1" height="1" fill="#ffffff"/>
<rect x="938" y="500" width="2" height="1" fill="#ffffff"/>
<rect x="939" y="501" width="1" height="1" fill="#ffffff"/>
<rect x="939" y="502" width="1" height="1" fill="#ffffff"/>
<rect x="939" y="503" width="1" height="1" fill="#ffffff"/>
<rect x="939" y="504" width="1" height="1" fill="#ffffff"/>
<rect x="938" y="505" width="3" height="1" fill="#ffffff"/>
<rect x="479" y="514" width="2" height="15" fill="#00ff00"/>
<rect x="484" y="514" width="11" height="1" fill="#00ff00"/>
<rect x="484" y="528" width="11" height="1" fill="#00ff00"/>
<rect x="480" y="521" width="1" height="1" fill="#00ff00"/>
<rect x="481" y="519" width="1" height="2" fill="#00ff00"/>
<rect x="481" y="522" width="1" height="2" fill="#00ff00"/>
<rect x="482" y="517" width="1" height="2" fill="#00ff00"/>
<rect x="482" y="524" width="1" height="2" fill="#00ff00"/>
<rect x="483" y="515" width="1" height="2" fill="#00ff00"/>
<rect x="483" y="526" width="1" height="2" fill="#00ff00"/>
<rect x="498" y="521" width="1" height="1" fill="#00ff00"/>
<rect x="497" y="519" width="1" height="2" fill="#00ff00"/>
<rect x="497" y="522" width="1" height="2" fill="#00ff00"/>
<rect x="496" y="517" width="1" height="2" fill="#00ff00"/>
<rect x="496" y="524" width="1" height="2" fill="#00ff00"/>
<rect x="495" y="515" width="1" height="2" fill="#00ff00"/>
<rect x="495" y="526" width="1" height="2" fill="#00ff00"/>
<rect x="502" y="514" width="46" height="1" fill="#00ff00"/>
<rect x="502" y="528" width="46" height="1" fill="#00ff00"/>
<rect x="498" y="521" width="1" height="1" fill="#00ff00"/>
<rect x="499" y="519" width="1" height="2" fill="#00ff00"/>
<rect x="499" y="522" width="1" height="2" fill="#00ff00"/>
<rect x="500" y="517" width="1" height="2" fill="#00ff00"/>
<rect x="500" y="524" width="1" height="2" fill="#00ff00"/>
<rect x="501" y="515" width="1" height="2" fill="#00ff00"/>
<rect x="501" y="526" width="1" height="2" fill="#00ff00"/>
<rect x="551" y="521" width="1" height="1" fill="#00ff00"/>
<rect x="550" y="519" width="1" height="2" fill="#00ff00"/>
<rect x="550" y="522" width="1" height="2" fill="#00ff00"/>
<rect x="549" y="517" width="1" height="2" fill="#00ff00"/>
<rect x="549" y="524" width="1" height="2" fill="#00ff00"/>
<rect x="548" y="515" width="1" height="2" fill="#00ff00"/>
<rect x="548" y="526" width="1" height="2" fill="#00ff00"/>
<rect x="551" y="514" width="7" height="15" fill="#00ff00"/>
<rect x="561" y="514" width="34" height="1" fill="#00ff00"/>
<rect x="561" y="528" width="34" height="1" fill="#00ff00"/>
<rect x="557" y="521" width="1" height="1" fill="#00ff00"/>
<rect x="558" y="519" width="1" height="2" fill="#00ff00"/>
<rect x="558" y="522" width="1" height="2" fill="#00ff00"/>
<rect x="559" y="517" width="1" height="2" fill="#00ff00"/>
<rect x="559" y="524" width="1" height="2" fill="#00ff00"/>
<rect x="560" y="515" width="1" height="2" fill="#00ff00"/>
<rect x="560" y="526" width="1" height="2" fill="#00ff00"/>
<rect x="598" y="521" width="1" height="1" fill="#00ff00"/>
<rect x="597" y="519" width="1" height="2" fill="#00ff00"/>
<rect x="597" y="522" width="1" height="2" fill="#00ff00"/>
<rect x="596" y="517" width="1" height="2" fill="#00ff00"/>
<rect x="596" y="524" width="1" height="2" fill="#00ff00"/>
<rect x="595" y="515" width="1" height="2" fill="#00ff00"/>
<rect x="595" y="526" width="1" height="2" fill="#00ff00"/>
<rect x="602" y="514" width="140" height="1" fill="#00ff00"/>
<rect x="602" y="528" width="140" height="1" fill="#00ff00"/>
<rect x="598" y="521" width="1" height="1" fill="#00ff00"/>
<rect x="599" y="519" width="1" height="2" fill="#00ff00"/>
<rect x="599" y="522" width="1" height="2" fill="#00ff00"/>
<rect x="600" y="517" width="1" height="2" fill="#00ff00"/>
<rect x="600" y="524" width="1" height="2" fill="#00ff00"/>
<rect x="601" y="515" width="1" height="2" fill="#00ff00"/>
<rect x="601" y="526" width="1" height="2" fill="#00ff00"/>
<rect x="745" y="521" width="1" height="1" fill="#00ff00"/>
<rect x="744" y="519" width="1" height="2" fill="#00ff00"/>
<rect x="744" y="522" width="1" height="2" fill="#00ff00"/>
<rect x="743" y="517" width="1" height="2" fill="#00ff00"/>
<rect x="743" y="524" width="1" height="2" fill="#00ff00"/>
<rect x="742" y="515" width="1" height="2" fill="#00ff00"/>
<rect x="742" y="526" width="1" height="2" fill="#00ff00"/>
<rect x="749" y="514" width="23" height="1" fill="#00ff00"/>
<rect x="749" y="528" width="23" height="1" fill="#00ff00"/>
<rect x="745" y="521" width="1" height="1" fill="#00ff00"/>
<rect x="746" y="519" width="1" height="2" fill="#00ff00"/>
<rect x="746" y="522" width="1" height="2" fill="#00ff00"/>
<rect x="747" y="517" width="1" height="2" fill="#00ff00"/>
<rect x="747" y="524" width="1" height="2" fill="#00ff00"/>
<rect x="748" y="515" width="1" height="2" fill="#00ff00"/>
<rect x="748" y="526" width="1" height="2" fill="#00ff00"/>
<rect x="775" y="521" width="1" height="1" fill="#00ff00"/>
<rect x="774" y="519" width="1" height="2" fill="#00ff00"/>
<rect x="774" y="522" width="1" height="2" fill="#00ff00"/>
<rect x="773" y="517" width="1" height="2" fill="#00ff00"/>
<rect x="773" y="524" width="1" height="2" fill="#00ff00"/>
<rect x="772" y="515" width="1" height="2" fill="#00ff00"/>
<rect x="772" y="526" width="1" height="2" fill="#00ff00"/>
<rect x="779" y="514" width="28" height="1" fill="#00ff00"/>
<rect x="779" y="528" width="28" height="1" fill="#00ff00"/>
<rect x="775" y="521" width="1" height="1" fill="#00ff00"/>
<rect x="776" y="519" width="1" height="2" fill="#00ff00"/>
<rect x="776" y="522" width="1" height="2" fill="#00ff00"/>
<rect x="777" y="517" width="1" height="2" fill="#00ff00"/>
<rect x="777" y="524" width="1" height="2" fill="#00ff00"/>
<rect x="778" y="515" width="1" height="2" fill="#00ff00"/>
<rect x="778" y="526" width="1" height="2" fill="#00ff00"/>
<rect x="810" y="521" width="1" height="1" fill="#00ff00"/>
<rect x="809" y="519" width="1" height="2" fill="#00ff00"/>
<rect x="809" y="522" width="1" height="2" fill="#00ff00"/>
<rect x="808" y="517" width="1" height="2" fill="#00ff00"/>
<rect x="808" y="524" width="1" height="2" fill="#00ff00"/>
<rect x="807" y="515" width="1" height="2" fill="#00ff00"/>
<rect x="807" y="526" width="1" height="2" fill="#00ff00"/>
<rect x="810" y="521" width="1" height="1" fill="#00ff00"/>
<rect x="811" y="519" width="1" height="2" fill="#00ff00"/>
<rect x="811" y="522" width="1" height="2" fill="#00ff00"/>
<rect x="812" y="517" width="1" height="2" fill="#00ff00"/>
<rect x="812" y="524" width="1" height="2" fill="#00ff00"/>
<rect x="813" y="515" width="1" height="2" fill="#00ff00"/>
<rect x="813" y="526" width="1" height="2" fill="#00ff00"/>
<rect x="816" y="521" width="1" height="1" fill="#00ff00"/>
<rect x="815" y="519" width="1" height="2" fill="#00ff00"/>
<rect x="815" y="522" width="1" height="2" fill="#00ff00"/>
<rect x="814" y="517" width="1" height="2" fill="#00ff00"/>
<rect x="814" y="524" width="1" height="2" fill="#00ff00"/>
<rect x="813" y="515" width="1" height="2" fill="#00ff00"/>
<rect x="813" y="526" width="1" height="2" fill="#00ff00"/>
<rect x="820" y="514" width="34" height="1" fill="#00ff00"/>
<rect x="820" y="528" width="34" height="1" fill="#00ff00"/>
<rect x="816" y="521" width="1" height="1" fill="#00ff00"/>
<rect x="817" y="519" width="1" height="2" fill="#00ff00"/>
<rect x="817" y="522" width="1" height="2" fill="#00ff00"/>
<rect x="818" y="517" width="1" height="2" fill="#00ff00"/>
<rect x="818" y="524" width="1" height="2" fill="#00ff00"/>
<rect x="819" y="515" width="1" height="2" fill="#00ff00"/>
<rect x="819" y="526" width="1" height="2" fill="#00ff00"/>
<rect x="857" y="521" width="1" height="1" fill="#00ff00"/>
<rect x="856" y="519" width="1" height="2" fill="#00ff00"/>
<rect x="856" y="522" width="1" height="2" fill="#00ff00"/>
<rect x="855" y="517" width="1" height="2" fill="#00ff00"/>
<rect x="855" y="524" width="1" height="2" fill="#00ff00"/>
<rect x="854" y="515" width="1" height="2" fill="#00ff00"/>
<rect x="854" y="526" width="1" height="2" fill="#00ff00"/>
<rect x="861" y="514" width="202" height="1" fill="#00ff00"/>
<rect x="861" y="528" width="202" height="1" fill="#00ff00"/>
<rect x="857" y="521" width="1" height="1" fill="#00ff00"/>
<rect x="858" y="519" width="1" height="2" fill="#00ff00"/>
<rect x="858" y="522" width="1" height="2" fill="#00ff00"/>
<rect x="859" y="517" width="1" height="2" fill="#00ff00"/>
<rect x="859" y="524" width="1" height="2" fill="#00ff00"/>
<rect x="860" y="515" width="1" height="2" fill="#00ff00"/>
<rect x="860" y="526" width="1" height="2" fill="#00ff00"/>
<rect x="1066" y="521" width="1" height="1" fill="#00ff00"/>
<rect x="1065" y="519" width="1" height="2" fill="#00ff00"/>
<rect x="1065" y="522" width="1" height="2" fill="#00ff00"/>
<rect x="1064" y="517" width="1" height="2" fill="#00ff00"/>
<rect x="1064" y="524" width="1" height="2" fill="#00ff00"/>
<rect x="1063" y="515" width="1" height="2" fill="#00ff00"/>
<rect x="1063" y="526" width="1" height="2" fill="#00ff00"/>
<rect x="487" y="519" width="2" height="1" fill="#ffffff"/>
<rect x="486" y="520" width="1" height="1" fill="#ffffff"/>
<rect x="489" y="520" width="1" height="1" fill="#ffffff"/>
<rect x="486" y="521" width="1" height="1" fill="#ffffff"/>
<rect x="489" y="521" width="1" height="1" fill="#ffffff"/>
<rect x="486" y="522" width="1" height="1" fill="#ffffff"/>
<rect x="489" y="522" width="1" height="1" fill="#ffffff"/>
<rect x="486" y="523" width="1" height="1" fill="#ffffff"/>
<rect x="489" y="523" width="1" height="1" fill="#ffffff"/>
<rect x="486" y="524" width="1" height="1" fill="#ffffff"/>
<rect x="489" y="524" width="1" height="1" fill="#ffffff"/>
<rect x="487" y="525" width="2" height="1" fill="#ffffff"/>
<rect x="523" y="519" width="2" height="1" fill="#ffffff"/>
<rect x="522" y="520" width="1" height="1" fill="#ffffff"/>
<rect x="525" y="520" width="1" height="1" fill="#ffffff"/>
<rect x="525" y="521" width="1" height="1" fill="#ffffff"/>
<rect x="523" y="522" width="2" height="1" fill="#ffffff"/>
<rect x="525" y="523" width="1" height="1" fill="#ffffff"/>
<rect x="522" y="524" width="1" height="1" fill="#ffffff"/>
<rect x="525" y="524" width="1" height="1" fill="#ffffff"/>
<rect x="523" y="525" width="2" height="1" fill="#ffffff"/>
<rect x="576" y="519" width="2" height="1" fill="#ffffff"/>
<rect x="575" y="520" width="1" height="1" fill="#ffffff"/>
<rect x="578" y="520" width="1" height="1" fill="#ffffff"/>
<rect x="575" y="521" width="1" height="1" fill="#ffffff"/>
<rect x="578" y="521" width="1" height="1" fill="#ffffff"/>
<rect x="576" y="522" width="3" height="1" fill="#ffffff"/>
<rect x="578" y="523" width="1" height="1" fill="#ffffff"/>
<rect x="578" y="524" width="1" height="1" fill="#ffffff"/>
<rect x="576" y="525" width="2" height="1" fill="#ffffff"/>
<rect x="670" y="519" width="2" height="1" fill="#ffffff"/>
<rect x="669" y="520" width="1" height="1" fill="#ffffff"/>
<rect x="672" y="520" width="1" height="1" fill="#ffffff"/>
<rect x="672" y="521" width="1" height="1" fill="#ffffff"/>
<rect x="670" y="522" width="2" height="1" fill="#ffffff"/>
<rect x="672" y="523" width="1" height="1" fill="#ffffff"/>
<rect x="669" y="524" width="1" height="1" fill="#ffffff"/>
<rect x="672" y="524" width="1" height="1" fill="#ffffff"/>
<rect x="670" y="525" width="2" height="1" fill="#ffffff"/>
<rect x="758" y="519" width="2" height="1" fill="#ffffff"/>
<rect x="757" y="520" width="1" height="1" fill="#ffffff"/>
<rect x="760" y="520" width="1" height="1" fill="#ffffff"/>
<rect x="757" y="521" width="1" height="1" fill="#ffffff"/>
<rect x="760" y="521" width="1" height="1" fill="#ffffff"/>
<rect x="757" y="522" width="1" height="1" fill="#ffffff"/>
<rect x="760" y="522" width="1" height="1" fill="#ffffff"/>
<rect x="757" y="523" width="1" height="1" fill="#ffffff"/>
<rect x="760" y="523" width="1" height="1" fill="#ffffff"/>
<rect x="757" y="524" width="1" height="1" fill="#ffffff"/>
<rect x="760" y="524" width="1" height="1" fill="#ffffff"/>
<rect x="758" y="525" width="2" height="1" fill="#ffffff"/>
<rect x="790" y="519" width="4" height="1" fill="#ffffff"/>
<rect x="790" y="520" width="1" height="1" fill="#ffffff"/>
<rect x="790" y="521" width="3" height="1" fill="#ffffff"/>
<rect x="793" y="522" width="1" height="1" fill="#ffffff"/>
<rect x="793" y="523" width="1" height="1" fill="#ffffff"/>
<rect x="790" y="524" width="1" height="1" fill="#ffffff"/>
<rect x="793" y="524" width="1" height="1" fill="#ffffff"/>
<rect x="791" y="525" width="2" height="1" fill="#ffffff"/>
<rect x="835" y="519" width="2" height="1" fill="#ffffff"/>
<rect x="834" y="520" width="1" height="1" fill="#ffffff"/>
<rect x="837" y="520" width="1" height="1" fill="#ffffff"/>
<rect x="834" y="521" width="1" height="1" fill="#ffffff"/>
<rect x="837" y="521" width="1" height="1" fill="#ffffff"/>
<rect x="835" y="522" width="2" height="1" fill="#ffffff"/>
<rect x="834" y="523" width="1" height="1" fill="#ffffff"/>
<rect x="837" y="523" width="1" height="1" fill="#ffffff"/>
<rect x="834" y="524" width="1" height="1" fill="#ffffff"/>
<rect x="837" y="524" width="1" height="1" fill="#ffffff"/>
<rect x="835" y="525" width="2" height="1" fill="#ffffff"/>
<rect x="960" y="519" width="2" height="1" fill="#ffffff"/>
<rect x="959" y="520" width="1" height="1" fill="#ffffff"/>
<rect x="962" y="520" width="1" height="1" fill="#ffffff"/>
<rect x="959" y="521" width="1" height="1" fill="#ffffff"/>
<rect x="962" y="521" width="1" height="1" fill="#ffffff"/>
<rect x="961" y="522" width="1" height="1" fill="#ffffff"/>
<rect x="960" y="523" width="1" height="1" fill="#ffffff"/>
<rect x="959" y="524" width="1" height="1" fill="#ffffff"/>
<rect x="959" y="525" width="4" height="1" fill="#ffffff"/>
<rect x="479" y="534" width="2" height="15" fill="#00ff00"/>
<rect x="484" y="534" width="11" height="1" fill="#00ff00"/>
<rect x="484" y="548" width="11" height="1" fill="#00ff00"/>
<rect x="480" y="541" width="1" height="1" fill="#00ff00"/>
<rect x="481" y="539" width="1" height="2" fill="#00ff00"/>
<rect x="481" y="542" width="1" height="2" fill="#00ff00"/>
<rect x="482" y="537" width="1" height="2" fill="#00ff00"/>
<rect x="482" y="544" width="1" height="2" fill="#00ff00"/>
<rect x="483" y="535" width="1" height="2" fill="#00ff00"/>
<rect x="483" y="546" width="1" height="2" fill="#00ff00"/>
<rect x="498" y="541" width="1" height="1" fill="#00ff00"/>
<rect x="497" y="539" width="1" height="2" fill="#00ff00"/>
<rect x="497" y="542" width="1" height="2" fill="#00ff00"/>
<rect x="496" y="537" width="1" height="2" fill="#00ff00"/>
<rect x="496" y="544" width="1" height="2" fill="#00ff00"/>
<rect x="495" y="535" width="1" height="2" fill="#00ff00"/>
<rect x="495" y="546" width="1" height="2" fill="#00ff00"/>
<rect x="502" y="534" width="40" height="1" fill="#00ff00"/>
<rect x="502" y="548" width="40" height="1" fill="#00ff00"/>
<rect x="498" y="541" width="1" height="1" fill="#00ff00"/>
<rect x="499" y="539" width="1" height="2" fill="#00ff00"/>
<rect x="499" y="542" width="1" height="2" fill="#00ff00"/>
<rect x="500" y="537" width="1" height="2" fill="#00ff00"/>
<rect x="500" y="544" width="1" height="2" fill="#00ff00"/>
<rect x="501" y="535" width="1" height="2" fill="#00ff00"/>
<rect x="501" y="546" width="1" height="2" fill="#00ff00"/>
<rect x="545" y="541" width="1" height="1" fill="#00ff00"/>
<rect x="544" y="539" width="1" height="2" fill="#00ff00"/>
<rect x="544" y="542" width="1" height="2" fill="#00ff00"/>
<rect x="543" y="537" width="1" height="2" fill="#00ff00"/>
<rect x="543" y="544" width="1" height="2" fill="#00ff00"/>
<rect x="542" y="535" width="1" height="2" fill="#00ff00"/>
<rect x="542" y="546" width="1" height="2" fill="#00ff00"/>
<rect x="545" y="541" width="1" height="1" fill="#00ff00"/>
<rect x="546" y="539" width="1" height="2" fill="#00ff00"/>
<rect x="546" y="542" width="1" height="2" fill="#00ff00"/>
<rect x="547" y="537" width="1" height="2" fill="#00ff00"/>
<rect x="547" y="544" width="1" height="2" fill="#00ff00"/>
<rect x="548" y="535" width="1" height="2" fill="#00ff00"/>
<rect x="548" y="546" width="1" height="2" fill="#00ff00"/>
<rect x="551" y="541" width="1" height="1" fill="#00ff00"/>
<rect x="550" y="539" width="1" height="2" fill="#00ff00"/>
<rect x="550" y="542" width="1" height="2" fill="#00ff00"/>
<rect x="549" y="537" width="1" height="2" fill="#00ff00"/>
<rect x="549" y="544" width="1" height="2" fill="#00ff00"/>
<rect x="548" y="535" width="1" height="2" fill="#00ff00"/>
<rect x="548" y="546" width="1" height="2" fill="#00ff00"/>
<rect x="555" y="534" width="40" height="1" fill="#00ff00"/>
<rect x="555" y="548" width="40" height="1" fill="#00ff00"/>
<rect x="551" y="541" width="1" height="1" fill="#00ff00"/>
<rect x="552" y="539" width="1" height="2" fill="#00ff00"/>
<rect x="552" y="542" width="1" height="2" fill="#00ff00"/>
<rect x="553" y="537" width="1" height="2" fill="#00ff00"/>
<rect x="553" y="544" width="1" height="2" fill="#00ff00"/>
<rect x="554" y="535" width="1" height="2" fill="#00ff00"/>
<rect x="554" y="546" width="1" height="2" fill="#00ff00"/>
<rect x="598" y="541" width="1" height="1" fill="#00ff00"/>
<rect x="597" y="539" width="1" height="2" fill="#00ff00"/>
<rect x="597" y="542" width="1" height="2" fill="#00ff00"/>
<rect x="596" y="537" width="1" height="2" fill="#00ff00"/>
<rect x="596" y="544" width="1" height="2" fill="#00ff00"/>
<rect x="595" y="535" width="1" height="2" fill="#00ff00"/>
<rect x="595" y="546" width="1" height="2" fill="#00ff00"/>
<rect x="602" y="534" width="28" height="1" fill="#00ff00"/>
<rect x="602" y="548" width="28" height="1" fill="#00ff00"/>
<rect x="598" y="541" width="1" height="1" fill="#00ff00"/>
<rect x="599" y="539" width="1" height="2" fill="#00ff00"/>
<rect x="599" y="542" width="1" height="2" fill="#00ff00"/>
<rect x="600" y="537" width="1" height="2" fill="#00ff00"/>
<rect x="600" y="544" width="1" height="2" fill="#00ff00"/>
<rect x="601" y="535" width="1" height="2" fill="#00ff00"/>
<rect x="601" y="546" width="1" height="2" fill="#00ff00"/>
<rect x="633" y="541" width="1" height="1" fill="#00ff00"/>
<rect x="632" y="539" width="1" height="2" fill="#00ff00"/>
<rect x="632" y="542" width="1" height="2" fill="#00ff00"/>
<rect x="631" y="537" width="1" height="2" fill="#00ff00"/>
<rect x="631" y="544" width="1" height="2" fill="#00ff00"/>
<rect x="630" y="535" width="1" height="2" fill="#00ff00"/>
<rect x="630" y="546" width="1" height="2" fill="#00ff00"/>
<rect x="637" y="534" width="105" height="1" fill="#00ff00"/>
<rect x="637" y="548" width="105" height="1" fill="#00ff00"/>
<rect x="633" y="541" width="1" height="1" fill="#00ff00"/>
<rect x="634" y="539" width="1" height="2" fill="#00ff00"/>
<rect x="634" y="542" width="1" height="2" fill="#00ff00"/>
<rect x="635" y="537" width="1" height="2" fill="#00ff00"/>
<rect x="635" y="544" width="1" height="2" fill="#00ff00"/>
<rect x="636" y="535" width="1" height="2" fill="#00ff00"/>
<rect x="636" y="546" width="1" height="2" fill="#00ff00"/>
<rect x="745" y="541" width="1" height="1" fill="#00ff00"/>
<rect x="744" y="539" width="1" height="2" fill="#00ff00"/>
<rect x="744" y="542" width="1" height="2" fill="#00ff00"/>
<rect x="743" y="537" width="1" height="2" fill="#00ff00"/>
<rect x="743" y="544" width="1" height="2" fill="#00ff00"/>
<rect x="742" y="535" width="1" height="2" fill="#00ff00"/>
<rect x="742" y="546" width="1" height="2" fill="#00ff00"/>
<rect x="749" y="534" width="23" height="1" fill="#00ff00"/>
<rect x="749" y="548" width="23" height="1" fill="#00ff00"/>
<rect x="745" y="541" width="1" height="1" fill="#00ff00"/>
<rect x="746" y="539" width="1" height="2" fill="#00ff00"/>
<rect x="746" y="542" width="1" height="2" fill="#00ff00"/>
<rect x="747" y="537" width="1" height="2" fill="#00ff00"/>
<rect x="747" y="544" width="1" height="2" fill="#00ff00"/>
<rect x="748" y="535" width="1" height="2" fill="#00ff00"/>
<rect x="748" y="546" width="1" height="2" fill="#00ff00"/>
<rect x="775" y="541" width="1" height="1" fill="#00ff00"/>
<rect x="774" y="539" width="1" height="2" fill="#00ff00"/>
<rect x="774" y="542" width="1" height="2" fill="#00ff00"/>
<rect x="773" y="537" width="1" height="2" fill="#00ff00"/>
<rect x="773" y="544" width="1" height="2" fill="#00ff00"/>
<rect x="772" y="535" width="1" height="2" fill="#00ff00"/>
<rect x="772" y="546" width="1" height="2" fill="#00ff00"/>
<rect x="779" y="534" width="22" height="1" fill="#00ff00"/>
<rect x="779" y="548" width="22" height="1" fill="#00ff00"/>
<rect x="775" y="541" width="1" height="1" fill="#00ff00"/>
<rect x="776" y="539" width="1" height="2" fill="#00ff00"/>
<rect x="776" y="542" width="1" height="2" fill="#00ff00"/>
<rect x="777" y="537" width="1" height="2" fill="#00ff00"/>
<rect x="777" y="544" width="1" height="2" fill="#00ff00"/>
<rect x="778" y="535" width="1" height="2" fill="#00ff00"/>
<rect x="778" y="546" width="1" height="2" fill="#00ff00"/>
<rect x="804" y="541" width="1" height="1" fill="#00ff00"/>
<rect x="803" y="539" width="1" height="2" fill="#00ff00"/>
<rect x="803" y="542" width="1" height="2" fill="#00ff00"/>
<rect x="802" y="537" width="1" height="2" fill="#00ff00"/>
<rect x="802" y="544" width="1" height="2" fill="#00ff00"/>
<rect x="801" y="535" width="1" height="2" fill="#00ff00"/>
<rect x="801" y="546" width="1" height="2" fill="#00ff00"/>
<rect x="804" y="534" width="7" height="15" fill="#00ff00"/>
<rect x="814" y="534" width="34" height="1" fill="#00ff00"/>
<rect x="814" y="548" width="34" height="1" fill="#00ff00"/>
<rect x="810" y="541" width="1" height="1" fill="#00ff00"/>
<rect x="811" y="539" width="1" height="2" fill="#00ff00"/>
<rect x="811" y="542" width="1" height="2" fill="#00ff00"/>
<rect x="812" y="537" width="1" height="2" fill="#00ff00"/>
<rect x="812" y="544" width="1" height="2" fill="#00ff00"/>
<rect x="813" y="535" width="1" height="2" fill="#00ff00"/>
<rect x="813" y="546" width="1" height="2" fill="#00ff00"/>
<rect x="851" y="541" width="1" height="1" fill="#00ff00"/>
<rect x="850" y="539" width="1" height="2" fill="#00ff00"/>
<rect x="850" y="542" width="1" height="2" fill="#00ff00"/>
<rect x="849" y="537" width="1" height="2" fill="#00ff00"/>
<rect x="849" y="544" width="1" height="2" fill="#00ff00"/>
<rect x="848" y="535" width="1" height="2" fill="#00ff00"/>
<rect x="848" y="546" width="1" height="2" fill="#00ff00"/>
<rect x="851" y="534" width="7" height="15" fill="#00ff00"/>
<rect x="861" y="534" width="28" height="1" fill="#00ff00"/>
<rect x="861" y="548" width="28" height="1" fill="#00ff00"/>
<rect x="857" y="541" width="1" height="1" fill="#00ff00"/>
<rect x="858" y="539" width="1" height="2" fill="#00ff00"/>
<rect x="858" y="542" width="1" height="2" fill="#00ff00"/>
<rect x="859" y="537" width="1" height="2" fill="#00ff00"/>
<rect x="859" y="544" width="1" height="2" fill="#00ff00"/>
<rect x="860" y="535" width="1" height="2" fill="#00ff00"/>
<rect x="860" y="546" width="1" height="2" fill="#00ff00"/>
<rect x="892" y="541" width="1" height="1" fill="#00ff00"/>
<rect x="891" y="539" width="1" height="2" fill="#00ff00"/>
<rect x="891" y="542" width="1" height="2" fill="#00ff00"/>
<rect x="890" y="537" width="1" height="2" fill="#00ff00"/>
<rect x="890" y="544" width="1" height="2" fill="#00ff00"/>
<rect x="889" y="535" width="1" height="2" fill="#00ff00"/>
<rect x="889" y="546" width="1" height="2" fill="#00ff00"/>
<rect x="896" y="534" width="167" height="1" fill="#00ff00"/>
<rect x="896" y="548" width="167" height="1" fill="#00ff00"/>
<rect x="892" y="541" width="1" height="1" fill="#00ff00"/>
<rect x="893" y="539" width="1" height="2" fill="#00ff00"/>
<rect x="893" y="542" width="1" height="2" fill="#00ff00"/>
<rect x="894" y="537" width="1" height="2" fill="#00ff00"/>
<rect x="894" y="544" width="1" height="2" fill="#00ff00"/>
<rect x="895" y="535" width="1" height="2" fill="#00ff00"/>
<rect x="895" y="546" width="1" height="2" fill="#00ff00"/>
<rect x="1066" y="541" width="1" height="1" fill="#00ff00"/>
<rect x="1065" y="539" width="1" height="2" fill="#00ff00"/>
<rect x="1065" y="542" width="1" height="2" fill="#00ff00"/>
<rect x="1064" y="537" width="1" height="2" fill="#00ff00"/>
<rect x="1064" y="544" width="1" height="2" fill="#00ff00"/>
<rect x="1063" y="535" width="1" height="2" fill="#00ff00"/>
<rect x="1063" y="546" width="1" height="2" fill="#00ff00"/>
<rect x="487" y="539" width="2" height="1" fill="#ffffff"/>
<rect x="486" y="540" width="1" height="1" fill="#ffffff"/>
<rect x="489" y="540" width="1" height="1" fill="#ffffff"/>
<rect x="486" y="541" width="1" height="1" fill="#ffffff"/>
<rect x="489" y="541" width="1" height="1" fill="#ffffff"/>
<rect x="486" y="542" width="1" height="1" fill="#ffffff"/>
<rect x="489" y="542" width="1" height="1" fill="#ffffff"/>
<rect x="486" y="543" width="1" height="1" fill="#ffffff"/>
<rect x="489" y="543" width="1" height="1" fill="#ffffff"/>
<rect x="486" y="544" width="1" height="1" fill="#ffffff"/>
<rect x="489" y="544" width="1" height="1" fill="#ffffff"/>
<rect x="487" y="545" width="2" height="1" fill="#ffffff"/>
<rect x="520" y="539" width="2" height="1" fill="#ffffff"/>
<rect x="519" y="540" width="1" height="1" fill="#ffffff"/>
<rect x="522" y="540" width="1" height="1" fill="#ffffff"/>
<rect x="519" y="541" width="1" height="1" fill="#ffffff"/>
<rect x="522" y="541" width="1" height="1" fill="#ffffff"/>
<rect x="520" y="542" width="2" height="1" fill="#ffffff"/>
<rect x="519" y="543" width="1" height="1" fill="#ffffff"/>
<rect x="522" y="543" width="1" height="1" fill="#ffffff"/>
<rect x="519" y="544" width="1" height="1" fill="#ffffff"/>
<rect x="522" y="544" width="1" height="1" fill="#ffffff"/>
<rect x="520" y="545" width="2" height="1" fill="#ffffff"/>
<rect x="573" y="539" width="2" height="1" fill="#ffffff"/>
<rect x="572" y="540" width="1" height="1" fill="#ffffff"/>
<rect x="575" y="540" width="1" height="1" fill="#ffffff"/>
<rect x="575" y="541" width="1" height="1" fill="#ffffff"/>
<rect x="573" y="542" width="2" height="1" fill="#ffffff"/>
<rect x="575" y="543" width="1" height="1" fill="#ffffff"/>
<rect x="572" y="544" width="1" height="1" fill="#ffffff"/>
<rect x="575" y="544" width="1" height="1" fill="#ffffff"/>
<rect x="573" y="545" width="2" height="1" fill="#ffffff"/>
<rect x="614" y="539" width="2" height="1" fill="#ffffff"/>
<rect x="613" y="540" width="1" height="1" fill="#ffffff"/>
<rect x="616" y="540" width="1" height="1" fill="#ffffff"/>
<rect x="613" y="541" width="1" height="1" fill="#ffffff"/>
<rect x="616" y="541" width="1" height="1" fill="#ffffff"/>
<rect x="614" y="542" width="3" height="1" fill="#ffffff"/>
<rect x="616" y="543" width="1" height="1" fill="#ffffff"/>
<rect x="616" y="544" width="1" height="1" fill="#ffffff"/>
<rect x="614" y="545" width="2" height="1" fill="#ffffff"/>
<rect x="688" y="538" width="1" height="1" fill="#ffffff"/>
<rect x="688" y="539" width="1" height="1" fill="#ffffff"/>
<rect x="687" y="540" width="2" height="1" fill="#ffffff"/>
<rect x="686" y="541" width="1" height="1" fill="#ffffff"/>
<rect x="688" y="541" width="1" height="1" fill="#ffffff"/>
<rect x="685" y="542" width="1" height="1" fill="#ffffff"/>
<rect x="688" y="542" width="1" height="1" fill="#ffffff"/>
<rect x="685" y="543" width="5" height="1" fill="#ffffff"/>
<rect x="688" y="544" width="1" height="1" fill="#ffffff"/>
<rect x="688" y="545" width="1" height="1" fill="#ffffff"/>
<rect x="758" y="539" width="2" height="1" fill="#ffffff"/>
<rect x="757" y="540" width="1" height="1" fill="#ffffff"/>
<rect x="760" y="540" width="1" height="1" fill="#ffffff"/>
<rect x="757" y="541" width="1" height="1" fill="#ffffff"/>
<rect x="760" y="541" width="1" height="1" fill="#ffffff"/>
<rect x="757" y="542" width="1" height="1" fill="#ffffff"/>
<rect x="760" y="542" width="1" height="1" fill="#ffffff"/>
<rect x="757" y="543" width="1" height="1" fill="#ffffff"/>
<rect x="760" y="543" width="1" height="1" fill="#ffffff"/>
<rect x="757" y="544" width="1" height="1" fill="#ffffff"/>
<rect x="760" y="544" width="1" height="1" fill="#ffffff"/>
<rect x="758" y="545" width="2" height="1" fill="#ffffff"/>
<rect x="787" y="539" width="3" height="1" fill="#ffffff"/>
<rect x="786" y="540" width="2" height="1" fill="#ffffff"/>
<rect x="786" y="541" width="1" height="1" fill="#ffffff"/>
<rect x="786" y="542" width="4" height="1" fill="#ffffff"/>
<rect x="786" y="543" width="1" height="1" fill="#ffffff"/>
<rect x="790" y="543" width="1" height="1" fill="#ffffff"/>
<rect x="786" y="544" width="1" height="1" fill="#ffffff"/>
<rect x="790" y="544" width="1" height="1" fill="#ffffff"/>
<rect x="787" y="545" width="3" height="1" fill="#ffffff"/>
<rect x="828" y="539" width="4" height="1" fill="#ffffff"/>
<rect x="828" y="540" width="1" height="1" fill="#ffffff"/>
<rect x="828" y="541" width="3" height="1" fill="#ffffff"/>
<rect x="831" y="542" width="1" height="1" fill="#ffffff"/>
<rect x="831" y="543" width="1" height="1" fill="#ffffff"/>
<rect x="828" y="544" width="1" height="1" fill="#ffffff"/>
<rect x="831" y="544" width="1" height="1" fill="#ffffff"/>
<rect x="829" y="545" width="2" height="1" fill="#ffffff"/>
<rect x="873" y="539" width="2" height="1" fill="#ffffff"/>
<rect x="872" y="540" width="1" height="1" fill="#ffffff"/>
<rect x="875" y="540" width="1" height="1" fill="#ffffff"/>
<rect x="872" y="541" width="1" height="1" fill="#ffffff"/>
<rect x="875" y="541" width="1" height="1" fill="#ffffff"/>
<rect x="873" y="542" width="2" height="1" fill="#ffffff"/>
<rect x="872" y="543" width="1" height="1" fill="#ffffff"/>
<rect x="875" y="543" width="1" height="1" fill="#ffffff"/>
<rect x="872" y="544" width="1" height="1" fill="#ffffff"/>
<rect x="875" y="544" width="1" height="1" fill="#ffffff"/>
<rect x="873" y="545" width="2" height="1" fill="#ffffff"/>
<rect x="977" y="539" width="2" height="1" fill="#ffffff"/>
<rect x="976" y="540" width="1" height="1" fill="#ffffff"/>
<rect x="979" y="540" width="1" height="1" fill="#ffffff"/>
<rect x="979" y="541" width="1" height="1" fill="#ffffff"/>
<rect x="977" y="542" width="2" height="1" fill="#ffffff"/>
<rect x="979" y="543" width="1" height="1" fill="#ffffff"/>
<rect x="976" y="544" width="1" height="1" fill="#ffffff"/>
<rect x="979" y="544" width="1" height="1" fill="#ffffff"/>
<rect x="977" y="545" width="2" height="1" fill="#ffffff"/>
<rect x="479" y="554" width="2" height="15" fill="#00ff00"/>
<rect x="484" y="554" width="11" height="1" fill="#00ff00"/>
<rect x="484" y="568" width="11" height="1" fill="#00ff00"/>
<rect x="480" y="561" width="1" height="1" fill="#00ff00"/>
<rect x="481" y="559" width="1" height="2" fill="#00ff00"/>
<rect x="481" y="562" width="1" height="2" fill="#00ff00"/>
<rect x="482" y="557" width="1" height="2" fill="#00ff00"/>
<rect x="482" y="564" width="1" height="2" fill="#00ff00"/>
<rect x="483" y="555" width="1" height="2" fill="#00ff00"/>
<rect x="483" y="566" width="1" height="2" fill="#00ff00"/>
<rect x="498" y="561" width="1" height="1" fill="#00ff00"/>
<rect x="497" y="559" width="1" height="2" fill="#00ff00"/>
<rect x="497" y="562" width="1" height="2" fill="#00ff00"/>
<rect x="496" y="557" width="1" height="2" fill="#00ff00"/>
<rect x="496" y="564" width="1" height="2" fill="#00ff00"/>
<rect x="495" y="555" width="1" height="2" fill="#00ff00"/>
<rect x="495" y="566" width="1" height="2" fill="#00ff00"/>
<rect x="502" y="554" width="34" height="1" fill="#00ff00"/>
<rect x="502" y="568" width="34" height="1" fill="#00ff00"/>
<rect x="498" y="561" width="1" height="1" fill="#00ff00"/>
<rect x="499" y="559" width="1" height="2" fill="#00ff00"/>
<rect x="499" y="562" width="1" height="2" fill="#00ff00"/>
<rect x="500" y="557" width="1" height="2" fill="#00ff00"/>
<rect x="500" y="564" width="1" height="2" fill="#00ff00"/>
<rect x="501" y="555" width="1" height="2" fill="#00ff00"/>
<rect x="501" y="566" width="1" height="2" fill="#00ff00"/>
<rect x="539" y="561" width="1" height="1" fill="#00ff00"/>
<rect x="538" y="559" width="1" height="2" fill="#00ff00"/>
<rect x="538" y="562" width="1" height="2" fill="#00ff00"/>
<rect x="537" y="557" width="1" height="2" fill="#00ff00"/>
<rect x="537" y="564" width="1" height="2" fill="#00ff00"/>
<rect x="536" y="555" width="1" height="2" fill="#00ff00"/>
<rect x="536" y="566" width="1" height="2" fill="#00ff00"/>
<rect x="539" y="554" width="7" height="15" fill="#00ff00"/>
<rect x="549" y="554" width="34" height="1" fill="#00ff00"/>
<rect x="549" y="568" width="34" height="1" fill="#00ff00"/>
<rect x="545" y="561" width="1" height="1" fill="#00ff00"/>
<rect x="546" y="559" width="1" height="2" fill="#00ff00"/>
<rect x="546" y="562" width="1" height="2" fill="#00ff00"/>
<rect x="547" y="557" width="1" height="2" fill="#00ff00"/>
<rect x="547" y="564" width="1" height="2" fill="#00ff00"/>
<rect x="548" y="555" width="1" height="2" fill="#00ff00"/>
<rect x="548" y="566" width="1" height="2" fill="#00ff00"/>
<rect x="586" y="561" width="1" height="1" fill="#00ff00"/>
<rect x="585" y="559" width="1" height="2" fill="#00ff00"/>
<rect x="585" y="562" width="1" height="2" fill="#00ff00"/>
<rect x="584" y="557" width="1" height="2" fill="#00ff00"/>
<rect x="584" y="564" width="1" height="2" fill="#00ff00"/>
<rect x="583" y="555" width="1" height="2" fill="#00ff00"/>
<rect x="583" y="566" width="1" height="2" fill="#00ff00"/>
<rect x="590" y="554" width="40" height="1" fill="#00ff00"/>
<rect x="590" y="568" width="40" height="1" fill="#00ff00"/>
<rect x="586" y="561" width="1" height="1" fill="#00ff00"/>
<rect x="587" y="559" width="1" height="2" fill="#00ff00"/>
<rect x="587" y="562" width="1" height="2" fill="#00ff00"/>
<rect x="588" y="557" width="1" height="2" fill="#00ff00"/>
<rect x="588" y="564" width="1" height="2" fill="#00ff00"/>
<rect x="589" y="555" width="1" height="2" fill="#00ff00"/>
<rect x="589" y="566" width="1" height="2" fill="#00ff00"/>
<rect x="633" y="561" width="1" height="1" fill="#00ff00"/>
<rect x="632" y="559" width="1" height="2" fill="#00ff00"/>
<rect x="632" y="562" width="1" height="2" fill="#00ff00"/>
<rect x="631" y="557" width="1" height="2" fill="#00ff00"/>
<rect x="631" y="564" width="1" height="2" fill="#00ff00"/>
<rect x="630" y="555" width="1" height="2" fill="#00ff00"/>
<rect x="630" y="566" width="1" height="2" fill="#00ff00"/>
<rect x="637" y="554" width="23" height="1" fill="#00ff00"/>
<rect x="637" y="568" width="23" height="1" fill="#00ff00"/>
<rect x="633" y="561" width="1" height="1" fill="#00ff00"/>
<rect x="634" y="559" width="1" height="2" fill="#00ff00"/>
<rect x="634" y="562" width="1" height="2" fill="#00ff00"/>
<rect x="635" y="557" width="1" height="2" fill="#00ff00"/>
<rect x="635" y="564" width="1" height="2" fill="#00ff00"/>
<rect x="636" y="555" width="1" height="2" fill="#00ff00"/>
<rect x="636" y="566" width="1" height="2" fill="#00ff00"/>
<rect x="663" y="561" width="1" height="1" fill="#00ff00"/>
<rect x="662" y="559" width="1" height="2" fill="#00ff00"/>
<rect x="662" y="562" width="1" height="2" fill="#00ff00"/>
<rect x="661" y="557" width="1" height="2" fill="#00ff00"/>
<rect x="661" y="564" width="1" height="2" fill="#00ff00"/>
<rect x="660" y="555" width="1" height="2" fill="#00ff00"/>
<rect x="660" y="566" width="1" height="2" fill="#00ff00"/>
<rect x="667" y="554" width="75" height="1" fill="#00ff00"/>
<rect x="667" y="568" width="75" height="1" fill="#00ff00"/>
<rect x="663" y="561" width="1" height="1" fill="#00ff00"/>
<rect x="664" y="559" width="1" height="2" fill="#00ff00"/>
<rect x="664" y="562" width="1" height="2" fill="#00ff00"/>
<rect x="665" y="557" width="1" height="2" fill="#00ff00"/>
<rect x="665" y="564" width="1" height="2" fill="#00ff00"/>
<rect x="666" y="555" width="1" height="2" fill="#00ff00"/>
<rect x="666" y="566" width="1" height="2" fill="#00ff00"/>
<rect x="745" y="561" width="1" height="1" fill="#00ff00"/>
<rect x="744" y="559" width="1" height="2" fill="#00ff00"/>
<rect x="744" y="562" width="1" height="2" fill="#00ff00"/>
<rect x="743" y="557" width="1" height="2" fill="#00ff00"/>
<rect x="743" y="564" width="1" height="2" fill="#00ff00"/>
<rect x="742" y="555" width="1" height="2" fill="#00ff00"/>
<rect x="742" y="566" width="1" height="2" fill="#00ff00"/>
<rect x="749" y="554" width="23" height="1" fill="#00ff00"/>
<rect x="749" y="568" width="23" height="1" fill="#00ff00"/>
<rect x="745" y="561" width="1" height="1" fill="#00ff00"/>
<rect x="746" y="559" width="1" height="2" fill="#00ff00"/>
<rect x="746" y="562" width="1" height="2" fill="#00ff00"/>
<rect x="747" y="557" width="1" height="2" fill="#00ff00"/>
<rect x="747" y="564" width="1" height="2" fill="#00ff00"/>
<rect x="748" y="555" width="1" height="2" fill="#00ff00"/>
<rect x="748" y="566" width="1" height="2" fill="#00ff00"/>
<rect x="775" y="561" width="1" height="1" fill="#00ff00"/>
<rect x="774" y="559" width="1" height="2" fill="#00ff00"/>
<rect x="774" y="562" width="1" height="2" fill="#00ff00"/>
<rect x="773" y="557" width="1" height="2" fill="#00ff00"/>
<rect x="773" y="564" width="1" height="2" fill="#00ff00"/>
<rect x="772" y="555" width="1" height="2" fill="#00ff00"/>
<rect x="772" y="566" width="1" height="2" fill="#00ff00"/>
<rect x="779" y="554" width="16" height="1" fill="#00ff00"/>
<rect x="779" y="568" width="16" height="1" fill="#00ff00"/>
<rect x="775" y="561" width="1" height="1" fill="#00ff00"/>
<rect x="776" y="559" width="1" height="2" fill="#00ff00"/>
<rect x="776" y="562" width="1" height="2" fill="#00ff00"/>
<rect x="777" y="557" width="1" height="2" fill="#00ff00"/>
<rect x="777" y="564" width="1" height="2" fill="#00ff00"/>
<rect x="778" y="555" width="1" height="2" fill="#00ff00"/>
<rect x="778" y="566" width="1" height="2" fill="#00ff00"/>
<rect x="798" y="561" width="1" height="1" fill="#00ff00"/>
<rect x="797" y="559" width="1" height="2" fill="#00ff00"/>
<rect x="797" y="562" width="1" height="2" fill="#00ff00"/>
<rect x="796" y="557" width="1" height="2" fill="#00ff00"/>
<rect x="796" y="564" width="1" height="2" fill="#00ff00"/>
<rect x="795" y="555" width="1" height="2" fill="#00ff00"/>
<rect x="795" y="566" width="1" height="2" fill="#00ff00"/>
<rect x="798" y="554" width="7" height="15" fill="#00ff00"/>
<rect x="808" y="554" width="34" height="1" fill="#00ff00"/>
<rect x="808" y="568" width="34" height="1" fill="#00ff00"/>
<rect x="804" y="561" width="1" height="1" fill="#00ff00"/>
<rect x="805" y="559" width="1" height="2" fill="#00ff00"/>
<rect x="805" y="562" width="1" height="2" fill="#00ff00"/>
<rect x="806" y="557" width="1" height="2" fill="#00ff00"/>
<rect x="806" y="564" width="1" height="2" fill="#00ff00"/>
<rect x="807" y="555" width="1" height="2" fill="#00ff00"/>
<rect x="807" y="566" width="1" height="2" fill="#00ff00"/>
<rect x="845" y="561" width="1" height="1" fill="#00ff00"/>
<rect x="844" y="559" width="1" height="2" fill="#00ff00"/>
<rect x="844" y="562" width="1" height="2" fill="#00ff00"/>
<rect x="843" y="557" width="1" height="2" fill="#00ff00"/>
<rect x="843" y="564" width="1" height="2" fill="#00ff00"/>
<rect x="842" y="555" width="1" height="2" fill="#00ff00"/>
<rect x="842" y="566" width="1" height="2" fill="#00ff00"/>
<rect x="845" y="554" width="7" height="15" fill="#00ff00"/>
<rect x="855" y="554" width="29" height="1" fill="#00ff00"/>
<rect x="855" y="568" width="29" height="1" fill="#00ff00"/>
<rect x="851" y="561" width="1" height="1" fill="#00ff00"/>
<rect x="852" y="559" width="1" height="2" fill="#00ff00"/>
<rect x="852" y="562" width="1" height="2" fill="#00ff00"/>
<rect x="853" y="557" width="1" height="2" fill="#00ff00"/>
<rect x="853" y="564" width="1" height="2" fill="#00ff00"/>
<rect x="854" y="555" width="1" height="2" fill="#00ff00"/>
<rect x="854" y="566" width="1" height="2" fill="#00ff00"/>
<rect x="887" y="561" width="1" height="1" fill="#00ff00"/>
<rect x="886" y="559" width="1" height="2" fill="#00ff00"/>
<rect x="886" y="562" width="1" height="2" fill="#00ff00"/>
<rect x="885" y="557" width="1" height="2" fill="#00ff00"/>
<rect x="885" y="564" width="1" height="2" fill="#00ff00"/>
<rect x="884" y="555" width="1" height="2" fill="#00ff00"/>
<rect x="884" y="566" width="1" height="2" fill="#00ff00"/>
<rect x="887" y="554" width="6" height="15" fill="#00ff00"/>
<rect x="896" y="554" width="23" height="1" fill="#00ff00"/>
<rect x="896" y="568" width="23" height="1" fill="#00ff00"/>
<rect x="892" y="561" width="1" height="1" fill="#00ff00"/>
<rect x="893" y="559" width="1" height="2" fill="#00ff00"/>
<rect x="893" y="562" width="1" height="2" fill="#00ff00"/>
<rect x="894" y="557" width="1" height="2" fill="#00ff00"/>
<rect x="894" y="564" width="1" height="2" fill="#00ff00"/>
<rect x="895" y="555" width="1" height="2" fill="#00ff00"/>
<rect x="895" y="566" width="1" height="2" fill="#00ff00"/>
<rect x="922" y="561" width="1" height="1" fill="#00ff00"/>
<rect x="921" y="559" width="1" height="2" fill="#00ff00"/>
<rect x="921" y="562" width="1" height="2" fill="#00ff00"/>
<rect x="920" y="557" width="1" height="2" fill="#00ff00"/>
<rect x="920" y="564" width="1" height="2" fill="#00ff00"/>
<rect x="919" y="555" width="1" height="2" fill="#00ff00"/>
<rect x="919" y="566" width="1" height="2" fill="#00ff00"/>
<rect x="926" y="554" width="137" height="1" fill="#00ff00"/>
<rect x="926" y="568" width="137" height="1" fill="#00ff00"/>
<rect x="922" y="561" width="1" height="1" fill="#00ff00"/>
<rect x="923" y="559" width="1" height="2" fill="#00ff00"/>
<rect x="923" y="562" width="1" height="2" fill="#00ff00"/>
<rect x="924" y="557" width="1" height="2" fill="#00ff00"/>
<rect x="924" y="564" width="1" height="2" fill="#00ff00"/>
<rect x="925" y="555" width="1" height="2" fill="#00ff00"/>
<rect x="925" y="566" width="1" height="2" fill="#00ff00"/>
<rect x="1066" y="561" width="1" height="1" fill="#00ff00"/>
<rect x="1065" y="559" width="1" height="2" fill="#00ff00"/>
<rect x="1065" y="562" width="1" height="2" fill="#00ff00"/>
<rect x="1064" y="557" width="1" height="2" fill="#00ff00"/>
<rect x="1064" y="564" width="1" height="2" fill="#00ff00"/>
<rect x="1063" y="555" width="1" height="2" fill="#00ff00"/>
<rect x="1063" y="566" width="1" height="2" fill="#00ff00"/>
<rect x="487" y="559" width="2" height="1" fill="#ffffff"/>
<rect x="486" y="560" width="1" height="1" fill="#ffffff"/>
<rect x="489" y="560" width="1" height="1" fill="#ffffff"/>
<rect x="486" y="561" width="1" height="1" fill="#ffffff"/>
<rect x="489" y="561" width="1" height="1" fill="#ffffff"/>
<rect x="486" y="562" width="1" height="1" fill="#ffffff"/>
<rect x="489" y="562" width="1" height="1" fill="#ffffff"/>
<rect x="486" y="563" width="1" height="1" fill="#ffffff"/>
<rect x="489" y="563" width="1" height="1" fill="#ffffff"/>
<rect x="486" y="564" width="1" height="1" fill="#ffffff"/>
<rect x="489" y="564" width="1" height="1" fill="#ffffff"/>
<rect x="487" y="565" width="2" height="1" fill="#ffffff"/>
<rect x="516" y="559" width="4" height="1" fill="#ffffff"/>
<rect x="516" y="560" width="1" height="1" fill="#ffffff"/>
<rect x="516" y="561" width="3" height="1" fill="#ffffff"/>
<rect x="519" y="562" width="1" height="1" fill="#ffffff"/>
<rect x="519" y="563" width="1" height="1" fill="#ffffff"/>
<rect x="516" y="564" width="1" height="1" fill="#ffffff"/>
<rect x="519" y="564" width="1" height="1" fill="#ffffff"/>
<rect x="517" y="565" width="2" height="1" fill="#ffffff"/>
<rect x="564" y="559" width="2" height="1" fill="#ffffff"/>
<rect x="563" y="560" width="1" height="1" fill="#ffffff"/>
<rect x="566" y="560" width="1" height="1" fill="#ffffff"/>
<rect x="563" y="561" width="1" height="1" fill="#ffffff"/>
<rect x="566" y="561" width="1" height="1" fill="#ffffff"/>
<rect x="564" y="562" width="2" height="1" fill="#ffffff"/>
<rect x="563" y="563" width="1" height="1" fill="#ffffff"/>
<rect x="566" y="563" width="1" height="1" fill="#ffffff"/>
<rect x="563" y="564" width="1" height="1" fill="#ffffff"/>
<rect x="566" y="564" width="1" height="1" fill="#ffffff"/>
<rect x="564" y="565" width="2" height="1" fill="#ffffff"/>
<rect x="609" y="558" width="1" height="1" fill="#ffffff"/>
<rect x="609" y="559" width="1" height="1" fill="#ffffff"/>
<rect x="608" y="560" width="2" height="1" fill="#ffffff"/>
<rect x="607" y="561" width="1" height="1" fill="#ffffff"/>
<rect x="609" y="561" width="1" height="1" fill="#ffffff"/>
<rect x="606" y="562" width="1" height="1" fill="#ffffff"/>
<rect x="609" y="562" width="1" height="1" fill="#ffffff"/>
<rect x="606" y="563" width="5" height="1" fill="#ffffff"/>
<rect x="609" y="564" width="1" height="1" fill="#ffffff"/>
<rect x="609" y="565" width="1" height="1" fill="#ffffff"/>
<rect x="646" y="559" width="2" height="1" fill="#ffffff"/>
<rect x="645" y="560" width="1" height="1" fill="#ffffff"/>
<rect x="648" y="560" width="1" height="1" fill="#ffffff"/>
<rect x="645" y="561" width="1" height="1" fill="#ffffff"/>
<rect x="648" y="561" width="1" height="1" fill="#ffffff"/>
<rect x="646" y="562" width="3" height="1" fill="#ffffff"/>
<rect x="648" y="563" width="1" height="1" fill="#ffffff"/>
<rect x="648" y="564" width="1" height="1" fill="#ffffff"/>
<rect x="646" y="565" width="2" height="1" fill="#ffffff"/>
<rect x="701" y="559" width="4" height="1" fill="#ffffff"/>
<rect x="701" y="560" width="1" height="1" fill="#ffffff"/>
<rect x="701" y="561" width="3" height="1" fill="#ffffff"/>
<rect x="704" y="562" width="1" height="1" fill="#ffffff"/>
<rect x="704" y="563" width="1" height="1" fill="#ffffff"/>
<rect x="701" y="564" width="1" height="1" fill="#ffffff"/>
<rect x="704" y="564" width="1" height="1" fill="#ffffff"/>
<rect x="702" y="565" width="2" height="1" fill="#ffffff"/>
<rect x="758" y="559" width="2" height="1" fill="#ffffff"/>
<rect x="757" y="560" width="1" height="1" fill="#ffffff"/>
<rect x="760" y="560" width="1" height="1" fill="#ffffff"/>
<rect x="757" y="561" width="1" height="1" fill="#ffffff"/>
<rect x="760" y="561" width="1" height="1" fill="#ffffff"/>
<rect x="757" y="562" width="1" height="1" fill="#ffffff"/>
<rect x="760" y="562" width="1" height="1" fill="#ffffff"/>
<rect x="757" y="563" width="1" height="1" fill="#ffffff"/>
<rect x="760" y="563" width="1" height="1" fill="#ffffff"/>
<rect x="757" y="564" width="1" height="1" fill="#ffffff"/>
<rect x="760" y="564" width="1" height="1" fill="#ffffff"/>
<rect x="758" y="565" width="2" height="1" fill="#ffffff"/>
<rect x="784" y="559" width="4" height="1" fill="#ffffff"/>
<rect x="786" y="560" width="1" height="1" fill="#ffffff"/>
<rect x="786" y="561" width="1" height="1" fill="#ffffff"/>
<rect x="785" y="562" width="1" height="1" fill="#ffffff"/>
<rect x="785" y="563" width="1" height="1" fill="#ffffff"/>
<rect x="785" y="564" width="1" height="1" fill="#ffffff"/>
<rect x="785" y="565" width="1" height="1" fill="#ffffff"/>
<rect x="822" y="559" width="3" height="1" fill="#ffffff"/>
<rect x="821" y="560" width="2" height="1" fill="#ffffff"/>
<rect x="821" y="561" width="1" height="1" fill="#ffffff"/>
<rect x="821" y="562" width="4" height="1" fill="#ffffff"/>
<rect x="821" y="563" width="1" height="1" fill="#ffffff"/>
<rect x="825" y="563" width="1" height="1" fill="#ffffff"/>
<rect x="821" y="564" width="1" height="1" fill="#ffffff"/>
<rect x="825" y="564" width="1" height="1" fill="#ffffff"/>
<rect x="822" y="565" width="3" height="1" fill="#ffffff"/>
<rect x="866" y="559" width="4" height="1" fill="#ffffff"/>
<rect x="866" y="560" width="1" height="1" fill="#ffffff"/>
<rect x="866" y="561" width="3" height="1" fill="#ffffff"/>
<rect x="869" y="562" width="1" height="1" fill="#ffffff"/>
<rect x="869" y="563" width="1" height="1" fill="#ffffff"/>
<rect x="866" y="564" width="1" height="1" fill="#ffffff"/>
<rect x="869" y="564" width="1" height="1" fill="#ffffff"/>
<rect x="867" y="565" width="2" height="1" fill="#ffffff"/>
<rect x="905" y="559" width="2" height="1" fill="#ffffff"/>
<rect x="904" y="560" width="1" height="1" fill="#ffffff"/>
<rect x="907" y="560" width="1" height="1" fill="#ffffff"/>
<rect x="904" y="561" width="1" height="1" fill="#ffffff"/>
<rect x="907" y="561" width="1" height="1" fill="#ffffff"/>
<rect x="905" y="562" width="2" height="1" fill="#ffffff"/>
<rect x="904" y="563" width="1" height="1" fill="#ffffff"/>
<rect x="907" y="563" width="1" height="1" fill="#ffffff"/>
<rect x="904" y="564" width="1" height="1" fill="#ffffff"/>
<rect x="907" y="564" width="1" height="1" fill="#ffffff"/>
<rect x="905" y="565" width="2" height="1" fill="#ffffff"/>
<rect x="991" y="559" width="4" height="1" fill="#ffffff"/>
<rect x="991" y="560" width="1" height="1" fill="#ffffff"/>
<rect x="991" y="561" width="3" height="1" fill="#ffffff"/>
<rect x="994" y="562" width="1" height="1" fill="#ffffff"/>
<rect x="994" y="563" width="1" height="1" fill="#ffffff"/>
<rect x="991" y="564" width="1" height="1" fill="#ffffff"/>
<rect x="994" y="564" width="1" height="1" fill="#ffffff"/>
<rect x="992" y="565" width="2" height="1" fill="#ffffff"/>
<rect x="479" y="574" width="2" height="15" fill="#00ff00"/>
<rect x="484" y="574" width="11" height="1" fill="#00ff00"/>
<rect x="484" y="588" width="11" height="1" fill="#00ff00"/>
<rect x="480" y="581" width="1" height="1" fill="#00ff00"/>
<rect x="481" y="579" width="1" height="2" fill="#00ff00"/>
<rect x="481" y="582" width="1" height="2" fill="#00ff00"/>
<rect x="482" y="577" width="1" height="2" fill="#00ff00"/>
<rect x="482" y="584" width="1" height="2" fill="#00ff00"/>
<rect x="483" y="575" width="1" height="2" fill="#00ff00"/>
<rect x="483" y="586" width="1" height="2" fill="#00ff00"/>
<rect x="498" y="581" width="1" height="1" fill="#00ff00"/>
<rect x="497" y="579" width="1" height="2" fill="#00ff00"/>
<rect x="497" y="582" width="1" height="2" fill="#00ff00"/>
<rect x="496" y="577" width="1" height="2" fill="#00ff00"/>
<rect x="496" y="584" width="1" height="2" fill="#00ff00"/>
<rect x="495" y="575" width="1" height="2" fill="#00ff00"/>
<rect x="495" y="586" width="1" height="2" fill="#00ff00"/>
<rect x="502" y="574" width="28" height="1" fill="#00ff00"/>
<rect x="502" y="588" width="28" height="1" fill="#00ff00"/>
<rect x="498" y="581" width="1" height="1" fill="#00ff00"/>
<rect x="499" y="579" width="1" height="2" fill="#00ff00"/>
<rect x="499" y="582" width="1" height="2" fill="#00ff00"/>
<rect x="500" y="577" width="1" height="2" fill="#00ff00"/>
<rect x="500" y="584" width="1" height="2" fill="#00ff00"/>
<rect x="501" y="575" width="1" height="2" fill="#00ff00"/>
<rect x="501" y="586" width="1" height="2" fill="#00ff00"/>
<rect x="533" y="581" width="1" height="1" fill="#00ff00"/>
<rect x="532" y="579" width="1" height="2" fill="#00ff00"/>
<rect x="532" y="582" width="1" height="2" fill="#00ff00"/>
<rect x="531" y="577" width="1" height="2" fill="#00ff00"/>
<rect x="531" y="584" width="1" height="2" fill="#00ff00"/>
<rect x="530" y="575" width="1" height="2" fill="#00ff00"/>
<rect x="530" y="586" width="1" height="2" fill="#00ff00"/>
<rect x="533" y="574" width="7" height="15" fill="#00ff00"/>
<rect x="543" y="574" width="35" height="1" fill="#00ff00"/>
<rect x="543" y="588" width="35" height="1" fill="#00ff00"/>
<rect x="539" y="581" width="1" height="1" fill="#00ff00"/>
<rect x="540" y="579" width="1" height="2" fill="#00ff00"/>
<rect x="540" y="582" width="1" height="2" fill="#00ff00"/>
<rect x="541" y="577" width="1" height="2" fill="#00ff00"/>
<rect x="541" y="584" width="1" height="2" fill="#00ff00"/>
<rect x="542" y="575" width="1" height="2" fill="#00ff00"/>
<rect x="542" y="586" width="1" height="2" fill="#00ff00"/>
<rect x="581" y="581" width="1" height="1" fill="#00ff00"/>
<rect x="580" y="579" width="1" height="2" fill="#00ff00"/>
<rect x="580" y="582" width="1" height="2" fill="#00ff00"/>
<rect x="579" y="577" width="1" height="2" fill="#00ff00"/>
<rect x="579" y="584" width="1" height="2" fill="#00ff00"/>
<rect x="578" y="575" width="1" height="2" fill="#00ff00"/>
<rect x="578" y="586" width="1" height="2" fill="#00ff00"/>
<rect x="581" y="581" width="1" height="1" fill="#00ff00"/>
<rect x="582" y="579" width="1" height="2" fill="#00ff00"/>
<rect x="582" y="582" width="1" height="2" fill="#00ff00"/>
<rect x="583" y="577" width="1" height="2" fill="#00ff00"/>
<rect x="583" y="584" width="1" height="2" fill="#00ff00"/>
<rect x="584" y="575" width="1" height="2" fill="#00ff00"/>
<rect x="584" y="586" width="1" height="2" fill="#00ff00"/>
<rect x="586" y="581" width="1" height="1" fill="#00ff00"/>
<rect x="585" y="579" width="1" height="2" fill="#00ff00"/>
<rect x="585" y="582" width="1" height="2" fill="#00ff00"/>
<rect x="584" y="577" width="1" height="2" fill="#00ff00"/>
<rect x="584" y="584" width="1" height="2" fill="#00ff00"/>
<rect x="583" y="575" width="1" height="2" fill="#00ff00"/>
<rect x="583" y="586" width="1" height="2" fill="#00ff00"/>
<rect x="590" y="574" width="29" height="1" fill="#00ff00"/>
<rect x="590" y="588" width="29" height="1" fill="#00ff00"/>
<rect x="586" y="581" width="1" height="1" fill="#00ff00"/>
<rect x="587" y="579" width="1" height="2" fill="#00ff00"/>
<rect x="587" y="582" width="1" height="2" fill="#00ff00"/>
<rect x="588" y="577" width="1" height="2" fill="#00ff00"/>
<rect x="588" y="584" width="1" height="2" fill="#00ff00"/>
<rect x="589" y="575" width="1" height="2" fill="#00ff00"/>
<rect x="589" y="586" width="1" height="2" fill="#00ff00"/>
<rect x="622" y="581" width="1" height="1" fill="#00ff00"/>
<rect x="621" y="579" width="1" height="2" fill="#00ff00"/>
<rect x="621" y="582" width="1" height="2" fill="#00ff00"/>
<rect x="620" y="577" width="1" height="2" fill="#00ff00"/>
<rect x="620" y="584" width="1" height="2" fill="#00ff00"/>
<rect x="619" y="575" width="1" height="2" fill="#00ff00"/>
<rect x="619" y="586" width="1" height="2" fill="#00ff00"/>
<rect x="626" y="574" width="34" height="1" fill="#00ff00"/>
<rect x="626" y="588" width="34" height="1" fill="#00ff00"/>
<rect x="622" y="581" width="1" height="1" fill="#00ff00"/>
<rect x="623" y="579" width="1" height="2" fill="#00ff00"/>
<rect x="623" y="582" width="1" height="2" fill="#00ff00"/>
<rect x="624" y="577" width="1" height="2" fill="#00ff00"/>
<rect x="624" y="584" width="1" height="2" fill="#00ff00"/>
<rect x="625" y="575" width="1" height="2" fill="#00ff00"/>
<rect x="625" y="586" width="1" height="2" fill="#00ff00"/>
<rect x="663" y="581" width="1" height="1" fill="#00ff00"/>
<rect x="662" y="579" width="1" height="2" fill="#00ff00"/>
<rect x="662" y="582" width="1" height="2" fill="#00ff00"/>
<rect x="661" y="577" width="1" height="2" fill="#00ff00"/>
<rect x="661" y="584" width="1" height="2" fill="#00ff00"/>
<rect x="660" y="575" width="1" height="2" fill="#00ff00"/>
<rect x="660" y="586" width="1" height="2" fill="#00ff00"/>
<rect x="667" y="574" width="16" height="1" fill="#00ff00"/>
<rect x="667" y="588" width="16" height="1" fill="#00ff00"/>
<rect x="663" y="581" width="1" height="1" fill="#00ff00"/>
<rect x="664" y="579" width="1" height="2" fill="#00ff00"/>
<rect x="664" y="582" width="1" height="2" fill="#00ff00"/>
<rect x="665" y="577" width="1" height="2" fill="#00ff00"/>
<rect x="665" y="584" width="1" height="2" fill="#00ff00"/>
<rect x="666" y="575" width="1" height="2" fill="#00ff00"/>
<rect x="666" y="586" width="1" height="2" fill="#00ff00"/>
<rect x="686" y="581" width="1" height="1" fill="#00ff00"/>
<rect x="685" y="579" width="1" height="2" fill="#00ff00"/>
<rect x="685" y="582" width="1" height="2" fill="#00ff00"/>
<rect x="684" y="577" width="1" height="2" fill="#00ff00"/>
<rect x="684" y="584" width="1" height="2" fill="#00ff00"/>
<rect x="683" y="575" width="1" height="2" fill="#00ff00"/>
<rect x="683" y="586" width="1" height="2" fill="#00ff00"/>
<rect x="690" y="574" width="52" height="1" fill="#00ff00"/>
<rect x="690" y="588" width="52" height="1" fill="#00ff00"/>
<rect x="686" y="581" width="1" height="1" fill="#00ff00"/>
<rect x="687" y="579" width="1" height="2" fill="#00ff00"/>
<rect x="687" y="582" width="1" height="2" fill="#00ff00"/>
<rect x="688" y="577" width="1" height="2" fill="#00ff00"/>
<rect x="688" y="584" width="1" height="2" fill="#00ff00"/>
<rect x="689" y="575" width="1" height="2" fill="#00ff00"/>
<rect x="689" y="586" width="1" height="2" fill="#00ff00"/>
<rect x="745" y="581" width="1" height="1" fill="#00ff00"/>
<rect x="744" y="579" width="1" height="2" fill="#00ff00"/>
<rect x="744" y="582" width="1" height="2" fill="#00ff00"/>
<rect x="743" y="577" width="1" height="2" fill="#00ff00"/>
<rect x="743" y="584" width="1" height="2" fill="#00ff00"/>
<rect x="742" y="575" width="1" height="2" fill="#00ff00"/>
<rect x="742" y="586" width="1" height="2" fill="#00ff00"/>
<rect x="749" y="574" width="23" height="1" fill="#00ff00"/>
<rect x="749" y="588" width="23" height="1" fill="#00ff00"/>
<rect x="745" y="581" width="1" height="1" fill="#00ff00"/>
<rect x="746" y="579" width="1" height="2" fill="#00ff00"/>
<rect x="746" y="582" width="1" height="2" fill="#00ff00"/>
<rect x="747" y="577" width="1" height="2" fill="#00ff00"/>
<rect x="747" y="584" width="1" height="2" fill="#00ff00"/>
<rect x="748" y="575" width="1" height="2" fill="#00ff00"/>
<rect x="748" y="586" width="1" height="2" fill="#00ff00"/>
<rect x="775" y="581" width="1" height="1" fill="#00ff00"/>
<rect x="774" y="579" width="1" height="2" fill="#00ff00"/>
<rect x="774" y="582" width="1" height="2" fill="#00ff00"/>
<rect x="773" y="577" width="1" height="2" fill="#00ff00"/>
<rect x="773" y="584" width="1" height="2" fill="#00ff00"/>
<rect x="772" y="575" width="1" height="2" fill="#00ff00"/>
<rect x="772" y="586" width="1" height="2" fill="#00ff00"/>
<rect x="779" y="574" width="10" height="1" fill="#00ff00"/>
<rect x="779" y="588" width="10" height="1" fill="#00ff00"/>
<rect x="775" y="581" width="1" height="1" fill="#00ff00"/>
<rect x="776" y="579" width="1" height="2" fill="#00ff00"/>
<rect x="776" y="582" width="1" height="2" fill="#00ff00"/>
<rect x="777" y="577" width="1" height="2" fill="#00ff00"/>
<rect x="777" y="584" width="1" height="2" fill="#00ff00"/>
<rect x="778" y="575" width="1" height="2" fill="#00ff00"/>
<rect x="778" y="586" width="1" height="2" fill="#00ff00"/>
<rect x="792" y="581" width="1" height="1" fill="#00ff00"/>
<rect x="791" y="579" width="1" height="2" fill="#00ff00"/>
<rect x="791" y="582" width="1" height="2" fill="#00ff00"/>
<rect x="790" y="577" width="1" height="2" fill="#00ff00"/>
<rect x="790" y="584" width="1" height="2" fill="#00ff00"/>
<rect x="789" y="575" width="1" height="2" fill="#00ff00"/>
<rect x="789" y="586" width="1" height="2" fill="#00ff00"/>
<rect x="792" y="574" width="7" height="15" fill="#00ff00"/>
<rect x="802" y="574" width="34" height="1" fill="#00ff00"/>
<rect x="802" y="588" width="34" height="1" fill="#00ff00"/>
<rect x="798" y="581" width="1" height="1" fill="#00ff00"/>
<rect x="799" y="579" width="1" height="2" fill="#00ff00"/>
<rect x="799" y="582" width="1" height="2" fill="#00ff00"/>
<rect x="800" y="577" width="1" height="2" fill="#00ff00"/>
<rect x="800" y="584" width="1" height="2" fill="#00ff00"/>
<rect x="801" y="575" width="1" height="2" fill="#00ff00"/>
<rect x="801" y="586" width="1" height="2" fill="#00ff00"/>
<rect x="839" y="581" width="1" height="1" fill="#00ff00"/>
<rect x="838" y="579" width="1" height="2" fill="#00ff00"/>
<rect x="838" y="582" width="1" height="2" fill="#00ff00"/>
<rect x="837" y="577" width="1" height="2" fill="#00ff00"/>
<rect x="837" y="584" width="1" height="2" fill="#00ff00"/>
<rect x="836" y="575" width="1" height="2" fill="#00ff00"/>
<rect x="836" y="586" width="1" height="2" fill="#00ff00"/>
<rect x="839" y="574" width="7" height="15" fill="#00ff00"/>
<rect x="849" y="574" width="29" height="1" fill="#00ff00"/>
<rect x="849" y="588" width="29" height="1" fill="#00ff00"/>
<rect x="845" y="581" width="1" height="1" fill="#00ff00"/>
<rect x="846" y="579" width="1" height="2" fill="#00ff00"/>
<rect x="846" y="582" width="1" height="2" fill="#00ff00"/>
<rect x="847" y="577" width="1" height="2" fill="#00ff00"/>
<rect x="847" y="584" width="1" height="2" fill="#00ff00"/>
<rect x="848" y="575" width="1" height="2" fill="#00ff00"/>
<rect x="848" y="586" width="1" height="2" fill="#00ff00"/>
<rect x="881" y="581" width="1" height="1" fill="#00ff00"/>
<rect x="880" y="579" width="1" height="2" fill="#00ff00"/>
<rect x="880" y="582" width="1" height="2" fill="#00ff00"/>
<rect x="879" y="577" width="1" height="2" fill="#00ff00"/>
<rect x="879" y="584" width="1" height="2" fill="#00ff00"/>
<rect x="878" y="575" width="1" height="2" fill="#00ff00"/>
<rect x="878" y="586" width="1" height="2" fill="#00ff00"/>
<rect x="881" y="574" width="7" height="15" fill="#00ff00"/>
<rect x="891" y="574" width="28" height="1" fill="#00ff00"/>
<rect x="891" y="588" width="28" height="1" fill="#00ff00"/>
<rect x="887" y="581" width="1" height="1" fill="#00ff00"/>
<rect x="888" y="579" width="1" height="2" fill="#00ff00"/>
<rect x="888" y="582" width="1" height="2" fill="#00ff00"/>
<rect x="889" y="577" width="1" height="2" fill="#00ff00"/>
<rect x="889" y="584" width="1" height="2" fill="#00ff00"/>
<rect x="890" y="575" width="1" height="2" fill="#00ff00"/>
<rect x="890" y="586" width="1" height="2" fill="#00ff00"/>
<rect x="922" y="581" width="1" height="1" fill="#00ff00"/>
<rect x="921" y="579" width="1" height="2" fill="#00ff00"/>
<rect x="921" y="582" width="1" height="2" fill="#00ff00"/>
<rect x="920" y="577" width="1" height="2" fill="#00ff00"/>
<rect x="920" y="584" width="1" height="2" fill="#00ff00"/>
<rect x="919" y="575" width="1" height="2" fill="#00ff00"/>
<rect x="919" y="586" width="1" height="2" fill="#00ff00"/>
<rect x="926" y="574" width="16" height="1" fill="#00ff00"/>
<rect x="926" y="588" width="16" height="1" fill="#00ff00"/>
<rect x="922" y="581" width="1" height="1" fill="#00ff00"/>
<rect x="923" y="579" width="1" height="2" fill="#00ff00"/>
<rect x="923" y="582" width="1" height="2" fill="#00ff00"/>
<rect x="924" y="577" width="1" height="2" fill="#00ff00"/>
<rect x="924" y="584" width="1" height="2" fill="#00ff00"/>
<rect x="925" y="575" width="1" height="2" fill="#00ff00"/>
<rect x="925" y="586" width="1" height="2" fill="#00ff00"/>
<rect x="945" y="581" width="1" height="1" fill="#00ff00"/>
<rect x="944" y="579" width="1" height="2" fill="#00ff00"/>
<rect x="944" y="582" width="1" height="2" fill="#00ff00"/>
<rect x="943" y="577" width="1" height="2" fill="#00ff00"/>
<rect x="943" y="584" width="1" height="2" fill="#00ff00"/>
<rect x="942" y="575" width="1" height="2" fill="#00ff00"/>
<rect x="942" y="586" width="1" height="2" fill="#00ff00"/>
<rect x="949" y="574" width="114" height="1" fill="#00ff00"/>
<rect x="949" y="588" width="114" height="1" fill="#00ff00"/>
<rect x="945" y="581" width="1" height="1" fill="#00ff00"/>
<rect x="946" y="579" width="1" height="2" fill="#00ff00"/>
<rect x="946" y="582" width="1" height="2" fill="#00ff00"/>
<rect x="947" y="577" width="1" height="2" fill="#00ff00"/>
<rect x="947" y="584" width="1" height="2" fill="#00ff00"/>
<rect x="948" y="575" width="1" height="2" fill="#00ff00"/>
<rect x="948" y="586" width="1" height="2" fill="#00ff00"/>
<rect x="1066" y="581" width="1" height="1" fill="#00ff00"/>
<rect x="1065" y="579" width="1" height="2" fill="#00ff00"/>
<rect x="1065" y="582" width="1" height="2" fill="#00ff00"/>
<rect x="1064" y="577" width="1" height="2" fill="#00ff00"/>
<rect x="1064" y="584" width="1" height="2" fill="#00ff00"/>
<rect x="1063" y="575" width="1" height="2" fill="#00ff00"/>
<rect x="1063" y="586" width="1" height="2" fill="#00ff00"/>
<rect x="487" y="579" width="2" height="1" fill="#ffffff"/>
<rect x="486" y="580" width="1" height="1" fill="#ffffff"/>
<rect x="489" y="580" width="1" height="1" fill="#ffffff"/>
<rect x="486" y="581" width="1" height="1" fill="#ffffff"/>
<rect x="489" y="581" width="1" height="1" fill="#ffffff"/>
<rect x="486" y="582" width="1" height="1" fill="#ffffff"/>
<rect x="489" y="582" width="1" height="1" fill="#ffffff"/>
<rect x="486" y="583" width="1" height="1" fill="#ffffff"/>
<rect x="489" y="583" width="1" height="1" fill="#ffffff"/>
<rect x="486" y="584" width="1" height="1" fill="#ffffff"/>
<rect x="489" y="584" width="1" height="1" fill="#ffffff"/>
<rect x="487" y="585" width="2" height="1" fill="#ffffff"/>
<rect x="513" y="579" width="4" height="1" fill="#ffffff"/>
<rect x="515" y="580" width="1" height="1" fill="#ffffff"/>
<rect x="515" y="581" width="1" height="1" fill="#ffffff"/>
<rect x="514" y="582" width="1" height="1" fill="#ffffff"/>
<rect x="514" y="583" width="1" height="1" fill="#ffffff"/>
<rect x="514" y="584" width="1" height="1" fill="#ffffff"/>
<rect x="514" y="585" width="1" height="1" fill="#ffffff"/>
<rect x="557" y="579" width="4" height="1" fill="#ffffff"/>
<rect x="557" y="580" width="1" height="1" fill="#ffffff"/>
<rect x="557" y="581" width="3" height="1" fill="#ffffff"/>
<rect x="560" y="582" width="1" height="1" fill="#ffffff"/>
<rect x="560" y="583" width="1" height="1" fill="#ffffff"/>
<rect x="557" y="584" width="1" height="1" fill="#ffffff"/>
<rect x="560" y="584" width="1" height="1" fill="#ffffff"/>
<rect x="558" y="585" width="2" height="1" fill="#ffffff"/>
<rect x="602" y="579" width="2" height="1" fill="#ffffff"/>
<rect x="601" y="580" width="1" height="1" fill="#ffffff"/>
<rect x="604" y="580" width="1" height="1" fill="#ffffff"/>
<rect x="601" y="581" width="1" height="1" fill="#ffffff"/>
<rect x="604" y="581" width="1" height="1" fill="#ffffff"/>
<rect x="602" y="582" width="2" height="1" fill="#ffffff"/>
<rect x="601" y="583" width="1" height="1" fill="#ffffff"/>
<rect x="604" y="583" width="1" height="1" fill="#ffffff"/>
<rect x="601" y="584" width="1" height="1" fill="#ffffff"/>
<rect x="604" y="584" width="1" height="1" fill="#ffffff"/>
<rect x="602" y="585" width="2" height="1" fill="#ffffff"/>
<rect x="640" y="579" width="4" height="1" fill="#ffffff"/>
<rect x="640" y="580" width="1" height="1" fill="#ffffff"/>
<rect x="640" y="581" width="3" height="1" fill="#ffffff"/>
<rect x="643" y="582" width="1" height="1" fill="#ffffff"/>
<rect x="643" y="583" width="1" height="1" fill="#ffffff"/>
<rect x="640" y="584" width="1" height="1" fill="#ffffff"/>
<rect x="643" y="584" width="1" height="1" fill="#ffffff"/>
<rect x="641" y="585" width="2" height="1" fill="#ffffff"/>
<rect x="673" y="579" width="2" height="1" fill="#ffffff"/>
<rect x="672" y="580" width="1" height="1" fill="#ffffff"/>
<rect x="675" y="580" width="1" height="1" fill="#ffffff"/>
<rect x="672" y="581" width="1" height="1" fill="#ffffff"/>
<rect x="675" y="581" width="1" height="1" fill="#ffffff"/>
<rect x="673" y="582" width="3" height="1" fill="#ffffff"/>
<rect x="675" y="583" width="1" height="1" fill="#ffffff"/>
<rect x="675" y="584" width="1" height="1" fill="#ffffff"/>
<rect x="673" y="585" width="2" height="1" fill="#ffffff"/>
<rect x="713" y="579" width="3" height="1" fill="#ffffff"/>
<rect x="712" y="580" width="2" height="1" fill="#ffffff"/>
<rect x="712" y="581" width="1" height="1" fill="#ffffff"/>
<rect x="712" y="582" width="4" height="1" fill="#ffffff"/>
<rect x="712" y="583" width="1" height="1" fill="#ffffff"/>
<rect x="716" y="583" width="1" height="1" fill="#ffffff"/>
<rect x="712" y="584" width="1" height="1" fill="#ffffff"/>
<rect x="716" y="584" width="1" height="1" fill="#ffffff"/>
<rect x="713" y="585" width="3" height="1" fill="#ffffff"/>
<rect x="758" y="579" width="2" height="1" fill="#ffffff"/>
<rect x="757" y="580" width="1" height="1" fill="#ffffff"/>
<rect x="760" y="580" width="1" height="1" fill="#ffffff"/>
<rect x="757" y="581" width="1" height="1" fill="#ffffff"/>
<rect x="760" y="581" width="1" height="1" fill="#ffffff"/>
<rect x="757" y="582" width="1" height="1" fill="#ffffff"/>
<rect x="760" y="582" width="1" height="1" fill="#ffffff"/>
<rect x="757" y="583" width="1" height="1" fill="#ffffff"/>
<rect x="760" y="583" width="1" height="1" fill="#ffffff"/>
<rect x="757" y="584" width="1" height="1" fill="#ffffff"/>
<rect x="760" y="584" width="1" height="1" fill="#ffffff"/>
<rect x="758" y="585" width="2" height="1" fill="#ffffff"/>
<rect x="781" y="579" width="3" height="1" fill="#ffffff"/>
<rect x="780" y="580" width="2" height="1" fill="#ffffff"/>
<rect x="780" y="581" width="1" height="1" fill="#ffffff"/>
<rect x="780" y="582" width="4" height="1" fill="#ffffff"/>
<rect x="780" y="583" width="1" height="1" fill="#ffffff"/>
<rect x="784" y="583" width="1" height="1" fill="#ffffff"/>
<rect x="780" y="584" width="1" height="1" fill="#ffffff"/>
<rect x="784" y="584" width="1" height="1" fill="#ffffff"/>
<rect x="781" y="585" width="3" height="1" fill="#ffffff"/>
<rect x="816" y="579" width="4" height="1" fill="#ffffff"/>
<rect x="818" y="580" width="1" height="1" fill="#ffffff"/>
<rect x="818" y="581" width="1" height="1" fill="#ffffff"/>
<rect x="817" y="582" width="1" height="1" fill="#ffffff"/>
<rect x="817" y="583" width="1" height="1" fill="#ffffff"/>
<rect x="817" y="584" width="1" height="1" fill="#ffffff"/>
<rect x="817" y="585" width="1" height="1" fill="#ffffff"/>
<rect x="860" y="579" width="3" height="1" fill="#ffffff"/>
<rect x="859" y="580" width="2" height="1" fill="#ffffff"/>
<rect x="859" y="581" width="1" height="1" fill="#ffffff"/>
<rect x="859" y="582" width="4" height="1" fill="#ffffff"/>
<rect x="859" y="583" width="1" height="1" fill="#ffffff"/>
<rect x="863" y="583" width="1" height="1" fill="#ffffff"/>
<rect x="859" y="584" width="1" height="1" fill="#ffffff"/>
<rect x="863" y="584" width="1" height="1" fill="#ffffff"/>
<rect x="860" y="585" width="3" height="1" fill="#ffffff"/>
<rect x="902" y="579" width="4" height="1" fill="#ffffff"/>
<rect x="902" y="580" width="1" height="1" fill="#ffffff"/>
<rect x="902" y="581" width="3" height="1" fill="#ffffff"/>
<rect x="905" y="582" width="1" height="1" fill="#ffffff"/>
<rect x="905" y="583" width="1" height="1" fill="#ffffff"/>
<rect x="902" y="584" width="1" height="1" fill="#ffffff"/>
<rect x="905" y="584" width="1" height="1" fill="#ffffff"/>
<rect x="903" y="585" width="2" height="1" fill="#ffffff"/>
<rect x="932" y="579" width="2" height="1" fill="#ffffff"/>
<rect x="931" y="580" width="1" height="1" fill="#ffffff"/>
<rect x="934" y="580" width="1" height="1" fill="#ffffff"/>
<rect x="931" y="581" width="1" height="1" fill="#ffffff"/>
<rect x="934" y="581" width="1" height="1" fill="#ffffff"/>
<rect x="932" y="582" width="2" height="1" fill="#ffffff"/>
<rect x="931" y="583" width="1" height="1" fill="#ffffff"/>
<rect x="934" y="583" width="1" height="1" fill="#ffffff"/>
<rect x="931" y="584" width="1" height="1" fill="#ffffff"/>
<rect x="934" y="584" width="1" height="1" fill="#ffffff"/>
<rect x="932" y="585" width="2" height="1" fill="#ffffff"/>
<rect x="1003" y="579" width="3" height="1" fill="#ffffff"/>
<rect x="1002" y="580" width="2" height="1" fill="#ffffff"/>
<rect x="1002" y="581" width="1" height="1" fill="#ffffff"/>
<rect x="1002" y="582" width="4" height="1" fill="#ffffff"/>
<rect x="1002" y="583" width="1" height="1" fill="#ffffff"/>
<rect x="1006" y="583" width="1" height="1" fill="#ffffff"/>
<rect x="1002" y="584" width="1" height="1" fill="#ffffff"/>
<rect x="1006" y="584" width="1" height="1" fill="#ffffff"/>
<rect x="1003" y="585" width="3" height="1" fill="#ffffff"/>
<rect x="479" y="594" width="2" height="15" fill="#00ff00"/>
<rect x="484" y="594" width="11" height="1" fill="#00ff00"/>
<rect x="484" y="608" width="11" height="1" fill="#00ff00"/>
<rect x="480" y="601" width="1" height="1" fill="#00ff00"/>
<rect x="481" y="599" width="1" height="2" fill="#00ff00"/>
<rect x="481" y="602" width="1" height="2" fill="#00ff00"/>
<rect x="482" y="597" width="1" height="2" fill="#00ff00"/>
<rect x="482" y="604" width="1" height="2" fill="#00ff00"/>
<rect x="483" y="595" width="1" height="2" fill="#00ff00"/>
<rect x="483" y="606" width="1" height="2" fill="#00ff00"/>
<rect x="498" y="601" width="1" height="1" fill="#00ff00"/>
<rect x="497" y="599" width="1" height="2" fill="#00ff00"/>
<rect x="497" y="602" width="1" height="2" fill="#00ff00"/>
<rect x="496" y="597" width="1" height="2" fill="#00ff00"/>
<rect x="496" y="604" width="1" height="2" fill="#00ff00"/>
<rect x="495" y="595" width="1" height="2" fill="#00ff00"/>
<rect x="495" y="606" width="1" height="2" fill="#00ff00"/>
<rect x="502" y="594" width="28" height="1" fill="#00ff00"/>
<rect x="502" y="608" width="28" height="1" fill="#00ff00"/>
<rect x="498" y="601" width="1" height="1" fill="#00ff00"/>
<rect x="499" y="599" width="1" height="2" fill="#00ff00"/>
<rect x="499" y="602" width="1" height="2" fill="#00ff00"/>
<rect x="500" y="597" width="1" height="2" fill="#00ff00"/>
<rect x="500" y="604" width="1" height="2" fill="#00ff00"/>
<rect x="501" y="595" width="1" height="2" fill="#00ff00"/>
<rect x="501" y="606" width="1" height="2" fill="#00ff00"/>
<rect x="533" y="601" width="1" height="1" fill="#00ff00"/>
<rect x="532" y="599" width="1" height="2" fill="#00ff00"/>
<rect x="532" y="602" width="1" height="2" fill="#00ff00"/>
<rect x="531" y="597" width="1" height="2" fill="#00ff00"/>
<rect x="531" y="604" width="1" height="2" fill="#00ff00"/>
<rect x="530" y="595" width="1" height="2" fill="#00ff00"/>
<rect x="530" y="606" width="1" height="2" fill="#00ff00"/>
<rect x="537" y="594" width="35" height="1" fill="#00ff00"/>
<rect x="537" y="608" width="35" height="1" fill="#00ff00"/>
<rect x="533" y="601" width="1" height="1" fill="#00ff00"/>
<rect x="534" y="599" width="1" height="2" fill="#00ff00"/>
<rect x="534" y="602" width="1" height="2" fill="#00ff00"/>
<rect x="535" y="597" width="1" height="2" fill="#00ff00"/>
<rect x="535" y="604" width="1" height="2" fill="#00ff00"/>
<rect x="536" y="595" width="1" height="2" fill="#00ff00"/>
<rect x="536" y="606" width="1" height="2" fill="#00ff00"/>
<rect x="575" y="601" width="1" height="1" fill="#00ff00"/>
<rect x="574" y="599" width="1" height="2" fill="#00ff00"/>
<rect x="574" y="602" width="1" height="2" fill="#00ff00"/>
<rect x="573" y="597" width="1" height="2" fill="#00ff00"/>
<rect x="573" y="604" width="1" height="2" fill="#00ff00"/>
<rect x="572" y="595" width="1" height="2" fill="#00ff00"/>
<rect x="572" y="606" width="1" height="2" fill="#00ff00"/>
<rect x="575" y="594" width="7" height="15" fill="#00ff00"/>
<rect x="585" y="594" width="34" height="1" fill="#00ff00"/>
<rect x="585" y="608" width="34" height="1" fill="#00ff00"/>
<rect x="581" y="601" width="1" height="1" fill="#00ff00"/>
<rect x="582" y="599" width="1" height="2" fill="#00ff00"/>
<rect x="582" y="602" width="1" height="2" fill="#00ff00"/>
<rect x="583" y="597" width="1" height="2" fill="#00ff00"/>
<rect x="583" y="604" width="1" height="2" fill="#00ff00"/>
<rect x="584" y="595" width="1" height="2" fill="#00ff00"/>
<rect x="584" y="606" width="1" height="2" fill="#00ff00"/>
<rect x="622" y="601" width="1" height="1" fill="#00ff00"/>
<rect x="621" y="599" width="1" height="2" fill="#00ff00"/>
<rect x="621" y="602" width="1" height="2" fill="#00ff00"/>
<rect x="620" y="597" width="1" height="2" fill="#00ff00"/>
<rect x="620" y="604" width="1" height="2" fill="#00ff00"/>
<rect x="619" y="595" width="1" height="2" fill="#00ff00"/>
<rect x="619" y="606" width="1" height="2" fill="#00ff00"/>
<rect x="626" y="594" width="22" height="1" fill="#00ff00"/>
<rect x="626" y="608" width="22" height="1" fill="#00ff00"/>
<rect x="622" y="601" width="1" height="1" fill="#00ff00"/>
<rect x="623" y="599" width="1" height="2" fill="#00ff00"/>
<rect x="623" y="602" width="1" height="2" fill="#00ff00"/>
<rect x="624" y="597" width="1" height="2" fill="#00ff00"/>
<rect x="624" y="604" width="1" height="2" fill="#00ff00"/>
<rect x="625" y="595" width="1" height="2" fill="#00ff00"/>
<rect x="625" y="606" width="1" height="2" fill="#00ff00"/>
<rect x="651" y="601" width="1" height="1" fill="#00ff00"/>
<rect x="650" y="599" width="1" height="2" fill="#00ff00"/>
<rect x="650" y="602" width="1" height="2" fill="#00ff00"/>
<rect x="649" y="597" width="1" height="2" fill="#00ff00"/>
<rect x="649" y="604" width="1" height="2" fill="#00ff00"/>
<rect x="648" y="595" width="1" height="2" fill="#00ff00"/>
<rect x="648" y="606" width="1" height="2" fill="#00ff00"/>
<rect x="655" y="594" width="28" height="1" fill="#00ff00"/>
<rect x="655" y="608" width="28" height="1" fill="#00ff00"/>
<rect x="651" y="601" width="1" height="1" fill="#00ff00"/>
<rect x="652" y="599" width="1" height="2" fill="#00ff00"/>
<rect x="652" y="602" width="1" height="2" fill="#00ff00"/>
<rect x="653" y="597" width="1" height="2" fill="#00ff00"/>
<rect x="653" y="604" width="1" height="2" fill="#00ff00"/>
<rect x="654" y="595" width="1" height="2" fill="#00ff00"/>
<rect x="654" y="606" width="1" height="2" fill="#00ff00"/>
<rect x="686" y="601" width="1" height="1" fill="#00ff00"/>
<rect x="685" y="599" width="1" height="2" fill="#00ff00"/>
<rect x="685" y="602" width="1" height="2" fill="#00ff00"/>
<rect x="684" y="597" width="1" height="2" fill="#00ff00"/>
<rect x="684" y="604" width="1" height="2" fill="#00ff00"/>
<rect x="683" y="595" width="1" height="2" fill="#00ff00"/>
<rect x="683" y="606" width="1" height="2" fill="#00ff00"/>
<rect x="690" y="594" width="11" height="1" fill="#00ff00"/>
<rect x="690" y="608" width="11" height="1" fill="#00ff00"/>
<rect x="686" y="601" width="1" height="1" fill="#00ff00"/>
<rect x="687" y="599" width="1" height="2" fill="#00ff00"/>
<rect x="687" y="602" width="1" height="2" fill="#00ff00"/>
<rect x="688" y="597" width="1" height="2" fill="#00ff00"/>
<rect x="688" y="604" width="1" height="2" fill="#00ff00"/>
<rect x="689" y="595" width="1" height="2" fill="#00ff00"/>
<rect x="689" y="606" width="1" height="2" fill="#00ff00"/>
<rect x="704" y="601" width="1" height="1" fill="#00ff00"/>
<rect x="703" y="599" width="1" height="2" fill="#00ff00"/>
<rect x="703" y="602" width="1" height="2" fill="#00ff00"/>
<rect x="702" y="597" width="1" height="2" fill="#00ff00"/>
<rect x="702" y="604" width="1" height="2" fill="#00ff00"/>
<rect x="701" y="595" width="1" height="2" fill="#00ff00"/>
<rect x="701" y="606" width="1" height="2" fill="#00ff00"/>
<rect x="708" y="594" width="34" height="1" fill="#00ff00"/>
<rect x="708" y="608" width="34" height="1" fill="#00ff00"/>
<rect x="704" y="601" width="1" height="1" fill="#00ff00"/>
<rect x="705" y="599" width="1" height="2" fill="#00ff00"/>
<rect x="705" y="602" width="1" height="2" fill="#00ff00"/>
<rect x="706" y="597" width="1" height="2" fill="#00ff00"/>
<rect x="706" y="604" width="1" height="2" fill="#00ff00"/>
<rect x="707" y="595" width="1" height="2" fill="#00ff00"/>
<rect x="707" y="606" width="1" height="2" fill="#00ff00"/>
<rect x="745" y="601" width="1" height="1" fill="#00ff00"/>
<rect x="744" y="599" width="1" height="2" fill="#00ff00"/>
<rect x="744" y="602" width="1" height="2" fill="#00ff00"/>
<rect x="743" y="597" width="1" height="2" fill="#00ff00"/>
<rect x="743" y="604" width="1" height="2" fill="#00ff00"/>
<rect x="742" y="595" width="1" height="2" fill="#00ff00"/>
<rect x="742" y="606" width="1" height="2" fill="#00ff00"/>
<rect x="749" y="594" width="23" height="1" fill="#00ff00"/>
<rect x="749" y="608" width="23" height="1" fill="#00ff00"/>
<rect x="745" y="601" width="1" height="1" fill="#00ff00"/>
<rect x="746" y="599" width="1" height="2" fill="#00ff00"/>
<rect x="746" y="602" width="1" height="2" fill="#00ff00"/>
<rect x="747" y="597" width="1" height="2" fill="#00ff00"/>
<rect x="747" y="604" width="1" height="2" fill="#00ff00"/>
<rect x="748" y="595" width="1" height="2" fill="#00ff00"/>
<rect x="748" y="606" width="1" height="2" fill="#00ff00"/>
<rect x="775" y="601" width="1" height="1" fill="#00ff00"/>
<rect x="774" y="599" width="1" height="2" fill="#00ff00"/>
<rect x="774" y="602" width="1" height="2" fill="#00ff00"/>
<rect x="773" y="597" width="1" height="2" fill="#00ff00"/>
<rect x="773" y="604" width="1" height="2" fill="#00ff00"/>
<rect x="772" y="595" width="1" height="2" fill="#00ff00"/>
<rect x="772" y="606" width="1" height="2" fill="#00ff00"/>
<rect x="779" y="594" width="5" height="1" fill="#00ff00"/>
<rect x="779" y="608" width="5" height="1" fill="#00ff00"/>
<rect x="775" y="601" width="1" height="1" fill="#00ff00"/>
<rect x="776" y="599" width="1" height="2" fill="#00ff00"/>
<rect x="776" y="602" width="1" height="2" fill="#00ff00"/>
<rect x="777" y="597" width="1" height="2" fill="#00ff00"/>
<rect x="777" y="604" width="1" height="2" fill="#00ff00"/>
<rect x="778" y="595" width="1" height="2" fill="#00ff00"/>
<rect x="778" y="606" width="1" height="2" fill="#00ff00"/>
<rect x="787" y="601" width="1" height="1" fill="#00ff00"/>
<rect x="786" y="599" width="1" height="2" fill="#00ff00"/>
<rect x="786" y="602" width="1" height="2" fill="#00ff00"/>
<rect x="785" y="597" width="1" height="2" fill="#00ff00"/>
<rect x="785" y="604" width="1" height="2" fill="#00ff00"/>
<rect x="784" y="595" width="1" height="2" fill="#00ff00"/>
<rect x="784" y="606" width="1" height="2" fill="#00ff00"/>
<rect x="787" y="594" width="6" height="15" fill="#00ff00"/>
<rect x="796" y="594" width="35" height="1" fill="#00ff00"/>
<rect x="796" y="608" width="35" height="1" fill="#00ff00"/>
<rect x="792" y="601" width="1" height="1" fill="#00ff00"/>
<rect x="793" y="599" width="1" height="2" fill="#00ff00"/>
<rect x="793" y="602" width="1" height="2" fill="#00ff00"/>
<rect x="794" y="597" width="1" height="2" fill="#00ff00"/>
<rect x="794" y="604" width="1" height="2" fill="#00ff00"/>
<rect x="795" y="595" width="1" height="2" fill="#00ff00"/>
<rect x="795" y="606" width="1" height="2" fill="#00ff00"/>
<rect x="834" y="601" width="1" height="1" fill="#00ff00"/>
<rect x="833" y="599" width="1" height="2" fill="#00ff00"/>
<rect x="833" y="602" width="1" height="2" fill="#00ff00"/>
<rect x="832" y="597" width="1" height="2" fill="#00ff00"/>
<rect x="832" y="604" width="1" height="2" fill="#00ff00"/>
<rect x="831" y="595" width="1" height="2" fill="#00ff00"/>
<rect x="831" y="606" width="1" height="2" fill="#00ff00"/>
<rect x="834" y="594" width="6" height="15" fill="#00ff00"/>
<rect x="843" y="594" width="29" height="1" fill="#00ff00"/>
<rect x="843" y="608" width="29" height="1" fill="#00ff00"/>
<rect x="839" y="601" width="1" height="1" fill="#00ff00"/>
<rect x="840" y="599" width="1" height="2" fill="#00ff00"/>
<rect x="840" y="602" width="1" height="2" fill="#00ff00"/>
<rect x="841" y="597" width="1" height="2" fill="#00ff00"/>
<rect x="841" y="604" width="1" height="2" fill="#00ff00"/>
<rect x="842" y="595" width="1" height="2" fill="#00ff00"/>
<rect x="842" y="606" width="1" height="2" fill="#00ff00"/>
<rect x="875" y="601" width="1" height="1" fill="#00ff00"/>
<rect x="874" y="599" width="1" height="2" fill="#00ff00"/>
<rect x="874" y="602" width="1" height="2" fill="#00ff00"/>
<rect x="873" y="597" width="1" height="2" fill="#00ff00"/>
<rect x="873" y="604" width="1" height="2" fill="#00ff00"/>
<rect x="872" y="595" width="1" height="2" fill="#00ff00"/>
<rect x="872" y="606" width="1" height="2" fill="#00ff00"/>
<rect x="875" y="594" width="7" height="15" fill="#00ff00"/>
<rect x="885" y="594" width="57" height="1" fill="#00ff00"/>
<rect x="885" y="608" width="57" height="1" fill="#00ff00"/>
<rect x="881" y="601" width="1" height="1" fill="#00ff00"/>
<rect x="882" y="599" width="1" height="2" fill="#00ff00"/>
<rect x="882" y="602" width="1" height="2" fill="#00ff00"/>
<rect x="883" y="597" width="1" height="2" fill="#00ff00"/>
<rect x="883" y="604" width="1" height="2" fill="#00ff00"/>
<rect x="884" y="595" width="1" height="2" fill="#00ff00"/>
<rect x="884" y="606" width="1" height="2" fill="#00ff00"/>
<rect x="945" y="601" width="1" height="1" fill="#00ff00"/>
<rect x="944" y="599" width="1" height="2" fill="#00ff00"/>
<rect x="944" y="602" width="1" height="2" fill="#00ff00"/>
<rect x="943" y="597" width="1" height="2" fill="#00ff00"/>
<rect x="943" y="604" width="1" height="2" fill="#00ff00"/>
<rect x="942" y="595" width="1" height="2" fill="#00ff00"/>
<rect x="942" y="606" width="1" height="2" fill="#00ff00"/>
<rect x="949" y="594" width="11" height="1" fill="#00ff00"/>
<rect x="949" y="608" width="11" height="1" fill="#00ff00"/>
<rect x="945" y="601" width="1" height="1" fill="#00ff00"/>
<rect x="946" y="599" width="1" height="2" fill="#00ff00"/>
<rect x="946" y="602" width="1" height="2" fill="#00ff00"/>
<rect x="947" y="597" width="1" height="2" fill="#00ff00"/>
<rect x="947" y="604" width="1" height="2" fill="#00ff00"/>
<rect x="948" y="595" width="1" height="2" fill="#00ff00"/>
<rect x="948" y="606" width="1" height="2" fill="#00ff00"/>
<rect x="963" y="601" width="1" height="1" fill="#00ff00"/>
<rect x="962" y="599" width="1" height="2" fill="#00ff00"/>
<rect x="962" y="602" width="1" height="2" fill="#00ff00"/>
<rect x="961" y="597" width="1" height="2" fill="#00ff00"/>
<rect x="961" y="604" width="1" height="2" fill="#00ff00"/>
<rect x="960" y="595" width="1" height="2" fill="#00ff00"/>
<rect x="960" y="606" width="1" height="2" fill="#00ff00"/>
<rect x="967" y="594" width="96" height="1" fill="#00ff00"/>
<rect x="967" y="608" width="96" height="1" fill="#00ff00"/>
<rect x="963" y="601" width="1" height="1" fill="#00ff00"/>
<rect x="964" y="599" width="1" height="2" fill="#00ff00"/>
<rect x="964" y="602" width="1" height="2" fill="#00ff00"/>
<rect x="965" y="597" width="1" height="2" fill="#00ff00"/>
<rect x="965" y="604" width="1" height="2" fill="#00ff00"/>
<rect x="966" y="595" width="1" height="2" fill="#00ff00"/>
<rect x="966" y="606" width="1" height="2" fill="#00ff00"/>
<rect x="1066" y="601" width="1" height="1" fill="#00ff00"/>
<rect x="1065" y="599" width="1" height="2" fill="#00ff00"/>
<rect x="1065" y="602" width="1" height="2" fill="#00ff00"/>
<rect x="1064" y="597" width="1" height="2" fill="#00ff00"/>
<rect x="1064" y="604" width="1" height="2" fill="#00ff00"/>
<rect x="1063" y="595" width="1" height="2" fill="#00ff00"/>
<rect x="1063" y="606" width="1" height="2" fill="#00ff00"/>
<rect x="487" y="599" width="2" height="1" fill="#ffffff"/>
<rect x="486" y="600" width="1" height="1" fill="#ffffff"/>
<rect x="489" y="600" width="1" height="1" fill="#ffffff"/>
<rect x="486" y="601" width="1" height="1" fill="#ffffff"/>
<rect x="489" y="601" width="1" height="1" fill="#ffffff"/>
<rect x="486" y="602" width="1" height="1" fill="#ffffff"/>
<rect x="489" y="602" width="1" height="1" fill="#ffffff"/>
<rect x="486" y="603" width="1" height="1" fill="#ffffff"/>
<rect x="489" y="603" width="1" height="1" fill="#ffffff"/>
<rect x="486" y="604" width="1" height="1" fill="#ffffff"/>
<rect x="489" y="604" width="1" height="1" fill="#ffffff"/>
<rect x="487" y="605" width="2" height="1" fill="#ffffff"/>
<rect x="514" y="599" width="2" height="1" fill="#ffffff"/>
<rect x="513" y="600" width="1" height="1" fill="#ffffff"/>
<rect x="516" y="600" width="1" height="1" fill="#ffffff"/>
<rect x="513" y="601" width="1" height="1" fill="#ffffff"/>
<rect x="516" y="601" width="1" height="1" fill="#ffffff"/>
<rect x="515" y="602" width="1" height="1" fill="#ffffff"/>
<rect x="514" y="603" width="1" height="1" fill="#ffffff"/>
<rect x="513" y="604" width="1" height="1" fill="#ffffff"/>
<rect x="513" y="605" width="4" height="1" fill="#ffffff"/>
<rect x="551" y="599" width="4" height="1" fill="#ffffff"/>
<rect x="553" y="600" width="1" height="1" fill="#ffffff"/>
<rect x="553" y="601" width="1" height="1" fill="#ffffff"/>
<rect x="552" y="602" width="1" height="1" fill="#ffffff"/>
<rect x="552" y="603" width="1" height="1" fill="#ffffff"/>
<rect x="552" y="604" width="1" height="1" fill="#ffffff"/>
<rect x="552" y="605" width="1" height="1" fill="#ffffff"/>
<rect x="599" y="599" width="4" height="1" fill="#ffffff"/>
<rect x="599" y="600" width="1" height="1" fill="#ffffff"/>
<rect x="599" y="601" width="3" height="1" fill="#ffffff"/>
<rect x="602" y="602" width="1" height="1" fill="#ffffff"/>
<rect x="602" y="603" width="1" height="1" fill="#ffffff"/>
<rect x="599" y="604" width="1" height="1" fill="#ffffff"/>
<rect x="602" y="604" width="1" height="1" fill="#ffffff"/>
<rect x="600" y="605" width="2" height="1" fill="#ffffff"/>
<rect x="635" y="599" width="2" height="1" fill="#ffffff"/>
<rect x="634" y="600" width="1" height="1" fill="#ffffff"/>
<rect x="637" y="600" width="1" height="1" fill="#ffffff"/>
<rect x="634" y="601" width="1" height="1" fill="#ffffff"/>
<rect x="637" y="601" width="1" height="1" fill="#ffffff"/>
<rect x="635" y="602" width="2" height="1" fill="#ffffff"/>
<rect x="634" y="603" width="1" height="1" fill="#ffffff"/>
<rect x="637" y="603" width="1" height="1" fill="#ffffff"/>
<rect x="634" y="604" width="1" height="1" fill="#ffffff"/>
<rect x="637" y="604" width="1" height="1" fill="#ffffff"/>
<rect x="635" y="605" width="2" height="1" fill="#ffffff"/>
<rect x="666" y="599" width="3" height="1" fill="#ffffff"/>
<rect x="665" y="600" width="2" height="1" fill="#ffffff"/>
<rect x="665" y="601" width="1" height="1" fill="#ffffff"/>
<rect x="665" y="602" width="4" height="1" fill="#ffffff"/>
<rect x="665" y="603" width="1" height="1" fill="#ffffff"/>
<rect x="669" y="603" width="1" height="1" fill="#ffffff"/>
<rect x="665" y="604" width="1" height="1" fill="#ffffff"/>
<rect x="669" y="604" width="1" height="1" fill="#ffffff"/>
<rect x="666" y="605" width="3" height="1" fill="#ffffff"/>
<rect x="693" y="599" width="2" height="1" fill="#ffffff"/>
<rect x="692" y="600" width="1" height="1" fill="#ffffff"/>
<rect x="695" y="600" width="1" height="1" fill="#ffffff"/>
<rect x="692" y="601" width="1" height="1" fill="#ffffff"/>
<rect x="695" y="601" width="1" height="1" fill="#ffffff"/>
<rect x="693" y="602" width="3" height="1" fill="#ffffff"/>
<rect x="695" y="603" width="1" height="1" fill="#ffffff"/>
<rect x="695" y="604" width="1" height="1" fill="#ffffff"/>
<rect x="693" y="605" width="2" height="1" fill="#ffffff"/>
<rect x="722" y="599" width="4" height="1" fill="#ffffff"/>
<rect x="724" y="600" width="1" height="1" fill="#ffffff"/>
<rect x="724" y="601" width="1" height="1" fill="#ffffff"/>
<rect x="723" y="602" width="1" height="1" fill="#ffffff"/>
<rect x="723" y="603" width="1" height="1" fill="#ffffff"/>
<rect x="723" y="604" width="1" height="1" fill="#ffffff"/>
<rect x="723" y="605" width="1" height="1" fill="#ffffff"/>
<rect x="758" y="599" width="2" height="1" fill="#ffffff"/>
<rect x="757" y="600" width="1" height="1" fill="#ffffff"/>
<rect x="760" y="600" width="1" height="1" fill="#ffffff"/>
<rect x="757" y="601" width="1" height="1" fill="#ffffff"/>
<rect x="760" y="601" width="1" height="1" fill="#ffffff"/>
<rect x="757" y="602" width="1" height="1" fill="#ffffff"/>
<rect x="760" y="602" width="1" height="1" fill="#ffffff"/>
<rect x="757" y="603" width="1" height="1" fill="#ffffff"/>
<rect x="760" y="603" width="1" height="1" fill="#ffffff"/>
<rect x="757" y="604" width="1" height="1" fill="#ffffff"/>
<rect x="760" y="604" width="1" height="1" fill="#ffffff"/>
<rect x="758" y="605" width="2" height="1" fill="#ffffff"/>
<rect x="810" y="599" width="3" height="1" fill="#ffffff"/>
<rect x="809" y="600" width="2" height="1" fill="#ffffff"/>
<rect x="809" y="601" width="1" height="1" fill="#ffffff"/>
<rect x="809" y="602" width="4" height="1" fill="#ffffff"/>
<rect x="809" y="603" width="1" height="1" fill="#ffffff"/>
<rect x="813" y="603" width="1" height="1" fill="#ffffff"/>
<rect x="809" y="604" width="1" height="1" fill="#ffffff"/>
<rect x="813" y="604" width="1" height="1" fill="#ffffff"/>
<rect x="810" y="605" width="3" height="1" fill="#ffffff"/>
<rect x="854" y="599" width="4" height="1" fill="#ffffff"/>
<rect x="856" y="600" width="1" height="1" fill="#ffffff"/>
<rect x="856" y="601" width="1" height="1" fill="#ffffff"/>
<rect x="855" y="602" width="1" height="1" fill="#ffffff"/>
<rect x="855" y="603" width="1" height="1" fill="#ffffff"/>
<rect x="855" y="604" width="1" height="1" fill="#ffffff"/>
<rect x="855" y="605" width="1" height="1" fill="#ffffff"/>
<rect x="910" y="599" width="3" height="1" fill="#ffffff"/>
<rect x="909" y="600" width="2" height="1" fill="#ffffff"/>
<rect x="909" y="601" width="1" height="1" fill="#ffffff"/>
<rect x="909" y="602" width="4" height="1" fill="#ffffff"/>
<rect x="909" y="603" width="1" height="1" fill="#ffffff"/>
<rect x="913" y="603" width="1" height="1" fill="#ffffff"/>
<rect x="909" y="604" width="1" height="1" fill="#ffffff"/>
<rect x="913" y="604" width="1" height="1" fill="#ffffff"/>
<rect x="910" y="605" width="3" height="1" fill="#ffffff"/>
<rect x="952" y="599" width="2" height="1" fill="#ffffff"/>
<rect x="951" y="600" width="1" height="1" fill="#ffffff"/>
<rect x="954" y="600" width="1" height="1" fill="#ffffff"/>
<rect x="951" y="601" width="1" height="1" fill="#ffffff"/>
<rect x="954" y="601" width="1" height="1" fill="#ffffff"/>
<rect x="952" y="602" width="2" height="1" fill="#ffffff"/>
<rect x="951" y="603" width="1" height="1" fill="#ffffff"/>
<rect x="954" y="603" width="1" height="1" fill="#ffffff"/>
<rect x="951" y="604" width="1" height="1" fill="#ffffff"/>
<rect x="954" y="604" width="1" height="1" fill="#ffffff"/>
<rect x="952" y="605" width="2" height="1" fill="#ffffff"/>
<rect x="1012" y="599" width="3" height="1" fill="#ffffff"/>
<rect x="1011" y="600" width="2" height="1" fill="#ffffff"/>
<rect x="1011" y="601" width="1" height="1" fill="#ffffff"/>
<rect x="1011" y="602" width="4" height="1" fill="#ffffff"/>
<rect x="1011" y="603" width="1" height="1" fill="#ffffff"/>
<rect x="1015" y="603" width="1" height="1" fill="#ffffff"/>
<rect x="1011" y="604" width="1" height="1" fill="#ffffff"/>
<rect x="1015" y="604" width="1" height="1" fill="#ffffff"/>
<rect x="1012" y="605" width="3" height="1" fill="#ffffff"/>
<rect x="479" y="614" width="2" height="15" fill="#00ff00"/>
<rect x="484" y="614" width="11" height="1" fill="#00ff00"/>
<rect x="484" y="628" width="11" height="1" fill="#00ff00"/>
<rect x="480" y="621" width="1" height="1" fill="#00ff00"/>
<rect x="481" y="619" width="1" height="2" fill="#00ff00"/>
<rect x="481" y="622" width="1" height="2" fill="#00ff00"/>
<rect x="482" y="617" width="1" height="2" fill="#00ff00"/>
<rect x="482" y="624" width="1" height="2" fill="#00ff00"/>
<rect x="483" y="615" width="1" height="2" fill="#00ff00"/>
<rect x="483" y="626" width="1" height="2" fill="#00ff00"/>
<rect x="498" y="621" width="1" height="1" fill="#00ff00"/>
<rect x="497" y="619" width="1" height="2" fill="#00ff00"/>
<rect x="497" y="622" width="1" height="2" fill="#00ff00"/>
<rect x="496" y="617" width="1" height="2" fill="#00ff00"/>
<rect x="496" y="624" width="1" height="2" fill="#00ff00"/>
<rect x="495" y="615" width="1" height="2" fill="#00ff00"/>
<rect x="495" y="626" width="1" height="2" fill="#00ff00"/>
<rect x="502" y="614" width="70" height="1" fill="#00ff00"/>
<rect x="502" y="628" width="70" height="1" fill="#00ff00"/>
<rect x="498" y="621" width="1" height="1" fill="#00ff00"/>
<rect x="499" y="619" width="1" height="2" fill="#00ff00"/>
<rect x="499" y="622" width="1" height="2" fill="#00ff00"/>
<rect x="500" y="617" width="1" height="2" fill="#00ff00"/>
<rect x="500" y="624" width="1" height="2" fill="#00ff00"/>
<rect x="501" y="615" width="1" height="2" fill="#00ff00"/>
<rect x="501" y="626" width="1" height="2" fill="#00ff00"/>
<rect x="575" y="621" width="1" height="1" fill="#00ff00"/>
<rect x="574" y="619" width="1" height="2" fill="#00ff00"/>
<rect x="574" y="622" width="1" height="2" fill="#00ff00"/>
<rect x="573" y="617" width="1" height="2" fill="#00ff00"/>
<rect x="573" y="624" width="1" height="2" fill="#00ff00"/>
<rect x="572" y="615" width="1" height="2" fill="#00ff00"/>
<rect x="572" y="626" width="1" height="2" fill="#00ff00"/>
<rect x="579" y="614" width="28" height="1" fill="#00ff00"/>
<rect x="579" y="628" width="28" height="1" fill="#00ff00"/>
<rect x="575" y="621" width="1" height="1" fill="#00ff00"/>
<rect x="576" y="619" width="1" height="2" fill="#00ff00"/>
<rect x="576" y="622" width="1" height="2" fill="#00ff00"/>
<rect x="577" y="617" width="1" height="2" fill="#00ff00"/>
<rect x="577" y="624" width="1" height="2" fill="#00ff00"/>
<rect x="578" y="615" width="1" height="2" fill="#00ff00"/>
<rect x="578" y="626" width="1" height="2" fill="#00ff00"/>
<rect x="610" y="621" width="1" height="1" fill="#00ff00"/>
<rect x="609" y="619" width="1" height="2" fill="#00ff00"/>
<rect x="609" y="622" width="1" height="2" fill="#00ff00"/>
<rect x="608" y="617" width="1" height="2" fill="#00ff00"/>
<rect x="608" y="624" width="1" height="2" fill="#00ff00"/>
<rect x="607" y="615" width="1" height="2" fill="#00ff00"/>
<rect x="607" y="626" width="1" height="2" fill="#00ff00"/>
<rect x="614" y="614" width="34" height="1" fill="#00ff00"/>
<rect x="614" y="628" width="34" height="1" fill="#00ff00"/>
<rect x="610" y="621" width="1" height="1" fill="#00ff00"/>
<rect x="611" y="619" width="1" height="2" fill="#00ff00"/>
<rect x="611" y="622" width="1" height="2" fill="#00ff00"/>
<rect x="612" y="617" width="1" height="2" fill="#00ff00"/>
<rect x="612" y="624" width="1" height="2" fill="#00ff00"/>
<rect x="613" y="615" width="1" height="2" fill="#00ff00"/>
<rect x="613" y="626" width="1" height="2" fill="#00ff00"/>
<rect x="651" y="621" width="1" height="1" fill="#00ff00"/>
<rect x="650" y="619" width="1" height="2" fill="#00ff00"/>
<rect x="650" y="622" width="1" height="2" fill="#00ff00"/>
<rect x="649" y="617" width="1" height="2" fill="#00ff00"/>
<rect x="649" y="624" width="1" height="2" fill="#00ff00"/>
<rect x="648" y="615" width="1" height="2" fill="#00ff00"/>
<rect x="648" y="626" width="1" height="2" fill="#00ff00"/>
<rect x="655" y="614" width="17" height="1" fill="#00ff00"/>
<rect x="655" y="628" width="17" height="1" fill="#00ff00"/>
<rect x="651" y="621" width="1" height="1" fill="#00ff00"/>
<rect x="652" y="619" width="1" height="2" fill="#00ff00"/>
<rect x="652" y="622" width="1" height="2" fill="#00ff00"/>
<rect x="653" y="617" width="1" height="2" fill="#00ff00"/>
<rect x="653" y="624" width="1" height="2" fill="#00ff00"/>
<rect x="654" y="615" width="1" height="2" fill="#00ff00"/>
<rect x="654" y="626" width="1" height="2" fill="#00ff00"/>
<rect x="675" y="621" width="1" height="1" fill="#00ff00"/>
<rect x="674" y="619" width="1" height="2" fill="#00ff00"/>
<rect x="674" y="622" width="1" height="2" fill="#00ff00"/>
<rect x="673" y="617" width="1" height="2" fill="#00ff00"/>
<rect x="673" y="624" width="1" height="2" fill="#00ff00"/>
<rect x="672" y="615" width="1" height="2" fill="#00ff00"/>
<rect x="672" y="626" width="1" height="2" fill="#00ff00"/>
<rect x="679" y="614" width="22" height="1" fill="#00ff00"/>
<rect x="679" y="628" width="22" height="1" fill="#00ff00"/>
<rect x="675" y="621" width="1" height="1" fill="#00ff00"/>
<rect x="676" y="619" width="1" height="2" fill="#00ff00"/>
<rect x="676" y="622" width="1" height="2" fill="#00ff00"/>
<rect x="677" y="617" width="1" height="2" fill="#00ff00"/>
<rect x="677" y="624" width="1" height="2" fill="#00ff00"/>
<rect x="678" y="615" width="1" height="2" fill="#00ff00"/>
<rect x="678" y="626" width="1" height="2" fill="#00ff00"/>
<rect x="704" y="621" width="1" height="1" fill="#00ff00"/>
<rect x="703" y="619" width="1" height="2" fill="#00ff00"/>
<rect x="703" y="622" width="1" height="2" fill="#00ff00"/>
<rect x="702" y="617" width="1" height="2" fill="#00ff00"/>
<rect x="702" y="624" width="1" height="2" fill="#00ff00"/>
<rect x="701" y="615" width="1" height="2" fill="#00ff00"/>
<rect x="701" y="626" width="1" height="2" fill="#00ff00"/>
<rect x="708" y="614" width="5" height="1" fill="#00ff00"/>
<rect x="708" y="628" width="5" height="1" fill="#00ff00"/>
<rect x="704" y="621" width="1" height="1" fill="#00ff00"/>
<rect x="705" y="619" width="1" height="2" fill="#00ff00"/>
<rect x="705" y="622" width="1" height="2" fill="#00ff00"/>
<rect x="706" y="617" width="1" height="2" fill="#00ff00"/>
<rect x="706" y="624" width="1" height="2" fill="#00ff00"/>
<rect x="707" y="615" width="1" height="2" fill="#00ff00"/>
<rect x="707" y="626" width="1" height="2" fill="#00ff00"/>
<rect x="716" y="621" width="1" height="1" fill="#00ff00"/>
<rect x="715" y="619" width="1" height="2" fill="#00ff00"/>
<rect x="715" y="622" width="1" height="2" fill="#00ff00"/>
<rect x="714" y="617" width="1" height="2" fill="#00ff00"/>
<rect x="714" y="624" width="1" height="2" fill="#00ff00"/>
<rect x="713" y="615" width="1" height="2" fill="#00ff00"/>
<rect x="713" y="626" width="1" height="2" fill="#00ff00"/>
<rect x="720" y="614" width="22" height="1" fill="#00ff00"/>
<rect x="720" y="628" width="22" height="1" fill="#00ff00"/>
<rect x="716" y="621" width="1" height="1" fill="#00ff00"/>
<rect x="717" y="619" width="1" height="2" fill="#00ff00"/>
<rect x="717" y="622" width="1" height="2" fill="#00ff00"/>
<rect x="718" y="617" width="1" height="2" fill="#00ff00"/>
<rect x="718" y="624" width="1" height="2" fill="#00ff00"/>
<rect x="719" y="615" width="1" height="2" fill="#00ff00"/>
<rect x="719" y="626" width="1" height="2" fill="#00ff00"/>
<rect x="745" y="621" width="1" height="1" fill="#00ff00"/>
<rect x="744" y="619" width="1" height="2" fill="#00ff00"/>
<rect x="744" y="622" width="1" height="2" fill="#00ff00"/>
<rect x="743" y="617" width="1" height="2" fill="#00ff00"/>
<rect x="743" y="624" width="1" height="2" fill="#00ff00"/>
<rect x="742" y="615" width="1" height="2" fill="#00ff00"/>
<rect x="742" y="626" width="1" height="2" fill="#00ff00"/>
<rect x="749" y="614" width="23" height="1" fill="#00ff00"/>
<rect x="749" y="628" width="23" height="1" fill="#00ff00"/>
<rect x="745" y="621" width="1" height="1" fill="#00ff00"/>
<rect x="746" y="619" width="1" height="2" fill="#00ff00"/>
<rect x="746" y="622" width="1" height="2" fill="#00ff00"/>
<rect x="747" y="617" width="1" height="2" fill="#00ff00"/>
<rect x="747" y="624" width="1" height="2" fill="#00ff00"/>
<rect x="748" y="615" width="1" height="2" fill="#00ff00"/>
<rect x="748" y="626" width="1" height="2" fill="#00ff00"/>
<rect x="775" y="621" width="1" height="1" fill="#00ff00"/>
<rect x="774" y="619" width="1" height="2" fill="#00ff00"/>
<rect x="774" y="622" width="1" height="2" fill="#00ff00"/>
<rect x="773" y="617" width="1" height="2" fill="#00ff00"/>
<rect x="773" y="624" width="1" height="2" fill="#00ff00"/>
<rect x="772" y="615" width="1" height="2" fill="#00ff00"/>
<rect x="772" y="626" width="1" height="2" fill="#00ff00"/>
<rect x="775" y="614" width="13" height="15" fill="#00ff00"/>
<rect x="791" y="614" width="34" height="1" fill="#00ff00"/>
<rect x="791" y="628" width="34" height="1" fill="#00ff00"/>
<rect x="787" y="621" width="1" height="1" fill="#00ff00"/>
<rect x="788" y="619" width="1" height="2" fill="#00ff00"/>
<rect x="788" y="622" width="1" height="2" fill="#00ff00"/>
<rect x="789" y="617" width="1" height="2" fill="#00ff00"/>
<rect x="789" y="624" width="1" height="2" fill="#00ff00"/>
<rect x="790" y="615" width="1" height="2" fill="#00ff00"/>
<rect x="790" y="626" width="1" height="2" fill="#00ff00"/>
<rect x="828" y="621" width="1" height="1" fill="#00ff00"/>
<rect x="827" y="619" width="1" height="2" fill="#00ff00"/>
<rect x="827" y="622" width="1" height="2" fill="#00ff00"/>
<rect x="826" y="617" width="1" height="2" fill="#00ff00"/>
<rect x="826" y="624" width="1" height="2" fill="#00ff00"/>
<rect x="825" y="615" width="1" height="2" fill="#00ff00"/>
<rect x="825" y="626" width="1" height="2" fill="#00ff00"/>
<rect x="828" y="621" width="1" height="1" fill="#00ff00"/>
<rect x="829" y="619" width="1" height="2" fill="#00ff00"/>
<rect x="829" y="622" width="1" height="2" fill="#00ff00"/>
<rect x="830" y="617" width="1" height="2" fill="#00ff00"/>
<rect x="830" y="624" width="1" height="2" fill="#00ff00"/>
<rect x="831" y="615" width="1" height="2" fill="#00ff00"/>
<rect x="831" y="626" width="1" height="2" fill="#00ff00"/>
<rect x="834" y="621" width="1" height="1" fill="#00ff00"/>
<rect x="833" y="619" width="1" height="2" fill="#00ff00"/>
<rect x="833" y="622" width="1" height="2" fill="#00ff00"/>
<rect x="832" y="617" width="1" height="2" fill="#00ff00"/>
<rect x="832" y="624" width="1" height="2" fill="#00ff00"/>
<rect x="831" y="615" width="1" height="2" fill="#00ff00"/>
<rect x="831" y="626" width="1" height="2" fill="#00ff00"/>
<rect x="838" y="614" width="28" height="1" fill="#00ff00"/>
<rect x="838" y="628" width="28" height="1" fill="#00ff00"/>
<rect x="834" y="621" width="1" height="1" fill="#00ff00"/>
<rect x="835" y="619" width="1" height="2" fill="#00ff00"/>
<rect x="835" y="622" width="1" height="2" fill="#00ff00"/>
<rect x="836" y="617" width="1" height="2" fill="#00ff00"/>
<rect x="836" y="624" width="1" height="2" fill="#00ff00"/>
<rect x="837" y="615" width="1" height="2" fill="#00ff00"/>
<rect x="837" y="626" width="1" height="2" fill="#00ff00"/>
<rect x="869" y="621" width="1" height="1" fill="#00ff00"/>
<rect x="868" y="619" width="1" height="2" fill="#00ff00"/>
<rect x="868" y="622" width="1" height="2" fill="#00ff00"/>
<rect x="867" y="617" width="1" height="2" fill="#00ff00"/>
<rect x="867" y="624" width="1" height="2" fill="#00ff00"/>
<rect x="866" y="615" width="1" height="2" fill="#00ff00"/>
<rect x="866" y="626" width="1" height="2" fill="#00ff00"/>
<rect x="869" y="614" width="7" height="15" fill="#00ff00"/>
<rect x="879" y="614" width="22" height="1" fill="#00ff00"/>
<rect x="879" y="628" width="22" height="1" fill="#00ff00"/>
<rect x="875" y="621" width="1" height="1" fill="#00ff00"/>
<rect x="876" y="619" width="1" height="2" fill="#00ff00"/>
<rect x="876" y="622" width="1" height="2" fill="#00ff00"/>
<rect x="877" y="617" width="1" height="2" fill="#00ff00"/>
<rect x="877" y="624" width="1" height="2" fill="#00ff00"/>
<rect x="878" y="615" width="1" height="2" fill="#00ff00"/>
<rect x="878" y="626" width="1" height="2" fill="#00ff00"/>
<rect x="904" y="621" width="1" height="1" fill="#00ff00"/>
<rect x="903" y="619" width="1" height="2" fill="#00ff00"/>
<rect x="903" y="622" width="1" height="2" fill="#00ff00"/>
<rect x="902" y="617" width="1" height="2" fill="#00ff00"/>
<rect x="902" y="624" width="1" height="2" fill="#00ff00"/>
<rect x="901" y="615" width="1" height="2" fill="#00ff00"/>
<rect x="901" y="626" width="1" height="2" fill="#00ff00"/>
<rect x="908" y="614" width="52" height="1" fill="#00ff00"/>
<rect x="908" y="628" width="52" height="1" fill="#00ff00"/>
<rect x="904" y="621" width="1" height="1" fill="#00ff00"/>
<rect x="905" y="619" width="1" height="2" fill="#00ff00"/>
<rect x="905" y="622" width="1" height="2" fill="#00ff00"/>
<rect x="906" y="617" width="1" height="2" fill="#00ff00"/>
<rect x="906" y="624" width="1" height="2" fill="#00ff00"/>
<rect x="907" y="615" width="1" height="2" fill="#00ff00"/>
<rect x="907" y="626" width="1" height="2" fill="#00ff00"/>
<rect x="963" y="621" width="1" height="1" fill="#00ff00"/>
<rect x="962" y="619" width="1" height="2" fill="#00ff00"/>
<rect x="962" y="622" width="1" height="2" fill="#00ff00"/>
<rect x="961" y="617" width="1" height="2" fill="#00ff00"/>
<rect x="961" y="624" width="1" height="2" fill="#00ff00"/>
<rect x="960" y="615" width="1" height="2" fill="#00ff00"/>
<rect x="960" y="626" width="1" height="2" fill="#00ff00"/>
<rect x="967" y="614" width="5" height="1" fill="#00ff00"/>
<rect x="967" y="628" width="5" height="1" fill="#00ff00"/>
<rect x="963" y="621" width="1" height="1" fill="#00ff00"/>
<rect x="964" y="619" width="1" height="2" fill="#00ff00"/>
<rect x="964" y="622" width="1" height="2" fill="#00ff00"/>
<rect x="965" y="617" width="1" height="2" fill="#00ff00"/>
<rect x="965" y="624" width="1" height="2" fill="#00ff00"/>
<rect x="966" y="615" width="1" height="2" fill="#00ff00"/>
<rect x="966" y="626" width="1" height="2" fill="#00ff00"/>
<rect x="975" y="621" width="1" height="1" fill="#00ff00"/>
<rect x="974" y="619" width="1" height="2" fill="#00ff00"/>
<rect x="974" y="622" width="1" height="2" fill="#00ff00"/>
<rect x="973" y="617" width="1" height="2" fill="#00ff00"/>
<rect x="973" y="624" width="1" height="2" fill="#00ff00"/>
<rect x="972" y="615" width="1" height="2" fill="#00ff00"/>
<rect x="972" y="626" width="1" height="2" fill="#00ff00"/>
<rect x="979" y="614" width="84" height="1" fill="#00ff00"/>
<rect x="979" y="628" width="84" height="1" fill="#00ff00"/>
<rect x="975" y="621" width="1" height="1" fill="#00ff00"/>
<rect x="976" y="619" width="1" height="2" fill="#00ff00"/>
<rect x="976" y="622" width="1" height="2" fill="#00ff00"/>
<rect x="977" y="617" width="1" height="2" fill="#00ff00"/>
<rect x="977" y="624" width="1" height="2" fill="#00ff00"/>
<rect x="978" y="615" width="1" height="2" fill="#00ff00"/>
<rect x="978" y="626" width="1" height="2" fill="#00ff00"/>
<rect x="1066" y="621" width="1" height="1" fill="#00ff00"/>
<rect x="1065" y="619" width="1" height="2" fill="#00ff00"/>
<rect x="1065" y="622" width="1" height="2" fill="#00ff00"/>
<rect x="1064" y="617" width="1" height="2" fill="#00ff00"/>
<rect x="1064" y="624" width="1" height="2" fill="#00ff00"/>
<rect x="1063" y="615" width="1" height="2" fill="#00ff00"/>
<rect x="1063" y="626" width="1" height="2" fill="#00ff00"/>
<rect x="487" y="619" width="2" height="1" fill="#ffffff"/>
<rect x="486" y="620" width="1" height="1" fill="#ffffff"/>
<rect x="489" y="620" width="1" height="1" fill="#ffffff"/>
<rect x="486" y="621" width="1" height="1" fill="#ffffff"/>
<rect x="489" y="621" width="1" height="1" fill="#ffffff"/>
<rect x="486" y="622" width="1" height="1" fill="#ffffff"/>
<rect x="489" y="622" width="1" height="1" fill="#ffffff"/>
<rect x="486" y="623" width="1" height="1" fill="#ffffff"/>
<rect x="489" y="623" width="1" height="1" fill="#ffffff"/>
<rect x="486" y="624" width="1" height="1" fill="#ffffff"/>
<rect x="489" y="624" width="1" height="1" fill="#ffffff"/>
<rect x="487" y="625" width="2" height="1" fill="#ffffff"/>
<rect x="536" y="618" width="1" height="1" fill="#ffffff"/>
<rect x="536" y="619" width="1" height="1" fill="#ffffff"/>
<rect x="535" y="620" width="2" height="1" fill="#ffffff"/>
<rect x="534" y="621" width="1" height="1" fill="#ffffff"/>
<rect x="536" y="621" width="1" height="1" fill="#ffffff"/>
<rect x="533" y="622" width="1" height="1" fill="#ffffff"/>
<rect x="536" y="622" width="1" height="1" fill="#ffffff"/>
<rect x="533" y="623" width="5" height="1" fill="#ffffff"/>
<rect x="536" y="624" width="1" height="1" fill="#ffffff"/>
<rect x="536" y="625" width="1" height="1" fill="#ffffff"/>
<rect x="590" y="619" width="4" height="1" fill="#ffffff"/>
<rect x="592" y="620" width="1" height="1" fill="#ffffff"/>
<rect x="592" y="621" width="1" height="1" fill="#ffffff"/>
<rect x="591" y="622" width="1" height="1" fill="#ffffff"/>
<rect x="591" y="623" width="1" height="1" fill="#ffffff"/>
<rect x="591" y="624" width="1" height="1" fill="#ffffff"/>
<rect x="591" y="625" width="1" height="1" fill="#ffffff"/>
<rect x="628" y="619" width="3" height="1" fill="#ffffff"/>
<rect x="627" y="620" width="2" height="1" fill="#ffffff"/>
<rect x="627" y="621" width="1" height="1" fill="#ffffff"/>
<rect x="627" y="622" width="4" height="1" fill="#ffffff"/>
<rect x="627" y="623" width="1" height="1" fill="#ffffff"/>
<rect x="631" y="623" width="1" height="1" fill="#ffffff"/>
<rect x="627" y="624" width="1" height="1" fill="#ffffff"/>
<rect x="631" y="624" width="1" height="1" fill="#ffffff"/>
<rect x="628" y="625" width="3" height="1" fill="#ffffff"/>
<rect x="661" y="619" width="2" height="1" fill="#ffffff"/>
<rect x="660" y="620" width="1" height="1" fill="#ffffff"/>
<rect x="663" y="620" width="1" height="1" fill="#ffffff"/>
<rect x="660" y="621" width="1" height="1" fill="#ffffff"/>
<rect x="663" y="621" width="1" height="1" fill="#ffffff"/>
<rect x="661" y="622" width="2" height="1" fill="#ffffff"/>
<rect x="660" y="623" width="1" height="1" fill="#ffffff"/>
<rect x="663" y="623" width="1" height="1" fill="#ffffff"/>
<rect x="660" y="624" width="1" height="1" fill="#ffffff"/>
<rect x="663" y="624" width="1" height="1" fill="#ffffff"/>
<rect x="661" y="625" width="2" height="1" fill="#ffffff"/>
<rect x="687" y="619" width="4" height="1" fill="#ffffff"/>
<rect x="689" y="620" width="1" height="1" fill="#ffffff"/>
<rect x="689" y="621" width="1" height="1" fill="#ffffff"/>
<rect x="688" y="622" width="1" height="1" fill="#ffffff"/>
<rect x="688" y="623" width="1" height="1" fill="#ffffff"/>
<rect x="688" y="624" width="1" height="1" fill="#ffffff"/>
<rect x="688" y="625" width="1" height="1" fill="#ffffff"/>
<rect x="729" y="619" width="2" height="1" fill="#ffffff"/>
<rect x="728" y="620" width="1" height="1" fill="#ffffff"/>
<rect x="731" y="620" width="1" height="1" fill="#ffffff"/>
<rect x="728" y="621" width="1" height="1" fill="#ffffff"/>
<rect x="731" y="621" width="1" height="1" fill="#ffffff"/>
<rect x="729" y="622" width="2" height="1" fill="#ffffff"/>
<rect x="728" y="623" width="1" height="1" fill="#ffffff"/>
<rect x="731" y="623" width="1" height="1" fill="#ffffff"/>
<rect x="728" y="624" width="1" height="1" fill="#ffffff"/>
<rect x="731" y="624" width="1" height="1" fill="#ffffff"/>
<rect x="729" y="625" width="2" height="1" fill="#ffffff"/>
<rect x="758" y="619" width="2" height="1" fill="#ffffff"/>
<rect x="757" y="620" width="1" height="1" fill="#ffffff"/>
<rect x="760" y="620" width="1" height="1" fill="#ffffff"/>
<rect x="757" y="621" width="1" height="1" fill="#ffffff"/>
<rect x="760" y="621" width="1" height="1" fill="#ffffff"/>
<rect x="757" y="622" width="1" height="1" fill="#ffffff"/>
<rect x="760" y="622" width="1" height="1" fill="#ffffff"/>
<rect x="757" y="623" width="1" height="1" fill="#ffffff"/>
<rect x="760" y="623" width="1" height="1" fill="#ffffff"/>
<rect x="757" y="624" width="1" height="1" fill="#ffffff"/>
<rect x="760" y="624" width="1" height="1" fill="#ffffff"/>
<rect x="758" y="625" width="2" height="1" fill="#ffffff"/>
<rect x="806" y="619" width="2" height="1" fill="#ffffff"/>
<rect x="805" y="620" width="1" height="1" fill="#ffffff"/>
<rect x="808" y="620" width="1" height="1" fill="#ffffff"/>
<rect x="808" y="621" width="1" height="1" fill="#ffffff"/>
<rect x="806" y="622" width="2" height="1" fill="#ffffff"/>
<rect x="808" y="623" width="1" height="1" fill="#ffffff"/>
<rect x="805" y="624" width="1" height="1" fill="#ffffff"/>
<rect x="808" y="624" width="1" height="1" fill="#ffffff"/>
<rect x="806" y="625" width="2" height="1" fill="#ffffff"/>
<rect x="849" y="619" width="3" height="1" fill="#ffffff"/>
<rect x="848" y="620" width="2" height="1" fill="#ffffff"/>
<rect x="848" y="621" width="1" height="1" fill="#ffffff"/>
<rect x="848" y="622" width="4" height="1" fill="#ffffff"/>
<rect x="848" y="623" width="1" height="1" fill="#ffffff"/>
<rect x="852" y="623" width="1" height="1" fill="#ffffff"/>
<rect x="848" y="624" width="1" height="1" fill="#ffffff"/>
<rect x="852" y="624" width="1" height="1" fill="#ffffff"/>
<rect x="849" y="625" width="3" height="1" fill="#ffffff"/>
<rect x="887" y="619" width="4" height="1" fill="#ffffff"/>
<rect x="889" y="620" width="1" height="1" fill="#ffffff"/>
<rect x="889" y="621" width="1" height="1" fill="#ffffff"/>
<rect x="888" y="622" width="1" height="1" fill="#ffffff"/>
<rect x="888" y="623" width="1" height="1" fill="#ffffff"/>
<rect x="888" y="624" width="1" height="1" fill="#ffffff"/>
<rect x="888" y="625" width="1" height="1" fill="#ffffff"/>
<rect x="931" y="619" width="3" height="1" fill="#ffffff"/>
<rect x="930" y="620" width="2" height="1" fill="#ffffff"/>
<rect x="930" y="621" width="1" height="1" fill="#ffffff"/>
<rect x="930" y="622" width="4" height="1" fill="#ffffff"/>
<rect x="930" y="623" width="1" height="1" fill="#ffffff"/>
<rect x="934" y="623" width="1" height="1" fill="#ffffff"/>
<rect x="930" y="624" width="1" height="1" fill="#ffffff"/>
<rect x="934" y="624" width="1" height="1" fill="#ffffff"/>
<rect x="931" y="625" width="3" height="1" fill="#ffffff"/>
<rect x="1018" y="619" width="4" height="1" fill="#ffffff"/>
<rect x="1020" y="620" width="1" height="1" fill="#ffffff"/>
<rect x="1020" y="621" width="1" height="1" fill="#ffffff"/>
<rect x="1019" y="622" width="1" height="1" fill="#ffffff"/>
<rect x="1019" y="623" width="1" height="1" fill="#ffffff"/>
<rect x="1019" y="624" width="1" height="1" fill="#ffffff"/>
<rect x="1019" y="625" width="1" height="1" fill="#ffffff"/>
<rect x="479" y="634" width="2" height="15" fill="#00ff00"/>
<rect x="484" y="634" width="11" height="1" fill="#00ff00"/>
<rect x="484" y="648" width="11" height="1" fill="#00ff00"/>
<rect x="480" y="641" width="1" height="1" fill="#00ff00"/>
<rect x="481" y="639" width="1" height="2" fill="#00ff00"/>
<rect x="481" y="642" width="1" height="2" fill="#00ff00"/>
<rect x="482" y="637" width="1" height="2" fill="#00ff00"/>
<rect x="482" y="644" width="1" height="2" fill="#00ff00"/>
<rect x="483" y="635" width="1" height="2" fill="#00ff00"/>
<rect x="483" y="646" width="1" height="2" fill="#00ff00"/>
<rect x="498" y="641" width="1" height="1" fill="#00ff00"/>
<rect x="497" y="639" width="1" height="2" fill="#00ff00"/>
<rect x="497" y="642" width="1" height="2" fill="#00ff00"/>
<rect x="496" y="637" width="1" height="2" fill="#00ff00"/>
<rect x="496" y="644" width="1" height="2" fill="#00ff00"/>
<rect x="495" y="635" width="1" height="2" fill="#00ff00"/>
<rect x="495" y="646" width="1" height="2" fill="#00ff00"/>
<rect x="502" y="634" width="105" height="1" fill="#00ff00"/>
<rect x="502" y="648" width="105" height="1" fill="#00ff00"/>
<rect x="498" y="641" width="1" height="1" fill="#00ff00"/>
<rect x="499" y="639" width="1" height="2" fill="#00ff00"/>
<rect x="499" y="642" width="1" height="2" fill="#00ff00"/>
<rect x="500" y="637" width="1" height="2" fill="#00ff00"/>
<rect x="500" y="644" width="1" height="2" fill="#00ff00"/>
<rect x="501" y="635" width="1" height="2" fill="#00ff00"/>
<rect x="501" y="646" width="1" height="2" fill="#00ff00"/>
<rect x="610" y="641" width="1" height="1" fill="#00ff00"/>
<rect x="609" y="639" width="1" height="2" fill="#00ff00"/>
<rect x="609" y="642" width="1" height="2" fill="#00ff00"/>
<rect x="608" y="637" width="1" height="2" fill="#00ff00"/>
<rect x="608" y="644" width="1" height="2" fill="#00ff00"/>
<rect x="607" y="635" width="1" height="2" fill="#00ff00"/>
<rect x="607" y="646" width="1" height="2" fill="#00ff00"/>
<rect x="614" y="634" width="58" height="1" fill="#00ff00"/>
<rect x="614" y="648" width="58" height="1" fill="#00ff00"/>
<rect x="610" y="641" width="1" height="1" fill="#00ff00"/>
<rect x="611" y="639" width="1" height="2" fill="#00ff00"/>
<rect x="611" y="642" width="1" height="2" fill="#00ff00"/>
<rect x="612" y="637" width="1" height="2" fill="#00ff00"/>
<rect x="612" y="644" width="1" height="2" fill="#00ff00"/>
<rect x="613" y="635" width="1" height="2" fill="#00ff00"/>
<rect x="613" y="646" width="1" height="2" fill="#00ff00"/>
<rect x="675" y="641" width="1" height="1" fill="#00ff00"/>
<rect x="674" y="639" width="1" height="2" fill="#00ff00"/>
<rect x="674" y="642" width="1" height="2" fill="#00ff00"/>
<rect x="673" y="637" width="1" height="2" fill="#00ff00"/>
<rect x="673" y="644" width="1" height="2" fill="#00ff00"/>
<rect x="672" y="635" width="1" height="2" fill="#00ff00"/>
<rect x="672" y="646" width="1" height="2" fill="#00ff00"/>
<rect x="679" y="634" width="34" height="1" fill="#00ff00"/>
<rect x="679" y="648" width="34" height="1" fill="#00ff00"/>
<rect x="675" y="641" width="1" height="1" fill="#00ff00"/>
<rect x="676" y="639" width="1" height="2" fill="#00ff00"/>
<rect x="676" y="642" width="1" height="2" fill="#00ff00"/>
<rect x="677" y="637" width="1" height="2" fill="#00ff00"/>
<rect x="677" y="644" width="1" height="2" fill="#00ff00"/>
<rect x="678" y="635" width="1" height="2" fill="#00ff00"/>
<rect x="678" y="646" width="1" height="2" fill="#00ff00"/>
<rect x="716" y="641" width="1" height="1" fill="#00ff00"/>
<rect x="715" y="639" width="1" height="2" fill="#00ff00"/>
<rect x="715" y="642" width="1" height="2" fill="#00ff00"/>
<rect x="714" y="637" width="1" height="2" fill="#00ff00"/>
<rect x="714" y="644" width="1" height="2" fill="#00ff00"/>
<rect x="713" y="635" width="1" height="2" fill="#00ff00"/>
<rect x="713" y="646" width="1" height="2" fill="#00ff00"/>
<rect x="720" y="634" width="22" height="1" fill="#00ff00"/>
<rect x="720" y="648" width="22" height="1" fill="#00ff00"/>
<rect x="716" y="641" width="1" height="1" fill="#00ff00"/>
<rect x="717" y="639" width="1" height="2" fill="#00ff00"/>
<rect x="717" y="642" width="1" height="2" fill="#00ff00"/>
<rect x="718" y="637" width="1" height="2" fill="#00ff00"/>
<rect x="718" y="644" width="1" height="2" fill="#00ff00"/>
<rect x="719" y="635" width="1" height="2" fill="#00ff00"/>
<rect x="719" y="646" width="1" height="2" fill="#00ff00"/>
<rect x="745" y="641" width="1" height="1" fill="#00ff00"/>
<rect x="744" y="639" width="1" height="2" fill="#00ff00"/>
<rect x="744" y="642" width="1" height="2" fill="#00ff00"/>
<rect x="743" y="637" width="1" height="2" fill="#00ff00"/>
<rect x="743" y="644" width="1" height="2" fill="#00ff00"/>
<rect x="742" y="635" width="1" height="2" fill="#00ff00"/>
<rect x="742" y="646" width="1" height="2" fill="#00ff00"/>
<rect x="749" y="634" width="23" height="1" fill="#00ff00"/>
<rect x="749" y="648" width="23" height="1" fill="#00ff00"/>
<rect x="745" y="641" width="1" height="1" fill="#00ff00"/>
<rect x="746" y="639" width="1" height="2" fill="#00ff00"/>
<rect x="746" y="642" width="1" height="2" fill="#00ff00"/>
<rect x="747" y="637" width="1" height="2" fill="#00ff00"/>
<rect x="747" y="644" width="1" height="2" fill="#00ff00"/>
<rect x="748" y="635" width="1" height="2" fill="#00ff00"/>
<rect x="748" y="646" width="1" height="2" fill="#00ff00"/>
<rect x="775" y="641" width="1" height="1" fill="#00ff00"/>
<rect x="774" y="639" width="1" height="2" fill="#00ff00"/>
<rect x="774" y="642" width="1" height="2" fill="#00ff00"/>
<rect x="773" y="637" width="1" height="2" fill="#00ff00"/>
<rect x="773" y="644" width="1" height="2" fill="#00ff00"/>
<rect x="772" y="635" width="1" height="2" fill="#00ff00"/>
<rect x="772" y="646" width="1" height="2" fill="#00ff00"/>
<rect x="775" y="634" width="7" height="15" fill="#00ff00"/>
<rect x="785" y="634" width="40" height="1" fill="#00ff00"/>
<rect x="785" y="648" width="40" height="1" fill="#00ff00"/>
<rect x="781" y="641" width="1" height="1" fill="#00ff00"/>
<rect x="782" y="639" width="1" height="2" fill="#00ff00"/>
<rect x="782" y="642" width="1" height="2" fill="#00ff00"/>
<rect x="783" y="637" width="1" height="2" fill="#00ff00"/>
<rect x="783" y="644" width="1" height="2" fill="#00ff00"/>
<rect x="784" y="635" width="1" height="2" fill="#00ff00"/>
<rect x="784" y="646" width="1" height="2" fill="#00ff00"/>
<rect x="828" y="641" width="1" height="1" fill="#00ff00"/>
<rect x="827" y="639" width="1" height="2" fill="#00ff00"/>
<rect x="827" y="642" width="1" height="2" fill="#00ff00"/>
<rect x="826" y="637" width="1" height="2" fill="#00ff00"/>
<rect x="826" y="644" width="1" height="2" fill="#00ff00"/>
<rect x="825" y="635" width="1" height="2" fill="#00ff00"/>
<rect x="825" y="646" width="1" height="2" fill="#00ff00"/>
<rect x="832" y="634" width="34" height="1" fill="#00ff00"/>
<rect x="832" y="648" width="34" height="1" fill="#00ff00"/>
<rect x="828" y="641" width="1" height="1" fill="#00ff00"/>
<rect x="829" y="639" width="1" height="2" fill="#00ff00"/>
<rect x="829" y="642" width="1" height="2" fill="#00ff00"/>
<rect x="830" y="637" width="1" height="2" fill="#00ff00"/>
<rect x="830" y="644" width="1" height="2" fill="#00ff00"/>
<rect x="831" y="635" width="1" height="2" fill="#00ff00"/>
<rect x="831" y="646" width="1" height="2" fill="#00ff00"/>
<rect x="869" y="641" width="1" height="1" fill="#00ff00"/>
<rect x="868" y="639" width="1" height="2" fill="#00ff00"/>
<rect x="868" y="642" width="1" height="2" fill="#00ff00"/>
<rect x="867" y="637" width="1" height="2" fill="#00ff00"/>
<rect x="867" y="644" width="1" height="2" fill="#00ff00"/>
<rect x="866" y="635" width="1" height="2" fill="#00ff00"/>
<rect x="866" y="646" width="1" height="2" fill="#00ff00"/>
<rect x="873" y="634" width="28" height="1" fill="#00ff00"/>
<rect x="873" y="648" width="28" height="1" fill="#00ff00"/>
<rect x="869" y="641" width="1" height="1" fill="#00ff00"/>
<rect x="870" y="639" width="1" height="2" fill="#00ff00"/>
<rect x="870" y="642" width="1" height="2" fill="#00ff00"/>
<rect x="871" y="637" width="1" height="2" fill="#00ff00"/>
<rect x="871" y="644" width="1" height="2" fill="#00ff00"/>
<rect x="872" y="635" width="1" height="2" fill="#00ff00"/>
<rect x="872" y="646" width="1" height="2" fill="#00ff00"/>
<rect x="904" y="641" width="1" height="1" fill="#00ff00"/>
<rect x="903" y="639" width="1" height="2" fill="#00ff00"/>
<rect x="903" y="642" width="1" height="2" fill="#00ff00"/>
<rect x="902" y="637" width="1" height="2" fill="#00ff00"/>
<rect x="902" y="644" width="1" height="2" fill="#00ff00"/>
<rect x="901" y="635" width="1" height="2" fill="#00ff00"/>
<rect x="901" y="646" width="1" height="2" fill="#00ff00"/>
<rect x="908" y="634" width="64" height="1" fill="#00ff00"/>
<rect x="908" y="648" width="64" height="1" fill="#00ff00"/>
<rect x="904" y="641" width="1" height="1" fill="#00ff00"/>
<rect x="905" y="639" width="1" height="2" fill="#00ff00"/>
<rect x="905" y="642" width="1" height="2" fill="#00ff00"/>
<rect x="906" y="637" width="1" height="2" fill="#00ff00"/>
<rect x="906" y="644" width="1" height="2" fill="#00ff00"/>
<rect x="907" y="635" width="1" height="2" fill="#00ff00"/>
<rect x="907" y="646" width="1" height="2" fill="#00ff00"/>
<rect x="975" y="641" width="1" height="1" fill="#00ff00"/>
<rect x="974" y="639" width="1" height="2" fill="#00ff00"/>
<rect x="974" y="642" width="1" height="2" fill="#00ff00"/>
<rect x="973" y="637" width="1" height="2" fill="#00ff00"/>
<rect x="973" y="644" width="1" height="2" fill="#00ff00"/>
<rect x="972" y="635" width="1" height="2" fill="#00ff00"/>
<rect x="972" y="646" width="1" height="2" fill="#00ff00"/>
<rect x="979" y="634" width="84" height="1" fill="#00ff00"/>
<rect x="979" y="648" width="84" height="1" fill="#00ff00"/>
<rect x="975" y="641" width="1" height="1" fill="#00ff00"/>
<rect x="976" y="639" width="1" height="2" fill="#00ff00"/>
<rect x="976" y="642" width="1" height="2" fill="#00ff00"/>
<rect x="977" y="637" width="1" height="2" fill="#00ff00"/>
<rect x="977" y="644" width="1" height="2" fill="#00ff00"/>
<rect x="978" y="635" width="1" height="2" fill="#00ff00"/>
<rect x="978" y="646" width="1" height="2" fill="#00ff00"/>
<rect x="1066" y="641" width="1" height="1" fill="#00ff00"/>
<rect x="1065" y="639" width="1" height="2" fill="#00ff00"/>
<rect x="1065" y="642" width="1" height="2" fill="#00ff00"/>
<rect x="1064" y="637" width="1" height="2" fill="#00ff00"/>
<rect x="1064" y="644" width="1" height="2" fill="#00ff00"/>
<rect x="1063" y="635" width="1" height="2" fill="#00ff00"/>
<rect x="1063" y="646" width="1" height="2" fill="#00ff00"/>
<rect x="487" y="639" width="2" height="1" fill="#ffffff"/>
<rect x="486" y="640" width="1" height="1" fill="#ffffff"/>
<rect x="489" y="640" width="1" height="1" fill="#ffffff"/>
<rect x="486" y="641" width="1" height="1" fill="#ffffff"/>
<rect x="489" y="641" width="1" height="1" fill="#ffffff"/>
<rect x="486" y="642" width="1" height="1" fill="#ffffff"/>
<rect x="489" y="642" width="1" height="1" fill="#ffffff"/>
<rect x="486" y="643" width="1" height="1" fill="#ffffff"/>
<rect x="489" y="643" width="1" height="1" fill="#ffffff"/>
<rect x="486" y="644" width="1" height="1" fill="#ffffff"/>
<rect x="489" y="644" width="1" height="1" fill="#ffffff"/>
<rect x="487" y="645" width="2" height="1" fill="#ffffff"/>
<rect x="551" y="639" width="3" height="1" fill="#ffffff"/>
<rect x="550" y="640" width="2" height="1" fill="#ffffff"/>
<rect x="550" y="641" width="1" height="1" fill="#ffffff"/>
<rect x="550" y="642" width="4" height="1" fill="#ffffff"/>
<rect x="550" y="643" width="1" height="1" fill="#ffffff"/>
<rect x="554" y="643" width="1" height="1" fill="#ffffff"/>
<rect x="550" y="644" width="1" height="1" fill="#ffffff"/>
<rect x="554" y="644" width="1" height="1" fill="#ffffff"/>
<rect x="551" y="645" width="3" height="1" fill="#ffffff"/>
<rect x="640" y="639" width="4" height="1" fill="#ffffff"/>
<rect x="642" y="640" width="1" height="1" fill="#ffffff"/>
<rect x="642" y="641" width="1" height="1" fill="#ffffff"/>
<rect x="641" y="642" width="1" height="1" fill="#ffffff"/>
<rect x="641" y="643" width="1" height="1" fill="#ffffff"/>
<rect x="641" y="644" width="1" height="1" fill="#ffffff"/>
<rect x="641" y="645" width="1" height="1" fill="#ffffff"/>
<rect x="694" y="639" width="2" height="1" fill="#ffffff"/>
<rect x="693" y="640" width="1" height="1" fill="#ffffff"/>
<rect x="696" y="640" width="1" height="1" fill="#ffffff"/>
<rect x="693" y="641" width="1" height="1" fill="#ffffff"/>
<rect x="696" y="641" width="1" height="1" fill="#ffffff"/>
<rect x="694" y="642" width="2" height="1" fill="#ffffff"/>
<rect x="693" y="643" width="1" height="1" fill="#ffffff"/>
<rect x="696" y="643" width="1" height="1" fill="#ffffff"/>
<rect x="693" y="644" width="1" height="1" fill="#ffffff"/>
<rect x="696" y="644" width="1" height="1" fill="#ffffff"/>
<rect x="694" y="645" width="2" height="1" fill="#ffffff"/>
<rect x="729" y="639" width="2" height="1" fill="#ffffff"/>
<rect x="728" y="640" width="1" height="1" fill="#ffffff"/>
<rect x="731" y="640" width="1" height="1" fill="#ffffff"/>
<rect x="728" y="641" width="1" height="1" fill="#ffffff"/>
<rect x="731" y="641" width="1" height="1" fill="#ffffff"/>
<rect x="729" y="642" width="3" height="1" fill="#ffffff"/>
<rect x="731" y="643" width="1" height="1" fill="#ffffff"/>
<rect x="731" y="644" width="1" height="1" fill="#ffffff"/>
<rect x="729" y="645" width="2" height="1" fill="#ffffff"/>
<rect x="758" y="639" width="2" height="1" fill="#ffffff"/>
<rect x="757" y="640" width="1" height="1" fill="#ffffff"/>
<rect x="760" y="640" width="1" height="1" fill="#ffffff"/>
<rect x="757" y="641" width="1" height="1" fill="#ffffff"/>
<rect x="760" y="641" width="1" height="1" fill="#ffffff"/>
<rect x="757" y="642" width="1" height="1" fill="#ffffff"/>
<rect x="760" y="642" width="1" height="1" fill="#ffffff"/>
<rect x="757" y="643" width="1" height="1" fill="#ffffff"/>
<rect x="760" y="643" width="1" height="1" fill="#ffffff"/>
<rect x="757" y="644" width="1" height="1" fill="#ffffff"/>
<rect x="760" y="644" width="1" height="1" fill="#ffffff"/>
<rect x="758" y="645" width="2" height="1" fill="#ffffff"/>
<rect x="803" y="639" width="2" height="1" fill="#ffffff"/>
<rect x="802" y="640" width="1" height="1" fill="#ffffff"/>
<rect x="805" y="640" width="1" height="1" fill="#ffffff"/>
<rect x="802" y="641" width="1" height="1" fill="#ffffff"/>
<rect x="805" y="641" width="1" height="1" fill="#ffffff"/>
<rect x="804" y="642" width="1" height="1" fill="#ffffff"/>
<rect x="803" y="643" width="1" height="1" fill="#ffffff"/>
<rect x="802" y="644" width="1" height="1" fill="#ffffff"/>
<rect x="802" y="645" width="4" height="1" fill="#ffffff"/>
<rect x="847" y="639" width="2" height="1" fill="#ffffff"/>
<rect x="846" y="640" width="1" height="1" fill="#ffffff"/>
<rect x="849" y="640" width="1" height="1" fill="#ffffff"/>
<rect x="849" y="641" width="1" height="1" fill="#ffffff"/>
<rect x="847" y="642" width="2" height="1" fill="#ffffff"/>
<rect x="849" y="643" width="1" height="1" fill="#ffffff"/>
<rect x="846" y="644" width="1" height="1" fill="#ffffff"/>
<rect x="849" y="644" width="1" height="1" fill="#ffffff"/>
<rect x="847" y="645" width="2" height="1" fill="#ffffff"/>
<rect x="884" y="639" width="3" height="1" fill="#ffffff"/>
<rect x="883" y="640" width="2" height="1" fill="#ffffff"/>
<rect x="883" y="641" width="1" height="1" fill="#ffffff"/>
<rect x="883" y="642" width="4" height="1" fill="#ffffff"/>
<rect x="883" y="643" width="1" height="1" fill="#ffffff"/>
<rect x="887" y="643" width="1" height="1" fill="#ffffff"/>
<rect x="883" y="644" width="1" height="1" fill="#ffffff"/>
<rect x="887" y="644" width="1" height="1" fill="#ffffff"/>
<rect x="884" y="645" width="3" height="1" fill="#ffffff"/>
<rect x="937" y="639" width="4" height="1" fill="#ffffff"/>
<rect x="939" y="640" width="1" height="1" fill="#ffffff"/>
<rect x="939" y="641" width="1" height="1" fill="#ffffff"/>
<rect x="938" y="642" width="1" height="1" fill="#ffffff"/>
<rect x="938" y="643" width="1" height="1" fill="#ffffff"/>
<rect x="938" y="644" width="1" height="1" fill="#ffffff"/>
<rect x="938" y="645" width="1" height="1" fill="#ffffff"/>
<rect x="1019" y="639" width="2" height="1" fill="#ffffff"/>
<rect x="1018" y="640" width="1" height="1" fill="#ffffff"/>
<rect x="1021" y="640" width="1" height="1" fill="#ffffff"/>
<rect x="1018" y="641" width="1" height="1" fill="#ffffff"/>
<rect x="1021" y="641" width="1" height="1" fill="#ffffff"/>
<rect x="1019" y="642" width="2" height="1" fill="#ffffff"/>
<rect x="1018" y="643" width="1" height="1" fill="#ffffff"/>
<rect x="1021" y="643" width="1" height="1" fill="#ffffff"/>
<rect x="1018" y="644" width="1" height="1" fill="#ffffff"/>
<rect x="1021" y="644" width="1" height="1" fill="#ffffff"/>
<rect x="1019" y="645" width="2" height="1" fill="#ffffff"/>
<rect x="482" y="654" width="581" height="1" fill="#00ff00"/>
<rect x="482" y="668" width="581" height="1" fill="#00ff00"/>
<rect x="478" y="661" width="1" height="1" fill="#00ff00"/>
<rect x="479" y="659" width="1" height="2" fill="#00ff00"/>
<rect x="479" y="662" width="1" height="2" fill="#00ff00"/>
<rect x="480" y="657" width="1" height="2" fill="#00ff00"/>
<rect x="480" y="664" width="1" height="2" fill="#00ff00"/>
<rect x="481" y="655" width="1" height="2" fill="#00ff00"/>
<rect x="481" y="666" width="1" height="2" fill="#00ff00"/>
<rect x="1066" y="661" width="1" height="1" fill="#00ff00"/>
<rect x="1065" y="659" width="1" height="2" fill="#00ff00"/>
<rect x="1065" y="662" width="1" height="2" fill="#00ff00"/>
<rect x="1064" y="657" width="1" height="2" fill="#00ff00"/>
<rect x="1064" y="664" width="1" height="2" fill="#00ff00"/>
<rect x="1063" y="655" width="1" height="2" fill="#00ff00"/>
<rect x="1063" y="666" width="1" height="2" fill="#00ff00"/>
<rect x="746" y="659" width="2" height="1" fill="#ffffff"/>
<rect x="745" y="660" width="1" height="1" fill="#ffffff"/>
<rect x="748" y="660" width="1" height="1" fill="#ffffff"/>
<rect x="745" y="661" width="1" height="1" fill="#ffffff"/>
<rect x="748" y="661" width="1" height="1" fill="#ffffff"/>
<rect x="745" y="662" width="1" height="1" fill="#ffffff"/>
<rect x="748" y="662" width="1" height="1" fill="#ffffff"/>
<rect x="745" y="663" width="1" height="1" fill="#ffffff"/>
<rect x="748" y="663" width="1" height="1" fill="#ffffff"/>
<rect x="745" y="664" width="1" height="1" fill="#ffffff"/>
<rect x="748" y="664" width="1" height="1" fill="#ffffff"/>
<rect x="746" y="665" width="2" height="1" fill="#ffffff"/>
<rect x="752" y="659" width="2" height="1" fill="#ffffff"/>
<rect x="751" y="660" width="1" height="1" fill="#ffffff"/>
<rect x="754" y="660" width="1" height="1" fill="#ffffff"/>
<rect x="751" y="661" width="1" height="1" fill="#ffffff"/>
<rect x="754" y="661" width="1" height="1" fill="#ffffff"/>
<rect x="751" y="662" width="1" height="1" fill="#ffffff"/>
<rect x="754" y="662" width="1" height="1" fill="#ffffff"/>
<rect x="751" y="663" width="1" height="1" fill="#ffffff"/>
<rect x="754" y="663" width="1" height="1" fill="#ffffff"/>
<rect x="751" y="664" width="1" height="1" fill="#ffffff"/>
<rect x="754" y="664" width="1" height="1" fill="#ffffff"/>
<rect x="752" y="665" width="2" height="1" fill="#ffffff"/>
<rect x="758" y="659" width="2" height="1" fill="#ffffff"/>
<rect x="757" y="660" width="1" height="1" fill="#ffffff"/>
<rect x="760" y="660" width="1" height="1" fill="#ffffff"/>
<rect x="757" y="661" width="1" height="1" fill="#ffffff"/>
<rect x="760" y="661" width="1" height="1" fill="#ffffff"/>
<rect x="757" y="662" width="1" height="1" fill="#ffffff"/>
<rect x="760" y="662" width="1" height="1" fill="#ffffff"/>
<rect x="757" y="663" width="1" height="1" fill="#ffffff"/>
<rect x="760" y="663" width="1" height="1" fill="#ffffff"/>
<rect x="757" y="664" width="1" height="1" fill="#ffffff"/>
<rect x="760" y="664" width="1" height="1" fill="#ffffff"/>
<rect x="758" y="665" width="2" height="1" fill="#ffffff"/>
<rect x="764" y="659" width="2" height="1" fill="#ffffff"/>
<rect x="763" y="660" width="1" height="1" fill="#ffffff"/>
<rect x="766" y="660" width="1" height="1" fill="#ffffff"/>
<rect x="763" y="661" width="1" height="1" fill="#ffffff"/>
<rect x="766" y="661" width="1" height="1" fill="#ffffff"/>
<rect x="763" y="662" width="1" height="1" fill="#ffffff"/>
<rect x="766" y="662" width="1" height="1" fill="#ffffff"/>
<rect x="763" y="663" width="1" height="1" fill="#ffffff"/>
<rect x="766" y="663" width="1" height="1" fill="#ffffff"/>
<rect x="763" y="664" width="1" height="1" fill="#ffffff"/>
<rect x="766" y="664" width="1" height="1" fill="#ffffff"/>
<rect x="764" y="665" width="2" height="1" fill="#ffffff"/>
<rect x="770" y="659" width="2" height="1" fill="#ffffff"/>
<rect x="769" y="660" width="1" height="1" fill="#ffffff"/>
<rect x="772" y="660" width="1" height="1" fill="#ffffff"/>
<rect x="769" y="661" width="1" height="1" fill="#ffffff"/>
<rect x="772" y="661" width="1" height="1" fill="#ffffff"/>
<rect x="769" y="662" width="1" height="1" fill="#ffffff"/>
<rect x="772" y="662" width="1" height="1" fill="#ffffff"/>
<rect x="769" y="663" width="1" height="1" fill="#ffffff"/>
<rect x="772" y="663" width="1" height="1" fill="#ffffff"/>
<rect x="769" y="664" width="1" height="1" fill="#ffffff"/>
<rect x="772" y="664" width="1" height="1" fill="#ffffff"/>
<rect x="770" y="665" width="2" height="1" fill="#ffffff"/>
<rect x="776" y="659" width="2" height="1" fill="#ffffff"/>
<rect x="775" y="660" width="1" height="1" fill="#ffffff"/>
<rect x="778" y="660" width="1" height="1" fill="#ffffff"/>
<rect x="775" y="661" width="1" height="1" fill="#ffffff"/>
<rect x="778" y="661" width="1" height="1" fill="#ffffff"/>
<rect x="775" y="662" width="1" height="1" fill="#ffffff"/>
<rect x="778" y="662" width="1" height="1" fill="#ffffff"/>
<rect x="775" y="663" width="1" height="1" fill="#ffffff"/>
<rect x="778" y="663" width="1" height="1" fill="#ffffff"/>
<rect x="775" y="664" width="1" height="1" fill="#ffffff"/>
<rect x="778" y="664" width="1" height="1" fill="#ffffff"/>
<rect x="776" y="665" width="2" height="1" fill="#ffffff"/>
<rect x="782" y="659" width="2" height="1" fill="#ffffff"/>
<rect x="781" y="660" width="1" height="1" fill="#ffffff"/>
<rect x="784" y="660" width="1" height="1" fill="#ffffff"/>
<rect x="781" y="661" width="1" height="1" fill="#ffffff"/>
<rect x="784" y="661" width="1" height="1" fill="#ffffff"/>
<rect x="781" y="662" width="1" height="1" fill="#ffffff"/>
<rect x="784" y="662" width="1" height="1" fill="#ffffff"/>
<rect x="781" y="663" width="1" height="1" fill="#ffffff"/>
<rect x="784" y="663" width="1" height="1" fill="#ffffff"/>
<rect x="781" y="664" width="1" height="1" fill="#ffffff"/>
<rect x="784" y="664" width="1" height="1" fill="#ffffff"/>
<rect x="782" y="665" width="2" height="1" fill="#ffffff"/>
<rect x="788" y="659" width="2" height="1" fill="#ffffff"/>
<rect x="787" y="660" width="1" height="1" fill="#ffffff"/>
<rect x="790" y="660" width="1" height="1" fill="#ffffff"/>
<rect x="787" y="661" width="1" height="1" fill="#ffffff"/>
<rect x="790" y="661" width="1" height="1" fill="#ffffff"/>
<rect x="788" y="662" width="2" height="1" fill="#ffffff"/>
<rect x="787" y="663" width="1" height="1" fill="#ffffff"/>
<rect x="790" y="663" width="1" height="1" fill="#ffffff"/>
<rect x="787" y="664" width="1" height="1" fill="#ffffff"/>
<rect x="790" y="664" width="1" height="1" fill="#ffffff"/>
<rect x="788" y="665" width="2" height="1" fill="#ffffff"/>
<rect x="478" y="31" width="1" height="651" fill="#c0c0c0"/>
<rect x="595" y="31" width="1" height="651" fill="#c0c0c0"/>
<rect x="713" y="31" width="1" height="651" fill="#c0c0c0"/>
<rect x="831" y="31" width="1" height="651" fill="#c0c0c0"/>
<rect x="948" y="31" width="1" height="651" fill="#c0c0c0"/>
<rect x="482" y="16" width="2" height="1" fill="#ffffff"/>
<rect x="481" y="17" width="1" height="1" fill="#ffffff"/>
<rect x="484" y="17" width="1" height="1" fill="#ffffff"/>
<rect x="481" y="18" width="1" height="1" fill="#ffffff"/>
<rect x="484" y="18" width="1" height="1" fill="#ffffff"/>
<rect x="481" y="19" width="1" height="1" fill="#ffffff"/>
<rect x="484" y="19" width="1" height="1" fill="#ffffff"/>
<rect x="481" y="20" width="1" height="1" fill="#ffffff"/>
<rect x="484" y="20" width="1" height="1" fill="#ffffff"/>
<rect x="481" y="21" width="1" height="1" fill="#ffffff"/>
<rect x="484" y="21" width="1" height="1" fill="#ffffff"/>
<rect x="482" y="22" width="2" height="1" fill="#ffffff"/>
<rect x="492" y="18" width="4" height="1" fill="#ffffff"/>
<rect x="493" y="19" width="1" height="1" fill="#ffffff"/>
<rect x="496" y="19" width="1" height="1" fill="#ffffff"/>
<rect x="493" y="20" width="1" height="1" fill="#ffffff"/>
<rect x="496" y="20" width="1" height="1" fill="#ffffff"/>
<rect x="493" y="21" width="1" height="1" fill="#ffffff"/>
<rect x="496" y="21" width="1" height="1" fill="#ffffff"/>
<rect x="492" y="22" width="3" height="1" fill="#ffffff"/>
<rect x="496" y="22" width="2" height="1" fill="#ffffff"/>
<rect x="500" y="18" width="3" height="1" fill="#ffffff"/>
<rect x="499" y="19" width="1" height="1" fill="#ffffff"/>
<rect x="500" y="20" width="2" height="1" fill="#ffffff"/>
<rect x="502" y="21" width="1" height="1" fill="#ffffff"/>
<rect x="499" y="22" width="3" height="1" fill="#ffffff"/>
<rect x="599" y="16" width="2" height="1" fill="#ffffff"/>
<rect x="598" y="17" width="1" height="1" fill="#ffffff"/>
<rect x="601" y="17" width="1" height="1" fill="#ffffff"/>
<rect x="598" y="18" width="1" height="1" fill="#ffffff"/>
<rect x="601" y="18" width="1" height="1" fill="#ffffff"/>
<rect x="600" y="19" width="1" height="1" fill="#ffffff"/>
<rect x="599" y="20" width="1" height="1" fill="#ffffff"/>
<rect x="598" y="21" width="1" height="1" fill="#ffffff"/>
<rect x="598" y="22" width="4" height="1" fill="#ffffff"/>
<rect x="605" y="16" width="2" height="1" fill="#ffffff"/>
<rect x="604" y="17" width="1" height="1" fill="#ffffff"/>
<rect x="607" y="17" width="1" height="1" fill="#ffffff"/>
<rect x="604" y="18" width="1" height="1" fill="#ffffff"/>
<rect x="607" y="18" width="1" height="1" fill="#ffffff"/>
<rect x="604" y="19" width="1" height="1" fill="#ffffff"/>
<rect x="607" y="19" width="1" height="1" fill="#ffffff"/>
<rect x="604" y="20" width="1" height="1" fill="#ffffff"/>
<rect x="607" y="20" width="1" height="1" fill="#ffffff"/>
<rect x="604" y="21" width="1" height="1" fill="#ffffff"/>
<rect x="607" y="21" width="1" height="1" fill="#ffffff"/>
<rect x="605" y="22" width="2" height="1" fill="#ffffff"/>
<rect x="611" y="16" width="2" height="1" fill="#ffffff"/>
<rect x="610" y="17" width="1" height="1" fill="#ffffff"/>
<rect x="613" y="17" width="1" height="1" fill="#ffffff"/>
<rect x="610" y="18" width="1" height="1" fill="#ffffff"/>
<rect x="613" y="18" width="1" height="1" fill="#ffffff"/>
<rect x="610" y="19" width="1" height="1" fill="#ffffff"/>
<rect x="613" y="19" width="1" height="1" fill="#ffffff"/>
<rect x="610" y="20" width="1" height="1" fill="#ffffff"/>
<rect x="613" y="20" width="1" height="1" fill="#ffffff"/>
<rect x="610" y="21" width="1" height="1" fill="#ffffff"/>
<rect x="613" y="21" width="1" height="1" fill="#ffffff"/>
<rect x="611" y="22" width="2" height="1" fill="#ffffff"/>
<rect x="621" y="18" width="4" height="1" fill="#ffffff"/>
<rect x="622" y="19" width="1" height="1" fill="#ffffff"/>
<rect x="625" y="19" width="1" height="1" fill="#ffffff"/>
<rect x="622" y="20" width="1" height="1" fill="#ffffff"/>
<rect x="625" y="20" width="1" height="1" fill="#ffffff"/>
<rect x="622" y="21" width="1" height="1" fill="#ffffff"/>
<rect x="625" y="21" width="1" height="1" fill="#ffffff"/>
<rect x="621" y="22" width="3" height="1" fill="#ffffff"/>
<rect x="625" y="22" width="2" height="1" fill="#ffffff"/>
<rect x="629" y="18" width="3" height="1" fill="#ffffff"/>
<rect x="628" y="19" width="1" height="1" fill="#ffffff"/>
<rect x="629" y="20" width="2" height="1" fill="#ffffff"/>
<rect x="631" y="21" width="1" height="1" fill="#ffffff"/>
<rect x="628" y="22" width="3" height="1" fill="#ffffff"/>
<rect x="718" y="15" width="1" height="1" fill="#ffffff"/>
<rect x="718" y="16" width="1" height="1" fill="#ffffff"/>
<rect x="717" y="17" width="2" height="1" fill="#ffffff"/>
<rect x="716" y="18" width="1" height="1" fill="#ffffff"/>
<rect x="718" y="18" width="1" height="1" fill="#ffffff"/>
<rect x="715" y="19" width="1" height="1" fill="#ffffff"/>
<rect x="718" y="19" width="1" height="1" fill="#ffffff"/>
<rect x="715" y="20" width="5" height="1" fill="#ffffff"/>
<rect x="718" y="21" width="1" height="1" fill="#ffffff"/>
<rect x="718" y="22" width="1" height="1" fill="#ffffff"/>
<rect x="723" y="16" width="2" height="1" fill="#ffffff"/>
<rect x="722" y="17" width="1" height="1" fill="#ffffff"/>
<rect x="725" y="17" width="1" height="1" fill="#ffffff"/>
<rect x="722" y="18" width="1" height="1" fill="#ffffff"/>
<rect x="725" y="18" width="1" height="1" fill="#ffffff"/>
<rect x="722" y="19" width="1" height="1" fill="#ffffff"/>
<rect x="725" y="19" width="1" height="1" fill="#ffffff"/>
<rect x="722" y="20" width="1" height="1" fill="#ffffff"/>
<rect x="725" y="20" width="1" height="1" fill="#ffffff"/>
<rect x="722" y="21" width="1" height="1" fill="#ffffff"/>
<rect x="725" y="21" width="1" height="1" fill="#ffffff"/>
<rect x="723" y="22" width="2" height="1" fill="#ffffff"/>
<rect x="729" y="16" width="2" height="1" fill="#ffffff"/>
<rect x="728" y="17" width="1" height="1" fill="#ffffff"/>
<rect x="731" y="17" width="1" height="1" fill="#ffffff"/>
<rect x="728" y="18" width="1" height="1" fill="#ffffff"/>
<rect x="731" y="18" width="1" height="1" fill="#ffffff"/>
<rect x="728" y="19" width="1" height="1" fill="#ffffff"/>
<rect x="731" y="19" width="1" height="1" fill="#ffffff"/>
<rect x="728" y="20" width="1" height="1" fill="#ffffff"/>
<rect x="731" y="20" width="1" height="1" fill="#ffffff"/>
<rect x="728" y="21" width="1" height="1" fill="#ffffff"/>
<rect x="731" y="21" width="1" height="1" fill="#ffffff"/>
<rect x="729" y="22" width="2" height="1" fill="#ffffff"/>
<rect x="739" y="18" width="4" height="1" fill="#ffffff"/>
<rect x="740" y="19" width="1" height="1" fill="#ffffff"/>
<rect x="743" y="19" width="1" height="1" fill="#ffffff"/>
<rect x="740" y="20" width="1" height="1" fill="#ffffff"/>
<rect x="743" y="20" width="1" height="1" fill="#ffffff"/>
<rect x="740" y="21" width="1" height="1" fill="#ffffff"/>
<rect x="743" y="21" width="1" height="1" fill="#ffffff"/>
<rect x="739" y="22" width="3" height="1" fill="#ffffff"/>
<rect x="743" y="22" width="2" height="1" fill="#ffffff"/>
<rect x="747" y="18" width="3" height="1" fill="#ffffff"/>
<rect x="746" y="19" width="1" height="1" fill="#ffffff"/>
<rect x="747" y="20" width="2" height="1" fill="#ffffff"/>
<rect x="749" y="21" width="1" height="1" fill="#ffffff"/>
<rect x="746" y="22" width="3" height="1" fill="#ffffff"/>
<rect x="834" y="16" width="3" height="1" fill="#ffffff"/>
<rect x="833" y="17" width="2" height="1" fill="#ffffff"/>
<rect x="833" y="18" width="1" height="1" fill="#ffffff"/>
<rect x="833" y="19" width="4" height="1" fill="#ffffff"/>
<rect x="833" y="20" width="1" height="1" fill="#ffffff"/>
<rect x="837" y="20" width="1" height="1" fill="#ffffff"/>
<rect x="833" y="21" width="1" height="1" fill="#ffffff"/>
<rect x="837" y="21" width="1" height="1" fill="#ffffff"/>
<rect x="834" y="22" width="3" height="1" fill="#ffffff"/>
<rect x="841" y="16" width="2" height="1" fill="#ffffff"/>
<rect x="840" y="17" width="1" height="1" fill="#ffffff"/>
<rect x="843" y="17" width="1" height="1" fill="#ffffff"/>
<rect x="840" y="18" width="1" height="1" fill="#ffffff"/>
<rect x="843" y="18" width="1" height="1" fill="#ffffff"/>
<rect x="840" y="19" width="1" height="1" fill="#ffffff"/>
<rect x="843" y="19" width="1" height="1" fill="#ffffff"/>
<rect x="840" y="20" width="1" height="1" fill="#ffffff"/>
<rect x="843" y="20" width="1" height="1" fill="#ffffff"/>
<rect x="840" y="21" width="1" height="1" fill="#ffffff"/>
<rect x="843" y="21" width="1" height="1" fill="#ffffff"/>
<rect x="841" y="22" width="2" height="1" fill="#ffffff"/>
<rect x="847" y="16" width="2" height="1" fill="#ffffff"/>
<rect x="846" y="17" width="1" height="1" fill="#ffffff"/>
<rect x="849" y="17" width="1" height="1" fill="#ffffff"/>
<rect x="846" y="18" width="1" height="1" fill="#ffffff"/>
<rect x="849" y="18" width="1" height="1" fill="#ffffff"/>
<rect x="846" y="19" width="1" height="1" fill="#ffffff"/>
<rect x="849" y="19" width="1" height="1" fill="#ffffff"/>
<rect x="846" y="20" width="1" height="1" fill="#ffffff"/>
<rect x="849" y="20" width="1" height="1" fill="#ffffff"/>
<rect x="846" y="21" width="1" height="1" fill="#ffffff"/>
<rect x="849" y="21" width="1" height="1" fill="#ffffff"/>
<rect x="847" y="22" width="2" height="1" fill="#ffffff"/>
<rect x="857" y="18" width="4" height="1" fill="#ffffff"/>
<rect x="858" y="19" width="1" height="1" fill="#ffffff"/>
<rect x="861" y="19" width="1" height="1" fill="#ffffff"/>
<rect x="858" y="20" width="1" height="1" fill="#ffffff"/>
<rect x="861" y="20" width="1" height="1" fill="#ffffff"/>
<rect x="858" y="21" width="1" height="1" fill="#ffffff"/>
<rect x="861" y="21" width="1" height="1" fill="#ffffff"/>
<rect x="857" y="22" width="3" height="1" fill="#ffffff"/>
<rect x="861" y="22" width="2" height="1" fill="#ffffff"/>
<rect x="865" y="18" width="3" height="1" fill="#ffffff"/>
<rect x="864" y="19" width="1" height="1" fill="#ffffff"/>
<rect x="865" y="20" width="2" height="1" fill="#ffffff"/>
<rect x="867" y="21" width="1" height="1" fill="#ffffff"/>
<rect x="864" y="22" width="3" height="1" fill="#ffffff"/>
<rect x="952" y="16" width="2" height="1" fill="#ffffff"/>
<rect x="951" y="17" width="1" height="1" fill="#ffffff"/>
<rect x="954" y="17" width="1" height="1" fill="#ffffff"/>
<rect x="951" y="18" width="1" height="1" fill="#ffffff"/>
<rect x="954" y="18" width="1" height="1" fill="#ffffff"/>
<rect x="952" y="19" width="2" height="1" fill="#ffffff"/>
<rect x="951" y="20" width="1" height="1" fill="#ffffff"/>
<rect x="954" y="20" width="1" height="1" fill="#ffffff"/>
<rect x="951" y="21" width="1" height="1" fill="#ffffff"/>
<rect x="954" y="21" width="1" height="1" fill="#ffffff"/>
<rect x="952" y="22" width="2" height="1" fill="#ffffff"/>
<rect x="958" y="16" width="2" height="1" fill="#ffffff"/>
<rect x="957" y="17" width="1" height="1" fill="#ffffff"/>
<rect x="960" y="17" width="1" height="1" fill="#ffffff"/>
<rect x="957" y="18" width="1" height="1" fill="#ffffff"/>
<rect x="960" y="18" width="1" height="1" fill="#ffffff"/>
<rect x="957" y="19" width="1" height="1" fill="#ffffff"/>
<rect x="960" y="19" width="1" height="1" fill="#ffffff"/>
<rect x="957" y="20" width="1" height="1" fill="#ffffff"/>
<rect x="960" y="20" width="1" height="1" fill="#ffffff"/>
<rect x="957" y="21" width="1" height="1" fill="#ffffff"/>
<rect x="960" y="21" width="1" height="1" fill="#ffffff"/>
<rect x="958" y="22" width="2" height="1" fill="#ffffff"/>
<rect x="964" y="16" width="2" height="1" fill="#ffffff"/>
<rect x="963" y="17" width="1" height="1" fill="#ffffff"/>
<rect x="966" y="17" width="1" height="1" fill="#ffffff"/>
<rect x="963" y="18" width="1" height="1" fill="#ffffff"/>
<rect x="966" y="18" width="1" height="1" fill="#ffffff"/>
<rect x="963" y="19" width="1" height="1" fill="#ffffff"/>
<rect x="966" y="19" width="1" height="1" fill="#ffffff"/>
<rect x="963" y="20" width="1" height="1" fill="#ffffff"/>
<rect x="966" y="20" width="1" height="1" fill="#ffffff"/>
<rect x="963" y="21" width="1" height="1" fill="#ffffff"/>
<rect x="966" y="21" width="1" height="1" fill="#ffffff"/>
<rect x="964" y="22" width="2" height="1" fill="#ffffff"/>
<rect x="974" y="18" width="4" height="1" fill="#ffffff"/>
<rect x="975" y="19" width="1" height="1" fill="#ffffff"/>
<rect x="978" y="19" width="1" height="1" fill="#ffffff"/>
<rect x="975" y="20" width="1" height="1" fill="#ffffff"/>
<rect x="978" y="20" width="1" height="1" fill="#ffffff"/>
<rect x="975" y="21" width="1" height="1" fill="#ffffff"/>
<rect x="978" y="21" width="1" height="1" fill="#ffffff"/>
<rect x="974" y="22" width="3" height="1" fill="#ffffff"/>
<rect x="978" y="22" width="2" height="1" fill="#ffffff"/>
<rect x="982" y="18" width="3" height="1" fill="#ffffff"/>
<rect x="981" y="19" width="1" height="1" fill="#ffffff"/>
<rect x="982" y="20" width="2" height="1" fill="#ffffff"/>
<rect x="984" y="21" width="1" height="1" fill="#ffffff"/>
<rect x="981" y="22" width="3" height="1" fill="#ffffff"/>
<rect x="736" y="0" width="1" height="682" fill="#ffff00"/>
</svg>
</body></html>
